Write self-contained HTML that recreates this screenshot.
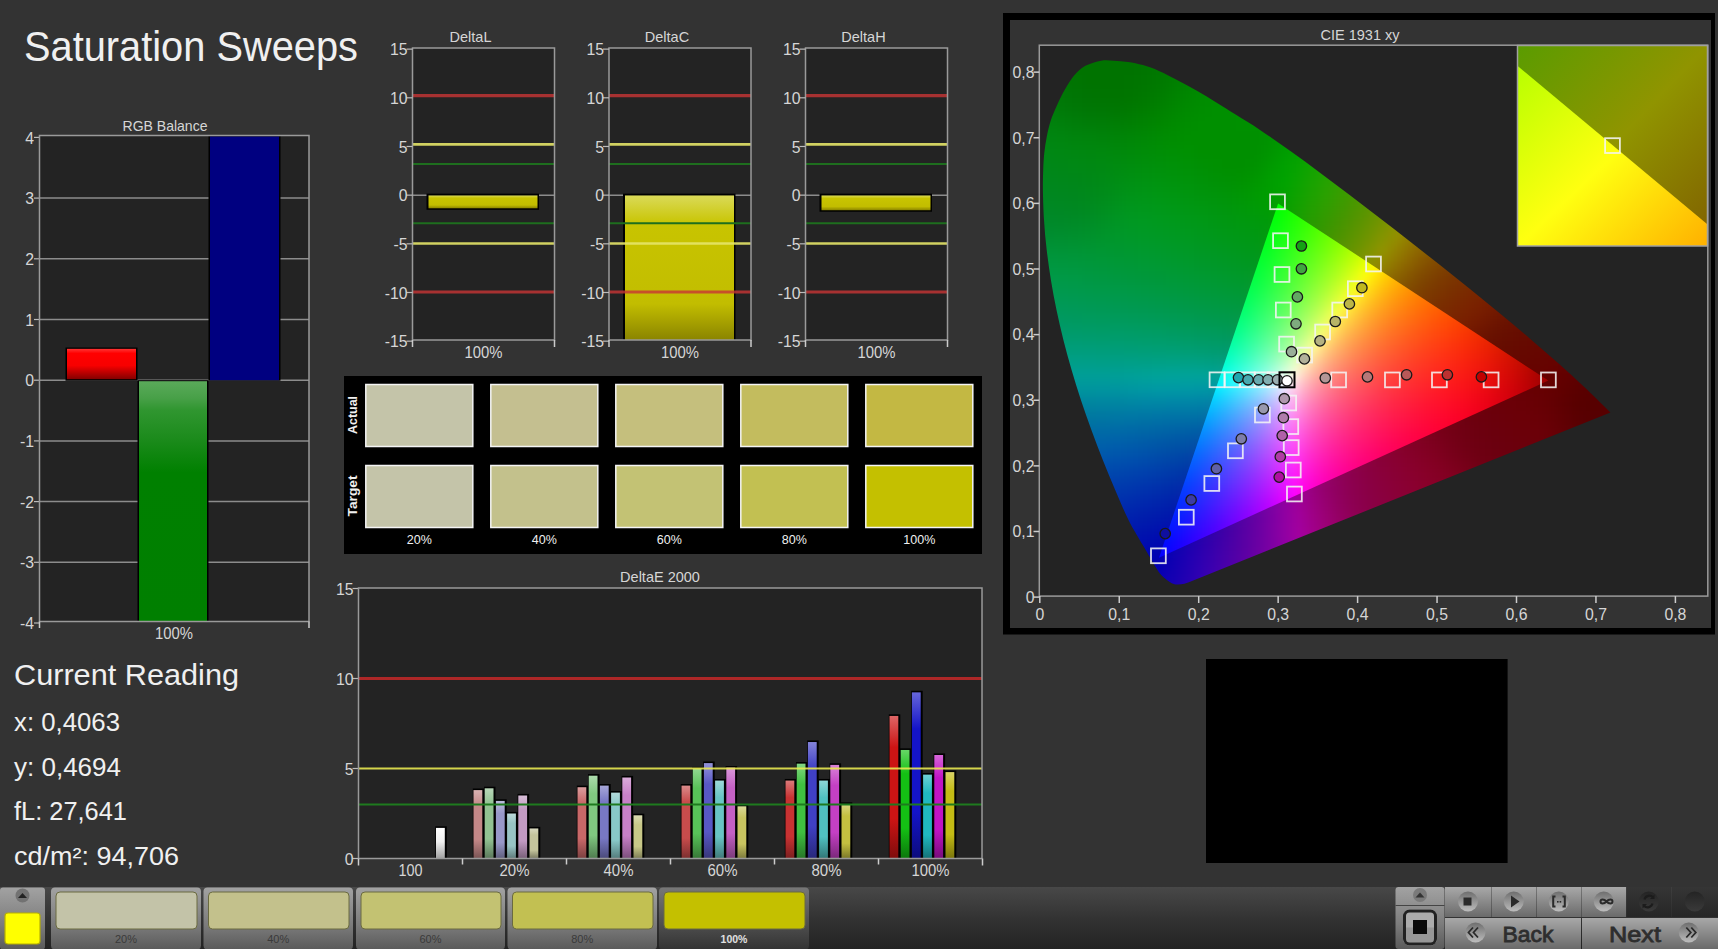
<!DOCTYPE html>
<html><head><meta charset="utf-8"><style>
html,body{margin:0;padding:0;background:#333333;width:1718px;height:949px;overflow:hidden}
svg{display:block;font-family:"Liberation Sans", sans-serif}
</style></head><body>
<svg width="1718" height="949" viewBox="0 0 1718 949">
<defs><linearGradient id="gR" x1="0" y1="0" x2="0" y2="1"><stop offset="0" stop-color="#ff3434"/><stop offset="0.15" stop-color="#ff0000"/><stop offset="0.55" stop-color="#f80000"/><stop offset="1" stop-color="#840000"/></linearGradient><linearGradient id="gG" x1="0" y1="0" x2="0" y2="1"><stop offset="0" stop-color="#5aaa5a"/><stop offset="0.07" stop-color="#48a048"/><stop offset="0.12" stop-color="#309630"/><stop offset="0.25" stop-color="#1a8a1a"/><stop offset="0.38" stop-color="#008000"/><stop offset="1" stop-color="#007f00"/></linearGradient><linearGradient id="gY" x1="0" y1="0" x2="0" y2="1"><stop offset="0" stop-color="#dada58"/><stop offset="0.2" stop-color="#c8c400"/><stop offset="0.75" stop-color="#c2bd00"/><stop offset="1" stop-color="#8a8400"/></linearGradient><linearGradient id="b1" x1="0" y1="0" x2="0" y2="1"><stop offset="0" stop-color="#d9b2b2"/><stop offset="0.22" stop-color="#c48888"/><stop offset="0.72" stop-color="#c48888"/><stop offset="1" stop-color="#7a5454"/></linearGradient><linearGradient id="b2" x1="0" y1="0" x2="0" y2="1"><stop offset="0" stop-color="#b8d7b8"/><stop offset="0.22" stop-color="#92c292"/><stop offset="0.72" stop-color="#92c292"/><stop offset="1" stop-color="#5b785b"/></linearGradient><linearGradient id="b3" x1="0" y1="0" x2="0" y2="1"><stop offset="0" stop-color="#bcbcdb"/><stop offset="0.22" stop-color="#9898c8"/><stop offset="0.72" stop-color="#9898c8"/><stop offset="1" stop-color="#5e5e7c"/></linearGradient><linearGradient id="b4" x1="0" y1="0" x2="0" y2="1"><stop offset="0" stop-color="#bcd9d9"/><stop offset="0.22" stop-color="#98c4c4"/><stop offset="0.72" stop-color="#98c4c4"/><stop offset="1" stop-color="#5e7a7a"/></linearGradient><linearGradient id="b5" x1="0" y1="0" x2="0" y2="1"><stop offset="0" stop-color="#d7bdd7"/><stop offset="0.22" stop-color="#c29ac2"/><stop offset="0.72" stop-color="#c29ac2"/><stop offset="1" stop-color="#785f78"/></linearGradient><linearGradient id="b6" x1="0" y1="0" x2="0" y2="1"><stop offset="0" stop-color="#d9d9bf"/><stop offset="0.22" stop-color="#c4c49c"/><stop offset="0.72" stop-color="#c4c49c"/><stop offset="1" stop-color="#7a7a61"/></linearGradient><linearGradient id="b7" x1="0" y1="0" x2="0" y2="1"><stop offset="0" stop-color="#db9d9d"/><stop offset="0.22" stop-color="#c86868"/><stop offset="0.72" stop-color="#c86868"/><stop offset="1" stop-color="#7c4040"/></linearGradient><linearGradient id="b8" x1="0" y1="0" x2="0" y2="1"><stop offset="0" stop-color="#acdbac"/><stop offset="0.22" stop-color="#80c880"/><stop offset="0.72" stop-color="#80c880"/><stop offset="1" stop-color="#4f7c4f"/></linearGradient><linearGradient id="b9" x1="0" y1="0" x2="0" y2="1"><stop offset="0" stop-color="#a7a7d9"/><stop offset="0.22" stop-color="#7878c4"/><stop offset="0.72" stop-color="#7878c4"/><stop offset="1" stop-color="#4a4a7a"/></linearGradient><linearGradient id="b10" x1="0" y1="0" x2="0" y2="1"><stop offset="0" stop-color="#b2dbdb"/><stop offset="0.22" stop-color="#88c8c8"/><stop offset="0.72" stop-color="#88c8c8"/><stop offset="1" stop-color="#547c7c"/></linearGradient><linearGradient id="b11" x1="0" y1="0" x2="0" y2="1"><stop offset="0" stop-color="#dbacdb"/><stop offset="0.22" stop-color="#c880c8"/><stop offset="0.72" stop-color="#c880c8"/><stop offset="1" stop-color="#7c4f7c"/></linearGradient><linearGradient id="b12" x1="0" y1="0" x2="0" y2="1"><stop offset="0" stop-color="#dbdbb2"/><stop offset="0.22" stop-color="#c8c888"/><stop offset="0.72" stop-color="#c8c888"/><stop offset="1" stop-color="#7c7c54"/></linearGradient><linearGradient id="b13" x1="0" y1="0" x2="0" y2="1"><stop offset="0" stop-color="#db8b8b"/><stop offset="0.22" stop-color="#c84c4c"/><stop offset="0.72" stop-color="#c84c4c"/><stop offset="1" stop-color="#7c2f2f"/></linearGradient><linearGradient id="b14" x1="0" y1="0" x2="0" y2="1"><stop offset="0" stop-color="#92d792"/><stop offset="0.22" stop-color="#58c258"/><stop offset="0.72" stop-color="#58c258"/><stop offset="1" stop-color="#377837"/></linearGradient><linearGradient id="b15" x1="0" y1="0" x2="0" y2="1"><stop offset="0" stop-color="#9292d9"/><stop offset="0.22" stop-color="#5858c4"/><stop offset="0.72" stop-color="#5858c4"/><stop offset="1" stop-color="#37377a"/></linearGradient><linearGradient id="b16" x1="0" y1="0" x2="0" y2="1"><stop offset="0" stop-color="#9dd9d9"/><stop offset="0.22" stop-color="#68c4c4"/><stop offset="0.72" stop-color="#68c4c4"/><stop offset="1" stop-color="#407a7a"/></linearGradient><linearGradient id="b17" x1="0" y1="0" x2="0" y2="1"><stop offset="0" stop-color="#d998d9"/><stop offset="0.22" stop-color="#c460c4"/><stop offset="0.72" stop-color="#c460c4"/><stop offset="1" stop-color="#7a3c7a"/></linearGradient><linearGradient id="b18" x1="0" y1="0" x2="0" y2="1"><stop offset="0" stop-color="#dbd998"/><stop offset="0.22" stop-color="#c8c460"/><stop offset="0.72" stop-color="#c8c460"/><stop offset="1" stop-color="#7c7a3c"/></linearGradient><linearGradient id="b19" x1="0" y1="0" x2="0" y2="1"><stop offset="0" stop-color="#db7a7a"/><stop offset="0.22" stop-color="#c83232"/><stop offset="0.72" stop-color="#c83232"/><stop offset="1" stop-color="#7c1f1f"/></linearGradient><linearGradient id="b20" x1="0" y1="0" x2="0" y2="1"><stop offset="0" stop-color="#83d683"/><stop offset="0.22" stop-color="#40c040"/><stop offset="0.72" stop-color="#40c040"/><stop offset="1" stop-color="#287728"/></linearGradient><linearGradient id="b21" x1="0" y1="0" x2="0" y2="1"><stop offset="0" stop-color="#8383d9"/><stop offset="0.22" stop-color="#4040c4"/><stop offset="0.72" stop-color="#4040c4"/><stop offset="1" stop-color="#28287a"/></linearGradient><linearGradient id="b22" x1="0" y1="0" x2="0" y2="1"><stop offset="0" stop-color="#8dd6d6"/><stop offset="0.22" stop-color="#50c0c0"/><stop offset="0.72" stop-color="#50c0c0"/><stop offset="1" stop-color="#327777"/></linearGradient><linearGradient id="b23" x1="0" y1="0" x2="0" y2="1"><stop offset="0" stop-color="#d983d9"/><stop offset="0.22" stop-color="#c440c4"/><stop offset="0.72" stop-color="#c440c4"/><stop offset="1" stop-color="#7a287a"/></linearGradient><linearGradient id="b24" x1="0" y1="0" x2="0" y2="1"><stop offset="0" stop-color="#d9d683"/><stop offset="0.22" stop-color="#c4c040"/><stop offset="0.72" stop-color="#c4c040"/><stop offset="1" stop-color="#7a7728"/></linearGradient><linearGradient id="b25" x1="0" y1="0" x2="0" y2="1"><stop offset="0" stop-color="#de6666"/><stop offset="0.22" stop-color="#cc1414"/><stop offset="0.72" stop-color="#cc1414"/><stop offset="1" stop-color="#7e0c0c"/></linearGradient><linearGradient id="b26" x1="0" y1="0" x2="0" y2="1"><stop offset="0" stop-color="#66d666"/><stop offset="0.22" stop-color="#14c014"/><stop offset="0.72" stop-color="#14c014"/><stop offset="1" stop-color="#0c770c"/></linearGradient><linearGradient id="b27" x1="0" y1="0" x2="0" y2="1"><stop offset="0" stop-color="#6666db"/><stop offset="0.22" stop-color="#1414c8"/><stop offset="0.72" stop-color="#1414c8"/><stop offset="1" stop-color="#0c0c7c"/></linearGradient><linearGradient id="b28" x1="0" y1="0" x2="0" y2="1"><stop offset="0" stop-color="#6ed1d6"/><stop offset="0.22" stop-color="#20b8c0"/><stop offset="0.72" stop-color="#20b8c0"/><stop offset="1" stop-color="#147277"/></linearGradient><linearGradient id="b29" x1="0" y1="0" x2="0" y2="1"><stop offset="0" stop-color="#d666d9"/><stop offset="0.22" stop-color="#c014c4"/><stop offset="0.72" stop-color="#c014c4"/><stop offset="1" stop-color="#770c7a"/></linearGradient><linearGradient id="b30" x1="0" y1="0" x2="0" y2="1"><stop offset="0" stop-color="#d9d366"/><stop offset="0.22" stop-color="#c4bc14"/><stop offset="0.72" stop-color="#c4bc14"/><stop offset="1" stop-color="#7a750c"/></linearGradient><linearGradient id="bw" x1="0" y1="0" x2="0" y2="1"><stop offset="0" stop-color="#ffffff"/><stop offset="0.45" stop-color="#f0f0f0"/><stop offset="1" stop-color="#a0a0a0"/></linearGradient><clipPath id="cLoc"><path d="M1178.0 584.6C1177.0 584.4 1174.5 584.8 1171.7 583.2C1168.9 581.6 1164.4 578.5 1161.2 575.0C1158.0 571.5 1155.6 566.9 1152.8 562.3C1150.0 557.7 1148.3 554.6 1144.3 547.6C1140.2 540.6 1133.3 529.6 1128.5 520.0C1123.7 510.4 1119.5 500.0 1115.2 490.0C1110.9 480.0 1106.8 470.0 1102.8 460.0C1098.8 450.0 1095.1 440.0 1091.4 430.0C1087.8 420.0 1084.2 410.0 1080.9 400.0C1077.6 390.0 1074.5 380.0 1071.6 370.0C1068.7 360.0 1065.9 350.0 1063.4 340.0C1060.9 330.0 1058.6 320.0 1056.5 310.0C1054.4 300.0 1052.5 290.0 1050.9 280.0C1049.3 270.0 1047.9 260.0 1046.7 250.0C1045.5 240.0 1044.6 230.0 1044.0 220.0C1043.4 210.0 1043.0 198.3 1042.9 190.0C1042.8 181.7 1043.0 176.2 1043.2 170.0C1043.4 163.8 1043.7 158.2 1044.3 152.7C1044.9 147.2 1045.7 142.2 1046.7 136.9C1047.8 131.6 1048.9 126.4 1050.6 121.1C1052.3 115.8 1054.6 110.6 1057.0 105.3C1059.4 100.0 1062.0 94.5 1064.9 89.5C1067.8 84.5 1070.9 79.2 1074.3 75.3C1077.7 71.3 1080.9 68.2 1085.4 65.8C1089.9 63.4 1096.5 61.6 1101.2 60.7C1105.9 59.9 1109.3 60.5 1113.8 60.7C1118.3 60.9 1123.1 61.2 1128.0 61.9C1132.9 62.6 1137.8 63.6 1143.0 65.1C1148.2 66.6 1153.2 68.4 1159.0 70.9C1164.8 73.5 1171.7 77.1 1178.0 80.4C1184.3 83.7 1190.6 87.2 1196.9 90.8C1203.2 94.4 1209.4 98.2 1215.9 102.2C1222.4 106.2 1228.7 110.2 1236.0 114.8C1243.3 119.4 1251.0 123.9 1260.0 129.9C1269.0 135.9 1280.0 143.7 1290.0 150.8C1300.0 157.9 1310.0 165.3 1320.0 172.7C1330.0 180.1 1340.0 187.7 1350.0 195.3C1360.0 202.9 1370.0 210.5 1380.0 218.2C1390.0 225.9 1400.0 233.7 1410.0 241.5C1420.0 249.3 1430.0 257.2 1440.0 265.1C1450.0 273.0 1460.0 281.0 1470.0 289.1C1480.0 297.2 1490.0 305.2 1500.0 313.5C1510.0 321.8 1520.0 330.1 1530.0 338.7C1540.0 347.2 1550.0 355.9 1560.0 364.8C1570.0 373.8 1581.6 384.5 1590.0 392.4C1598.4 400.3 1607.0 409.1 1610.4 412.4L1192 581Q1184 584.5 1178 584.6Z"/></clipPath><clipPath id="cTri"><path d="M1548.3 380.6L1278.1 203.4L1159.0 557.7Z"/></clipPath><filter id="blr" filterUnits="userSpaceOnUse" x="1012" y="33" width="640" height="590"><feGaussianBlur stdDeviation="6" color-interpolation-filters="sRGB"/></filter><filter id="blr2" filterUnits="userSpaceOnUse" x="1130" y="170" width="450" height="420"><feGaussianBlur stdDeviation="4" color-interpolation-filters="sRGB"/></filter><linearGradient id="inL" x1="0" y1="0" x2="1" y2="0"><stop offset="0" stop-color="#b4ff00"/><stop offset="0.5" stop-color="#ffff00"/><stop offset="1" stop-color="#ffb400"/></linearGradient><linearGradient id="inU" x1="0" y1="0" x2="1" y2="1"><stop offset="0" stop-color="#5a9c00"/><stop offset="0.5" stop-color="#909400"/><stop offset="1" stop-color="#806000"/></linearGradient><linearGradient id="inD" x1="0" y1="0" x2="1" y2="1"><stop offset="0" stop-color="#b8ff00"/><stop offset="0.5" stop-color="#ffff10"/><stop offset="1" stop-color="#ffb000"/></linearGradient><linearGradient id="tb" x1="0" y1="0" x2="0" y2="1"><stop offset="0" stop-color="#484848"/><stop offset="0.5" stop-color="#333333"/><stop offset="1" stop-color="#232323"/></linearGradient><linearGradient id="sw" x1="0" y1="0" x2="0" y2="1"><stop offset="0" stop-color="#a2a2a2"/><stop offset="0.6" stop-color="#7c7c7c"/><stop offset="1" stop-color="#5a5a5a"/></linearGradient><linearGradient id="swS" x1="0" y1="0" x2="0" y2="1"><stop offset="0" stop-color="#777777"/><stop offset="0.5" stop-color="#555555"/><stop offset="1" stop-color="#333333"/></linearGradient><linearGradient id="btn" x1="0" y1="0" x2="0" y2="1"><stop offset="0" stop-color="#a8a8a8"/><stop offset="1" stop-color="#6a6a6a"/></linearGradient><linearGradient id="circ" x1="0" y1="0" x2="0" y2="1"><stop offset="0" stop-color="#6e6e6e"/><stop offset="1" stop-color="#bdbdbd"/></linearGradient><linearGradient id="circD" x1="0" y1="0" x2="0" y2="1"><stop offset="0" stop-color="#242424"/><stop offset="1" stop-color="#3a3a3a"/></linearGradient><linearGradient id="tbD" x1="0" y1="0" x2="0" y2="1"><stop offset="0" stop-color="#353535"/><stop offset="1" stop-color="#262626"/></linearGradient></defs>
<rect width="1718" height="949" fill="#333333"/>
<text x="24" y="60.5" font-size="42" fill="#f0f0f0" text-anchor="start" font-weight="normal" textLength="334" lengthAdjust="spacingAndGlyphs" >Saturation Sweeps</text>
<text x="165" y="131" font-size="14.5" fill="#d6d6d6" text-anchor="middle" font-weight="normal" textLength="85" lengthAdjust="spacingAndGlyphs" >RGB Balance</text>
<rect x="39.5" y="135.5" width="269.5" height="486" fill="#232323" />
<path d="M39.5 198.1L309 198.1" stroke="#8c8c8c" stroke-width="1.5" />
<path d="M39.5 258.8L309 258.8" stroke="#8c8c8c" stroke-width="1.5" />
<path d="M39.5 319.5L309 319.5" stroke="#8c8c8c" stroke-width="1.5" />
<path d="M39.5 380.2L309 380.2" stroke="#8c8c8c" stroke-width="1.5" />
<path d="M39.5 440.9L309 440.9" stroke="#8c8c8c" stroke-width="1.5" />
<path d="M39.5 501.6L309 501.6" stroke="#8c8c8c" stroke-width="1.5" />
<path d="M39.5 562.3L309 562.3" stroke="#8c8c8c" stroke-width="1.5" />
<path d="M34 137.4L39.5 137.4" stroke="#bbbbbb" stroke-width="1.2" />
<text x="34" y="143.5" font-size="15.8" fill="#d6d6d6" text-anchor="end" font-weight="normal" >4</text>
<path d="M34 198.1L39.5 198.1" stroke="#bbbbbb" stroke-width="1.2" />
<text x="34" y="204.2" font-size="15.8" fill="#d6d6d6" text-anchor="end" font-weight="normal" >3</text>
<path d="M34 258.8L39.5 258.8" stroke="#bbbbbb" stroke-width="1.2" />
<text x="34" y="264.9" font-size="15.8" fill="#d6d6d6" text-anchor="end" font-weight="normal" >2</text>
<path d="M34 319.5L39.5 319.5" stroke="#bbbbbb" stroke-width="1.2" />
<text x="34" y="325.6" font-size="15.8" fill="#d6d6d6" text-anchor="end" font-weight="normal" >1</text>
<path d="M34 380.2L39.5 380.2" stroke="#bbbbbb" stroke-width="1.2" />
<text x="34" y="386.3" font-size="15.8" fill="#d6d6d6" text-anchor="end" font-weight="normal" >0</text>
<path d="M34 440.9L39.5 440.9" stroke="#bbbbbb" stroke-width="1.2" />
<text x="34" y="447" font-size="15.8" fill="#d6d6d6" text-anchor="end" font-weight="normal" >-1</text>
<path d="M34 501.6L39.5 501.6" stroke="#bbbbbb" stroke-width="1.2" />
<text x="34" y="507.7" font-size="15.8" fill="#d6d6d6" text-anchor="end" font-weight="normal" >-2</text>
<path d="M34 562.3L39.5 562.3" stroke="#bbbbbb" stroke-width="1.2" />
<text x="34" y="568.4" font-size="15.8" fill="#d6d6d6" text-anchor="end" font-weight="normal" >-3</text>
<path d="M34 623L39.5 623" stroke="#bbbbbb" stroke-width="1.2" />
<text x="34" y="629.1" font-size="15.8" fill="#d6d6d6" text-anchor="end" font-weight="normal" >-4</text>
<rect x="65.5" y="347.529" width="72" height="33.171" fill="#000" />
<rect x="67" y="348.829" width="69" height="30.371" fill="url(#gR)" />
<rect x="137.5" y="380.2" width="71" height="241.3" fill="#000" />
<rect x="139" y="381.2" width="68" height="240.3" fill="url(#gG)" />
<rect x="208.5" y="135.5" width="72" height="245.2" fill="#000" />
<rect x="210" y="136.5" width="69" height="243.7" fill="#000080" />
<rect x="39.5" y="135.5" width="269.5" height="486" fill="none" stroke="#9a9a9a" stroke-width="1.5"/>
<path d="M39.5 621.5L39.5 628" stroke="#cccccc" stroke-width="1.5" />
<path d="M309 621.5L309 628" stroke="#cccccc" stroke-width="1.5" />
<text x="174" y="638.5" font-size="15.8" fill="#d6d6d6" text-anchor="middle" font-weight="normal" textLength="38" lengthAdjust="spacingAndGlyphs" >100%</text>
<text x="14" y="684.5" font-size="30" fill="#f0f0f0" text-anchor="start" font-weight="normal" textLength="225" lengthAdjust="spacingAndGlyphs" >Current Reading</text>
<text x="14" y="731" font-size="25" fill="#f0f0f0" text-anchor="start" font-weight="normal" textLength="106" lengthAdjust="spacingAndGlyphs" >x: 0,4063</text>
<text x="14" y="775.5" font-size="25" fill="#f0f0f0" text-anchor="start" font-weight="normal" textLength="107" lengthAdjust="spacingAndGlyphs" >y: 0,4694</text>
<text x="14" y="820" font-size="25" fill="#f0f0f0" text-anchor="start" font-weight="normal" textLength="113" lengthAdjust="spacingAndGlyphs" >fL: 27,641</text>
<text x="14" y="864.5" font-size="25" fill="#f0f0f0" text-anchor="start" font-weight="normal" textLength="165" lengthAdjust="spacingAndGlyphs" >cd/m&#178;: 94,706</text>
<text x="470.5" y="41.5" font-size="14.5" fill="#d6d6d6" text-anchor="middle" font-weight="normal" >DeltaL</text>
<rect x="412.5" y="48" width="142" height="292" fill="#232323" />
<path d="M412.5 195.15L554.5 195.15" stroke="#8c8c8c" stroke-width="1.5" />
<rect x="426.5" y="193.65" width="112.5" height="16.1422" fill="#000" />
<rect x="428.5" y="195.45" width="109" height="12.8422" fill="url(#gY)" />
<path d="M412.5 95.7L554.5 95.7" stroke="#c83434" stroke-width="3.2" stroke-opacity="0.8"/>
<path d="M412.5 292L554.5 292" stroke="#c83434" stroke-width="3.2" stroke-opacity="0.8"/>
<path d="M412.5 144.4L554.5 144.4" stroke="#e4e468" stroke-width="2.6" stroke-opacity="0.9"/>
<path d="M412.5 243.5L554.5 243.5" stroke="#e4e468" stroke-width="2.6" stroke-opacity="0.9"/>
<path d="M412.5 164L554.5 164" stroke="#1e6e1e" stroke-width="2" />
<path d="M412.5 223.3L554.5 223.3" stroke="#1e6e1e" stroke-width="2" />
<rect x="412.5" y="48" width="142" height="292" fill="none" stroke="#9a9a9a" stroke-width="1.5"/>
<path d="M406.5 49.125L412.5 49.125" stroke="#bbbbbb" stroke-width="1.2" />
<text x="407.5" y="55.225" font-size="15.8" fill="#d6d6d6" text-anchor="end" font-weight="normal" >15</text>
<path d="M406.5 97.8L412.5 97.8" stroke="#bbbbbb" stroke-width="1.2" />
<text x="407.5" y="103.9" font-size="15.8" fill="#d6d6d6" text-anchor="end" font-weight="normal" >10</text>
<path d="M406.5 146.475L412.5 146.475" stroke="#bbbbbb" stroke-width="1.2" />
<text x="407.5" y="152.575" font-size="15.8" fill="#d6d6d6" text-anchor="end" font-weight="normal" >5</text>
<path d="M406.5 195.15L412.5 195.15" stroke="#bbbbbb" stroke-width="1.2" />
<text x="407.5" y="201.25" font-size="15.8" fill="#d6d6d6" text-anchor="end" font-weight="normal" >0</text>
<path d="M406.5 243.825L412.5 243.825" stroke="#bbbbbb" stroke-width="1.2" />
<text x="407.5" y="249.925" font-size="15.8" fill="#d6d6d6" text-anchor="end" font-weight="normal" >-5</text>
<path d="M406.5 292.5L412.5 292.5" stroke="#bbbbbb" stroke-width="1.2" />
<text x="407.5" y="298.6" font-size="15.8" fill="#d6d6d6" text-anchor="end" font-weight="normal" >-10</text>
<path d="M406.5 341.175L412.5 341.175" stroke="#bbbbbb" stroke-width="1.2" />
<text x="407.5" y="347.275" font-size="15.8" fill="#d6d6d6" text-anchor="end" font-weight="normal" >-15</text>
<path d="M412.5 340L412.5 347" stroke="#cccccc" stroke-width="1.5" />
<path d="M554.5 340L554.5 347" stroke="#cccccc" stroke-width="1.5" />
<text x="483.5" y="357.5" font-size="15.8" fill="#d6d6d6" text-anchor="middle" font-weight="normal" textLength="38" lengthAdjust="spacingAndGlyphs" >100%</text>
<text x="667" y="41.5" font-size="14.5" fill="#d6d6d6" text-anchor="middle" font-weight="normal" >DeltaC</text>
<rect x="609" y="48" width="142" height="292" fill="#232323" />
<path d="M609 195.15L751 195.15" stroke="#8c8c8c" stroke-width="1.5" />
<rect x="623" y="193.65" width="112.5" height="146.35" fill="#000" />
<rect x="625" y="195.45" width="109" height="144.55" fill="url(#gY)" />
<path d="M609 95.7L751 95.7" stroke="#c83434" stroke-width="3.2" stroke-opacity="0.8"/>
<path d="M609 292L751 292" stroke="#c83434" stroke-width="3.2" stroke-opacity="0.8"/>
<path d="M609 144.4L751 144.4" stroke="#e4e468" stroke-width="2.6" stroke-opacity="0.9"/>
<path d="M609 243.5L751 243.5" stroke="#e4e468" stroke-width="2.6" stroke-opacity="0.9"/>
<path d="M609 164L751 164" stroke="#1e6e1e" stroke-width="2" />
<path d="M609 223.3L751 223.3" stroke="#1e6e1e" stroke-width="2" />
<rect x="609" y="48" width="142" height="292" fill="none" stroke="#9a9a9a" stroke-width="1.5"/>
<path d="M603 49.125L609 49.125" stroke="#bbbbbb" stroke-width="1.2" />
<text x="604" y="55.225" font-size="15.8" fill="#d6d6d6" text-anchor="end" font-weight="normal" >15</text>
<path d="M603 97.8L609 97.8" stroke="#bbbbbb" stroke-width="1.2" />
<text x="604" y="103.9" font-size="15.8" fill="#d6d6d6" text-anchor="end" font-weight="normal" >10</text>
<path d="M603 146.475L609 146.475" stroke="#bbbbbb" stroke-width="1.2" />
<text x="604" y="152.575" font-size="15.8" fill="#d6d6d6" text-anchor="end" font-weight="normal" >5</text>
<path d="M603 195.15L609 195.15" stroke="#bbbbbb" stroke-width="1.2" />
<text x="604" y="201.25" font-size="15.8" fill="#d6d6d6" text-anchor="end" font-weight="normal" >0</text>
<path d="M603 243.825L609 243.825" stroke="#bbbbbb" stroke-width="1.2" />
<text x="604" y="249.925" font-size="15.8" fill="#d6d6d6" text-anchor="end" font-weight="normal" >-5</text>
<path d="M603 292.5L609 292.5" stroke="#bbbbbb" stroke-width="1.2" />
<text x="604" y="298.6" font-size="15.8" fill="#d6d6d6" text-anchor="end" font-weight="normal" >-10</text>
<path d="M603 341.175L609 341.175" stroke="#bbbbbb" stroke-width="1.2" />
<text x="604" y="347.275" font-size="15.8" fill="#d6d6d6" text-anchor="end" font-weight="normal" >-15</text>
<path d="M609 340L609 347" stroke="#cccccc" stroke-width="1.5" />
<path d="M751 340L751 347" stroke="#cccccc" stroke-width="1.5" />
<text x="680" y="357.5" font-size="15.8" fill="#d6d6d6" text-anchor="middle" font-weight="normal" textLength="38" lengthAdjust="spacingAndGlyphs" >100%</text>
<text x="863.5" y="41.5" font-size="14.5" fill="#d6d6d6" text-anchor="middle" font-weight="normal" >DeltaH</text>
<rect x="805.5" y="48" width="142" height="292" fill="#232323" />
<path d="M805.5 195.15L947.5 195.15" stroke="#8c8c8c" stroke-width="1.5" />
<rect x="819.5" y="193.65" width="112.5" height="18.0892" fill="#000" />
<rect x="821.5" y="195.45" width="109" height="14.7892" fill="url(#gY)" />
<path d="M805.5 95.7L947.5 95.7" stroke="#c83434" stroke-width="3.2" stroke-opacity="0.8"/>
<path d="M805.5 292L947.5 292" stroke="#c83434" stroke-width="3.2" stroke-opacity="0.8"/>
<path d="M805.5 144.4L947.5 144.4" stroke="#e4e468" stroke-width="2.6" stroke-opacity="0.9"/>
<path d="M805.5 243.5L947.5 243.5" stroke="#e4e468" stroke-width="2.6" stroke-opacity="0.9"/>
<path d="M805.5 164L947.5 164" stroke="#1e6e1e" stroke-width="2" />
<path d="M805.5 223.3L947.5 223.3" stroke="#1e6e1e" stroke-width="2" />
<rect x="805.5" y="48" width="142" height="292" fill="none" stroke="#9a9a9a" stroke-width="1.5"/>
<path d="M799.5 49.125L805.5 49.125" stroke="#bbbbbb" stroke-width="1.2" />
<text x="800.5" y="55.225" font-size="15.8" fill="#d6d6d6" text-anchor="end" font-weight="normal" >15</text>
<path d="M799.5 97.8L805.5 97.8" stroke="#bbbbbb" stroke-width="1.2" />
<text x="800.5" y="103.9" font-size="15.8" fill="#d6d6d6" text-anchor="end" font-weight="normal" >10</text>
<path d="M799.5 146.475L805.5 146.475" stroke="#bbbbbb" stroke-width="1.2" />
<text x="800.5" y="152.575" font-size="15.8" fill="#d6d6d6" text-anchor="end" font-weight="normal" >5</text>
<path d="M799.5 195.15L805.5 195.15" stroke="#bbbbbb" stroke-width="1.2" />
<text x="800.5" y="201.25" font-size="15.8" fill="#d6d6d6" text-anchor="end" font-weight="normal" >0</text>
<path d="M799.5 243.825L805.5 243.825" stroke="#bbbbbb" stroke-width="1.2" />
<text x="800.5" y="249.925" font-size="15.8" fill="#d6d6d6" text-anchor="end" font-weight="normal" >-5</text>
<path d="M799.5 292.5L805.5 292.5" stroke="#bbbbbb" stroke-width="1.2" />
<text x="800.5" y="298.6" font-size="15.8" fill="#d6d6d6" text-anchor="end" font-weight="normal" >-10</text>
<path d="M799.5 341.175L805.5 341.175" stroke="#bbbbbb" stroke-width="1.2" />
<text x="800.5" y="347.275" font-size="15.8" fill="#d6d6d6" text-anchor="end" font-weight="normal" >-15</text>
<path d="M805.5 340L805.5 347" stroke="#cccccc" stroke-width="1.5" />
<path d="M947.5 340L947.5 347" stroke="#cccccc" stroke-width="1.5" />
<text x="876.5" y="357.5" font-size="15.8" fill="#d6d6d6" text-anchor="middle" font-weight="normal" textLength="38" lengthAdjust="spacingAndGlyphs" >100%</text>
<rect x="344" y="376" width="638" height="178" fill="#000" />
<rect x="365.8" y="384.5" width="107" height="62" fill="#c4c4a9" stroke="#f4f4f4" stroke-width="1.5"/>
<rect x="365.8" y="465.5" width="107" height="62" fill="#c4c4a9" stroke="#f4f4f4" stroke-width="1.5"/>
<text x="419.3" y="544" font-size="12.5" fill="#f0f0f0" text-anchor="middle" font-weight="normal" >20%</text>
<rect x="490.8" y="384.5" width="107" height="62" fill="#c4bf90" stroke="#f4f4f4" stroke-width="1.5"/>
<rect x="490.8" y="465.5" width="107" height="62" fill="#c3c18c" stroke="#f4f4f4" stroke-width="1.5"/>
<text x="544.3" y="544" font-size="12.5" fill="#f0f0f0" text-anchor="middle" font-weight="normal" >40%</text>
<rect x="615.8" y="384.5" width="107" height="62" fill="#c5bf7d" stroke="#f4f4f4" stroke-width="1.5"/>
<rect x="615.8" y="465.5" width="107" height="62" fill="#c3c274" stroke="#f4f4f4" stroke-width="1.5"/>
<text x="669.3" y="544" font-size="12.5" fill="#f0f0f0" text-anchor="middle" font-weight="normal" >60%</text>
<rect x="740.8" y="384.5" width="107" height="62" fill="#c3bc5e" stroke="#f4f4f4" stroke-width="1.5"/>
<rect x="740.8" y="465.5" width="107" height="62" fill="#c2c052" stroke="#f4f4f4" stroke-width="1.5"/>
<text x="794.3" y="544" font-size="12.5" fill="#f0f0f0" text-anchor="middle" font-weight="normal" >80%</text>
<rect x="865.8" y="384.5" width="107" height="62" fill="#c3b843" stroke="#f4f4f4" stroke-width="1.5"/>
<rect x="865.8" y="465.5" width="107" height="62" fill="#c4c000" stroke="#f4f4f4" stroke-width="1.5"/>
<text x="919.3" y="544" font-size="12.5" fill="#f0f0f0" text-anchor="middle" font-weight="normal" >100%</text>
<text transform="translate(357,415) rotate(-90)" font-size="13" font-weight="bold" fill="#f0f0f0" text-anchor="middle" textLength="38" lengthAdjust="spacingAndGlyphs">Actual</text>
<text transform="translate(357,496) rotate(-90)" font-size="13" font-weight="bold" fill="#f0f0f0" text-anchor="middle" textLength="41" lengthAdjust="spacingAndGlyphs">Target</text>
<text x="660" y="581.5" font-size="14.5" fill="#d6d6d6" text-anchor="middle" font-weight="normal" >DeltaE 2000</text>
<rect x="358.5" y="588" width="623.5" height="270.5" fill="#232323" />
<path d="M352.5 588.5L358.5 588.5" stroke="#bbbbbb" stroke-width="1.2" />
<text x="353.5" y="594.6" font-size="15.8" fill="#d6d6d6" text-anchor="end" font-weight="normal" >15</text>
<path d="M352.5 678.5L358.5 678.5" stroke="#bbbbbb" stroke-width="1.2" />
<text x="353.5" y="684.6" font-size="15.8" fill="#d6d6d6" text-anchor="end" font-weight="normal" >10</text>
<path d="M352.5 768.5L358.5 768.5" stroke="#bbbbbb" stroke-width="1.2" />
<text x="353.5" y="774.6" font-size="15.8" fill="#d6d6d6" text-anchor="end" font-weight="normal" >5</text>
<path d="M352.5 858.5L358.5 858.5" stroke="#bbbbbb" stroke-width="1.2" />
<text x="353.5" y="864.6" font-size="15.8" fill="#d6d6d6" text-anchor="end" font-weight="normal" >0</text>
<rect x="472.8" y="788.5" width="11.5" height="70" fill="#000" />
<rect x="473.5" y="790.1" width="8.8" height="68.4" fill="url(#b1)" />
<rect x="484" y="786.7" width="11.5" height="71.8" fill="#000" />
<rect x="484.7" y="788.3" width="8.8" height="70.2" fill="url(#b2)" />
<rect x="495.2" y="799.3" width="11.5" height="59.2" fill="#000" />
<rect x="495.9" y="800.9" width="8.8" height="57.6" fill="url(#b3)" />
<rect x="506.4" y="811.9" width="11.5" height="46.6" fill="#000" />
<rect x="507.1" y="813.5" width="8.8" height="45" fill="url(#b4)" />
<rect x="517.6" y="793.9" width="11.5" height="64.6" fill="#000" />
<rect x="518.3" y="795.5" width="8.8" height="63" fill="url(#b5)" />
<rect x="528.8" y="826.84" width="11.5" height="31.66" fill="#000" />
<rect x="529.5" y="828.44" width="8.8" height="30.06" fill="url(#b6)" />
<rect x="576.8" y="785.62" width="11.5" height="72.88" fill="#000" />
<rect x="577.5" y="787.22" width="8.8" height="71.28" fill="url(#b7)" />
<rect x="588" y="774.1" width="11.5" height="84.4" fill="#000" />
<rect x="588.7" y="775.7" width="8.8" height="82.8" fill="url(#b8)" />
<rect x="599.2" y="784" width="11.5" height="74.5" fill="#000" />
<rect x="599.9" y="785.6" width="8.8" height="72.9" fill="url(#b9)" />
<rect x="610.4" y="791.02" width="11.5" height="67.48" fill="#000" />
<rect x="611.1" y="792.62" width="8.8" height="65.88" fill="url(#b10)" />
<rect x="621.6" y="775.9" width="11.5" height="82.6" fill="#000" />
<rect x="622.3" y="777.5" width="8.8" height="81" fill="url(#b11)" />
<rect x="632.8" y="813.7" width="11.5" height="44.8" fill="#000" />
<rect x="633.5" y="815.3" width="8.8" height="43.2" fill="url(#b12)" />
<rect x="680.8" y="784" width="11.5" height="74.5" fill="#000" />
<rect x="681.5" y="785.6" width="8.8" height="72.9" fill="url(#b13)" />
<rect x="692" y="766.9" width="11.5" height="91.6" fill="#000" />
<rect x="692.7" y="768.5" width="8.8" height="90" fill="url(#b14)" />
<rect x="703.2" y="761.5" width="11.5" height="97" fill="#000" />
<rect x="703.9" y="763.1" width="8.8" height="95.4" fill="url(#b15)" />
<rect x="714.4" y="778.96" width="11.5" height="79.54" fill="#000" />
<rect x="715.1" y="780.56" width="8.8" height="77.94" fill="url(#b16)" />
<rect x="725.6" y="766" width="11.5" height="92.5" fill="#000" />
<rect x="726.3" y="767.6" width="8.8" height="90.9" fill="url(#b17)" />
<rect x="736.8" y="804.7" width="11.5" height="53.8" fill="#000" />
<rect x="737.5" y="806.3" width="8.8" height="52.2" fill="url(#b18)" />
<rect x="784.8" y="778.96" width="11.5" height="79.54" fill="#000" />
<rect x="785.5" y="780.56" width="8.8" height="77.94" fill="url(#b19)" />
<rect x="796" y="762.04" width="11.5" height="96.46" fill="#000" />
<rect x="796.7" y="763.64" width="8.8" height="94.86" fill="url(#b20)" />
<rect x="807.2" y="740.44" width="11.5" height="118.06" fill="#000" />
<rect x="807.9" y="742.04" width="8.8" height="116.46" fill="url(#b21)" />
<rect x="818.4" y="778.96" width="11.5" height="79.54" fill="#000" />
<rect x="819.1" y="780.56" width="8.8" height="77.94" fill="url(#b22)" />
<rect x="829.6" y="763.3" width="11.5" height="95.2" fill="#000" />
<rect x="830.3" y="764.9" width="8.8" height="93.6" fill="url(#b23)" />
<rect x="840.8" y="802.36" width="11.5" height="56.14" fill="#000" />
<rect x="841.5" y="803.96" width="8.8" height="54.54" fill="url(#b24)" />
<rect x="888.8" y="714.34" width="11.5" height="144.16" fill="#000" />
<rect x="889.5" y="715.94" width="8.8" height="142.56" fill="url(#b25)" />
<rect x="900" y="748.36" width="11.5" height="110.14" fill="#000" />
<rect x="900.7" y="749.96" width="8.8" height="108.54" fill="url(#b26)" />
<rect x="911.2" y="690.76" width="11.5" height="167.74" fill="#000" />
<rect x="911.9" y="692.36" width="8.8" height="166.14" fill="url(#b27)" />
<rect x="922.4" y="773.02" width="11.5" height="85.48" fill="#000" />
<rect x="923.1" y="774.62" width="8.8" height="83.88" fill="url(#b28)" />
<rect x="933.6" y="753.4" width="11.5" height="105.1" fill="#000" />
<rect x="934.3" y="755" width="8.8" height="103.5" fill="url(#b29)" />
<rect x="944.8" y="770.5" width="11.5" height="88" fill="#000" />
<rect x="945.5" y="772.1" width="8.8" height="86.4" fill="url(#b30)" />
<rect x="435.3" y="826.3" width="11.5" height="32.2" fill="#000" />
<rect x="436" y="827.9" width="8.8" height="30.6" fill="url(#bw)" />
<path d="M358.5 678.5L982 678.5" stroke="#d02828" stroke-width="3" stroke-opacity="0.8"/>
<path d="M358.5 768.5L982 768.5" stroke="#e8e850" stroke-width="2.2" stroke-opacity="0.9"/>
<path d="M358.5 804.5L982 804.5" stroke="#1e7a1e" stroke-width="1.8" />
<rect x="358.5" y="588" width="623.5" height="270.5" fill="none" stroke="#9a9a9a" stroke-width="1.5"/>
<path d="M358.5 858.5L358.5 865.5" stroke="#cccccc" stroke-width="1.5" />
<path d="M462.5 858.5L462.5 864.5" stroke="#cccccc" stroke-width="1.5" />
<path d="M566.5 858.5L566.5 864.5" stroke="#cccccc" stroke-width="1.5" />
<path d="M670.5 858.5L670.5 864.5" stroke="#cccccc" stroke-width="1.5" />
<path d="M774.5 858.5L774.5 864.5" stroke="#cccccc" stroke-width="1.5" />
<path d="M878.5 858.5L878.5 864.5" stroke="#cccccc" stroke-width="1.5" />
<path d="M982.5 858.5L982.5 865.5" stroke="#cccccc" stroke-width="1.5" />
<text x="410.5" y="875.5" font-size="15.8" fill="#d6d6d6" text-anchor="middle" font-weight="normal" textLength="24" lengthAdjust="spacingAndGlyphs" >100</text>
<text x="514.5" y="875.5" font-size="15.8" fill="#d6d6d6" text-anchor="middle" font-weight="normal" textLength="30" lengthAdjust="spacingAndGlyphs" >20%</text>
<text x="618.5" y="875.5" font-size="15.8" fill="#d6d6d6" text-anchor="middle" font-weight="normal" textLength="30" lengthAdjust="spacingAndGlyphs" >40%</text>
<text x="722.5" y="875.5" font-size="15.8" fill="#d6d6d6" text-anchor="middle" font-weight="normal" textLength="30" lengthAdjust="spacingAndGlyphs" >60%</text>
<text x="826.5" y="875.5" font-size="15.8" fill="#d6d6d6" text-anchor="middle" font-weight="normal" textLength="30" lengthAdjust="spacingAndGlyphs" >80%</text>
<text x="930.5" y="875.5" font-size="15.8" fill="#d6d6d6" text-anchor="middle" font-weight="normal" textLength="38" lengthAdjust="spacingAndGlyphs" >100%</text>
<rect x="1003" y="13" width="712" height="621.5" fill="#000" />
<rect x="1010" y="20" width="701" height="608" fill="#333333" />
<text x="1360" y="39.5" font-size="14.5" fill="#d6d6d6" text-anchor="middle" font-weight="normal" >CIE 1931 xy</text>
<rect x="1039.3" y="45.2" width="668.5" height="550.9" fill="#232323" />
<g clip-path="url(#cLoc)"><g filter="url(#blr)"><path fill="#007a01" d="M1012 33h14v14h-14z"/><path fill="#007800" d="M1026 33h14v14h-14z"/><path fill="#007700" d="M1040 33h14v14h-14z"/><path fill="#007500" d="M1054 33h14v14h-14z"/><path fill="#007400" d="M1068 33h14v14h-14z"/><path fill="#007400" d="M1082 33h14v14h-14z"/><path fill="#007400" d="M1096 33h14v14h-14z"/><path fill="#007400" d="M1110 33h14v14h-14z"/><path fill="#007500" d="M1124 33h14v14h-14z"/><path fill="#007600" d="M1138 33h14v14h-14z"/><path fill="#007800" d="M1152 33h14v14h-14z"/><path fill="#007b00" d="M1166 33h14v14h-14z"/><path fill="#007f00" d="M1180 33h14v14h-14z"/><path fill="#008200" d="M1194 33h14v14h-14z"/><path fill="#008600" d="M1208 33h14v14h-14z"/><path fill="#008800" d="M1222 33h14v14h-14z"/><path fill="#008b00" d="M1236 33h14v14h-14z"/><path fill="#008d00" d="M1250 33h14v14h-14z"/><path fill="#008e00" d="M1264 33h14v14h-14z"/><path fill="#008f00" d="M1278 33h14v14h-14z"/><path fill="#009000" d="M1292 33h14v14h-14z"/><path fill="#009100" d="M1306 33h14v14h-14z"/><path fill="#009100" d="M1320 33h14v14h-14z"/><path fill="#049100" d="M1334 33h14v14h-14z"/><path fill="#0d9200" d="M1348 33h14v14h-14z"/><path fill="#159100" d="M1362 33h14v14h-14z"/><path fill="#1d9100" d="M1376 33h14v14h-14z"/><path fill="#269100" d="M1390 33h14v14h-14z"/><path fill="#2f9100" d="M1404 33h14v14h-14z"/><path fill="#389000" d="M1418 33h14v14h-14z"/><path fill="#429000" d="M1432 33h14v14h-14z"/><path fill="#4b8f00" d="M1446 33h14v14h-14z"/><path fill="#558e00" d="M1460 33h14v14h-14z"/><path fill="#5f8e00" d="M1474 33h14v14h-14z"/><path fill="#698d00" d="M1488 33h14v14h-14z"/><path fill="#748c00" d="M1502 33h14v14h-14z"/><path fill="#7f8c00" d="M1516 33h14v14h-14z"/><path fill="#8a8b00" d="M1530 33h14v14h-14z"/><path fill="#8a8000" d="M1544 33h14v14h-14z"/><path fill="#8a7600" d="M1558 33h14v14h-14z"/><path fill="#896c00" d="M1572 33h14v14h-14z"/><path fill="#896400" d="M1586 33h14v14h-14z"/><path fill="#885d00" d="M1600 33h14v14h-14z"/><path fill="#885600" d="M1614 33h14v14h-14z"/><path fill="#875000" d="M1628 33h14v14h-14z"/><path fill="#007a03" d="M1012 47h14v14h-14z"/><path fill="#007802" d="M1026 47h14v14h-14z"/><path fill="#007600" d="M1040 47h14v14h-14z"/><path fill="#007500" d="M1054 47h14v14h-14z"/><path fill="#007400" d="M1068 47h14v14h-14z"/><path fill="#007300" d="M1082 47h14v14h-14z"/><path fill="#007300" d="M1096 47h14v14h-14z"/><path fill="#007300" d="M1110 47h14v14h-14z"/><path fill="#007400" d="M1124 47h14v14h-14z"/><path fill="#007500" d="M1138 47h14v14h-14z"/><path fill="#007800" d="M1152 47h14v14h-14z"/><path fill="#007b00" d="M1166 47h14v14h-14z"/><path fill="#007f00" d="M1180 47h14v14h-14z"/><path fill="#008300" d="M1194 47h14v14h-14z"/><path fill="#008700" d="M1208 47h14v14h-14z"/><path fill="#008a00" d="M1222 47h14v14h-14z"/><path fill="#008c00" d="M1236 47h14v14h-14z"/><path fill="#008e00" d="M1250 47h14v14h-14z"/><path fill="#008f00" d="M1264 47h14v14h-14z"/><path fill="#009000" d="M1278 47h14v14h-14z"/><path fill="#009100" d="M1292 47h14v14h-14z"/><path fill="#009200" d="M1306 47h14v14h-14z"/><path fill="#009200" d="M1320 47h14v14h-14z"/><path fill="#079200" d="M1334 47h14v14h-14z"/><path fill="#109300" d="M1348 47h14v14h-14z"/><path fill="#199200" d="M1362 47h14v14h-14z"/><path fill="#219200" d="M1376 47h14v14h-14z"/><path fill="#2b9200" d="M1390 47h14v14h-14z"/><path fill="#349100" d="M1404 47h14v14h-14z"/><path fill="#3e9100" d="M1418 47h14v14h-14z"/><path fill="#479000" d="M1432 47h14v14h-14z"/><path fill="#518f00" d="M1446 47h14v14h-14z"/><path fill="#5c8f00" d="M1460 47h14v14h-14z"/><path fill="#668e00" d="M1474 47h14v14h-14z"/><path fill="#718d00" d="M1488 47h14v14h-14z"/><path fill="#7c8c00" d="M1502 47h14v14h-14z"/><path fill="#878c00" d="M1516 47h14v14h-14z"/><path fill="#8b8300" d="M1530 47h14v14h-14z"/><path fill="#8a7800" d="M1544 47h14v14h-14z"/><path fill="#8a6e00" d="M1558 47h14v14h-14z"/><path fill="#896500" d="M1572 47h14v14h-14z"/><path fill="#885e00" d="M1586 47h14v14h-14z"/><path fill="#885700" d="M1600 47h14v14h-14z"/><path fill="#875000" d="M1614 47h14v14h-14z"/><path fill="#874b00" d="M1628 47h14v14h-14z"/><path fill="#007a05" d="M1012 61h14v14h-14z"/><path fill="#007804" d="M1026 61h14v14h-14z"/><path fill="#007602" d="M1040 61h14v14h-14z"/><path fill="#007401" d="M1054 61h14v14h-14z"/><path fill="#007300" d="M1068 61h14v14h-14z"/><path fill="#007300" d="M1082 61h14v14h-14z"/><path fill="#007300" d="M1096 61h14v14h-14z"/><path fill="#007300" d="M1110 61h14v14h-14z"/><path fill="#007300" d="M1124 61h14v14h-14z"/><path fill="#007500" d="M1138 61h14v14h-14z"/><path fill="#007800" d="M1152 61h14v14h-14z"/><path fill="#007c00" d="M1166 61h14v14h-14z"/><path fill="#008100" d="M1180 61h14v14h-14z"/><path fill="#008500" d="M1194 61h14v14h-14z"/><path fill="#008900" d="M1208 61h14v14h-14z"/><path fill="#008b00" d="M1222 61h14v14h-14z"/><path fill="#008e00" d="M1236 61h14v14h-14z"/><path fill="#008f00" d="M1250 61h14v14h-14z"/><path fill="#009000" d="M1264 61h14v14h-14z"/><path fill="#009100" d="M1278 61h14v14h-14z"/><path fill="#009200" d="M1292 61h14v14h-14z"/><path fill="#009300" d="M1306 61h14v14h-14z"/><path fill="#029300" d="M1320 61h14v14h-14z"/><path fill="#0b9400" d="M1334 61h14v14h-14z"/><path fill="#139400" d="M1348 61h14v14h-14z"/><path fill="#1d9300" d="M1362 61h14v14h-14z"/><path fill="#269300" d="M1376 61h14v14h-14z"/><path fill="#2f9300" d="M1390 61h14v14h-14z"/><path fill="#399200" d="M1404 61h14v14h-14z"/><path fill="#439100" d="M1418 61h14v14h-14z"/><path fill="#4d9000" d="M1432 61h14v14h-14z"/><path fill="#589000" d="M1446 61h14v14h-14z"/><path fill="#638f00" d="M1460 61h14v14h-14z"/><path fill="#6e8e00" d="M1474 61h14v14h-14z"/><path fill="#798d00" d="M1488 61h14v14h-14z"/><path fill="#848c00" d="M1502 61h14v14h-14z"/><path fill="#8b8700" d="M1516 61h14v14h-14z"/><path fill="#8b7b00" d="M1530 61h14v14h-14z"/><path fill="#8a7000" d="M1544 61h14v14h-14z"/><path fill="#896700" d="M1558 61h14v14h-14z"/><path fill="#885f00" d="M1572 61h14v14h-14z"/><path fill="#885700" d="M1586 61h14v14h-14z"/><path fill="#875100" d="M1600 61h14v14h-14z"/><path fill="#864b00" d="M1614 61h14v14h-14z"/><path fill="#864600" d="M1628 61h14v14h-14z"/><path fill="#007c08" d="M1012 75h14v14h-14z"/><path fill="#007906" d="M1026 75h14v14h-14z"/><path fill="#007705" d="M1040 75h14v14h-14z"/><path fill="#007503" d="M1054 75h14v14h-14z"/><path fill="#007402" d="M1068 75h14v14h-14z"/><path fill="#007300" d="M1082 75h14v14h-14z"/><path fill="#007300" d="M1096 75h14v14h-14z"/><path fill="#007300" d="M1110 75h14v14h-14z"/><path fill="#007400" d="M1124 75h14v14h-14z"/><path fill="#007600" d="M1138 75h14v14h-14z"/><path fill="#007900" d="M1152 75h14v14h-14z"/><path fill="#007e00" d="M1166 75h14v14h-14z"/><path fill="#008300" d="M1180 75h14v14h-14z"/><path fill="#008800" d="M1194 75h14v14h-14z"/><path fill="#008b00" d="M1208 75h14v14h-14z"/><path fill="#008d00" d="M1222 75h14v14h-14z"/><path fill="#008f00" d="M1236 75h14v14h-14z"/><path fill="#009000" d="M1250 75h14v14h-14z"/><path fill="#009100" d="M1264 75h14v14h-14z"/><path fill="#009300" d="M1278 75h14v14h-14z"/><path fill="#009400" d="M1292 75h14v14h-14z"/><path fill="#009400" d="M1306 75h14v14h-14z"/><path fill="#059500" d="M1320 75h14v14h-14z"/><path fill="#0e9500" d="M1334 75h14v14h-14z"/><path fill="#179500" d="M1348 75h14v14h-14z"/><path fill="#219500" d="M1362 75h14v14h-14z"/><path fill="#2b9400" d="M1376 75h14v14h-14z"/><path fill="#359300" d="M1390 75h14v14h-14z"/><path fill="#3f9300" d="M1404 75h14v14h-14z"/><path fill="#499200" d="M1418 75h14v14h-14z"/><path fill="#549100" d="M1432 75h14v14h-14z"/><path fill="#5f9000" d="M1446 75h14v14h-14z"/><path fill="#6a8f00" d="M1460 75h14v14h-14z"/><path fill="#768e00" d="M1474 75h14v14h-14z"/><path fill="#818d00" d="M1488 75h14v14h-14z"/><path fill="#8c8b00" d="M1502 75h14v14h-14z"/><path fill="#8b7e00" d="M1516 75h14v14h-14z"/><path fill="#8a7200" d="M1530 75h14v14h-14z"/><path fill="#896900" d="M1544 75h14v14h-14z"/><path fill="#896000" d="M1558 75h14v14h-14z"/><path fill="#885800" d="M1572 75h14v14h-14z"/><path fill="#875100" d="M1586 75h14v14h-14z"/><path fill="#864b00" d="M1600 75h14v14h-14z"/><path fill="#864600" d="M1614 75h14v14h-14z"/><path fill="#854100" d="M1628 75h14v14h-14z"/><path fill="#007e0a" d="M1012 89h14v14h-14z"/><path fill="#007b09" d="M1026 89h14v14h-14z"/><path fill="#007907" d="M1040 89h14v14h-14z"/><path fill="#007706" d="M1054 89h14v14h-14z"/><path fill="#007504" d="M1068 89h14v14h-14z"/><path fill="#007403" d="M1082 89h14v14h-14z"/><path fill="#007401" d="M1096 89h14v14h-14z"/><path fill="#007400" d="M1110 89h14v14h-14z"/><path fill="#007500" d="M1124 89h14v14h-14z"/><path fill="#007800" d="M1138 89h14v14h-14z"/><path fill="#007c00" d="M1152 89h14v14h-14z"/><path fill="#008200" d="M1166 89h14v14h-14z"/><path fill="#008700" d="M1180 89h14v14h-14z"/><path fill="#008b00" d="M1194 89h14v14h-14z"/><path fill="#008d00" d="M1208 89h14v14h-14z"/><path fill="#008f00" d="M1222 89h14v14h-14z"/><path fill="#009000" d="M1236 89h14v14h-14z"/><path fill="#009100" d="M1250 89h14v14h-14z"/><path fill="#009200" d="M1264 89h14v14h-14z"/><path fill="#009400" d="M1278 89h14v14h-14z"/><path fill="#009500" d="M1292 89h14v14h-14z"/><path fill="#009600" d="M1306 89h14v14h-14z"/><path fill="#089600" d="M1320 89h14v14h-14z"/><path fill="#129700" d="M1334 89h14v14h-14z"/><path fill="#1c9600" d="M1348 89h14v14h-14z"/><path fill="#269600" d="M1362 89h14v14h-14z"/><path fill="#309500" d="M1376 89h14v14h-14z"/><path fill="#3a9400" d="M1390 89h14v14h-14z"/><path fill="#459300" d="M1404 89h14v14h-14z"/><path fill="#509200" d="M1418 89h14v14h-14z"/><path fill="#5b9100" d="M1432 89h14v14h-14z"/><path fill="#679000" d="M1446 89h14v14h-14z"/><path fill="#728f00" d="M1460 89h14v14h-14z"/><path fill="#7e8e00" d="M1474 89h14v14h-14z"/><path fill="#8b8d00" d="M1488 89h14v14h-14z"/><path fill="#8c8100" d="M1502 89h14v14h-14z"/><path fill="#8b7500" d="M1516 89h14v14h-14z"/><path fill="#8a6a00" d="M1530 89h14v14h-14z"/><path fill="#896100" d="M1544 89h14v14h-14z"/><path fill="#885900" d="M1558 89h14v14h-14z"/><path fill="#875200" d="M1572 89h14v14h-14z"/><path fill="#864c00" d="M1586 89h14v14h-14z"/><path fill="#864600" d="M1600 89h14v14h-14z"/><path fill="#854100" d="M1614 89h14v14h-14z"/><path fill="#843c00" d="M1628 89h14v14h-14z"/><path fill="#00810d" d="M1012 103h14v14h-14z"/><path fill="#007f0c" d="M1026 103h14v14h-14z"/><path fill="#007d0a" d="M1040 103h14v14h-14z"/><path fill="#007a08" d="M1054 103h14v14h-14z"/><path fill="#007807" d="M1068 103h14v14h-14z"/><path fill="#007705" d="M1082 103h14v14h-14z"/><path fill="#007704" d="M1096 103h14v14h-14z"/><path fill="#007702" d="M1110 103h14v14h-14z"/><path fill="#007901" d="M1124 103h14v14h-14z"/><path fill="#007d00" d="M1138 103h14v14h-14z"/><path fill="#008100" d="M1152 103h14v14h-14z"/><path fill="#008600" d="M1166 103h14v14h-14z"/><path fill="#008a00" d="M1180 103h14v14h-14z"/><path fill="#008d00" d="M1194 103h14v14h-14z"/><path fill="#008f00" d="M1208 103h14v14h-14z"/><path fill="#008f00" d="M1222 103h14v14h-14z"/><path fill="#009000" d="M1236 103h14v14h-14z"/><path fill="#009100" d="M1250 103h14v14h-14z"/><path fill="#009300" d="M1264 103h14v14h-14z"/><path fill="#009500" d="M1278 103h14v14h-14z"/><path fill="#009600" d="M1292 103h14v14h-14z"/><path fill="#029800" d="M1306 103h14v14h-14z"/><path fill="#0c9800" d="M1320 103h14v14h-14z"/><path fill="#169800" d="M1334 103h14v14h-14z"/><path fill="#209800" d="M1348 103h14v14h-14z"/><path fill="#2b9700" d="M1362 103h14v14h-14z"/><path fill="#369600" d="M1376 103h14v14h-14z"/><path fill="#419500" d="M1390 103h14v14h-14z"/><path fill="#4c9400" d="M1404 103h14v14h-14z"/><path fill="#579300" d="M1418 103h14v14h-14z"/><path fill="#639100" d="M1432 103h14v14h-14z"/><path fill="#6f9000" d="M1446 103h14v14h-14z"/><path fill="#7b8f00" d="M1460 103h14v14h-14z"/><path fill="#888e00" d="M1474 103h14v14h-14z"/><path fill="#8c8500" d="M1488 103h14v14h-14z"/><path fill="#8b7800" d="M1502 103h14v14h-14z"/><path fill="#8a6d00" d="M1516 103h14v14h-14z"/><path fill="#896300" d="M1530 103h14v14h-14z"/><path fill="#885a00" d="M1544 103h14v14h-14z"/><path fill="#875300" d="M1558 103h14v14h-14z"/><path fill="#864c00" d="M1572 103h14v14h-14z"/><path fill="#864600" d="M1586 103h14v14h-14z"/><path fill="#854100" d="M1600 103h14v14h-14z"/><path fill="#843c00" d="M1614 103h14v14h-14z"/><path fill="#843800" d="M1628 103h14v14h-14z"/><path fill="#008411" d="M1012 117h14v14h-14z"/><path fill="#00830f" d="M1026 117h14v14h-14z"/><path fill="#00820d" d="M1040 117h14v14h-14z"/><path fill="#00800c" d="M1054 117h14v14h-14z"/><path fill="#007e0a" d="M1068 117h14v14h-14z"/><path fill="#007d08" d="M1082 117h14v14h-14z"/><path fill="#007d07" d="M1096 117h14v14h-14z"/><path fill="#007e05" d="M1110 117h14v14h-14z"/><path fill="#007f03" d="M1124 117h14v14h-14z"/><path fill="#008302" d="M1138 117h14v14h-14z"/><path fill="#008600" d="M1152 117h14v14h-14z"/><path fill="#008a00" d="M1166 117h14v14h-14z"/><path fill="#008d00" d="M1180 117h14v14h-14z"/><path fill="#008f00" d="M1194 117h14v14h-14z"/><path fill="#008f00" d="M1208 117h14v14h-14z"/><path fill="#008f00" d="M1222 117h14v14h-14z"/><path fill="#009000" d="M1236 117h14v14h-14z"/><path fill="#009100" d="M1250 117h14v14h-14z"/><path fill="#009300" d="M1264 117h14v14h-14z"/><path fill="#009600" d="M1278 117h14v14h-14z"/><path fill="#009900" d="M1292 117h14v14h-14z"/><path fill="#069a00" d="M1306 117h14v14h-14z"/><path fill="#109b00" d="M1320 117h14v14h-14z"/><path fill="#1b9b00" d="M1334 117h14v14h-14z"/><path fill="#269a00" d="M1348 117h14v14h-14z"/><path fill="#319800" d="M1362 117h14v14h-14z"/><path fill="#3c9700" d="M1376 117h14v14h-14z"/><path fill="#479600" d="M1390 117h14v14h-14z"/><path fill="#539400" d="M1404 117h14v14h-14z"/><path fill="#5f9300" d="M1418 117h14v14h-14z"/><path fill="#6b9100" d="M1432 117h14v14h-14z"/><path fill="#789000" d="M1446 117h14v14h-14z"/><path fill="#858f00" d="M1460 117h14v14h-14z"/><path fill="#8d8900" d="M1474 117h14v14h-14z"/><path fill="#8c7b00" d="M1488 117h14v14h-14z"/><path fill="#8b6f00" d="M1502 117h14v14h-14z"/><path fill="#8a6400" d="M1516 117h14v14h-14z"/><path fill="#885b00" d="M1530 117h14v14h-14z"/><path fill="#875300" d="M1544 117h14v14h-14z"/><path fill="#864c00" d="M1558 117h14v14h-14z"/><path fill="#854600" d="M1572 117h14v14h-14z"/><path fill="#854100" d="M1586 117h14v14h-14z"/><path fill="#843c00" d="M1600 117h14v14h-14z"/><path fill="#833700" d="M1614 117h14v14h-14z"/><path fill="#833300" d="M1628 117h14v14h-14z"/><path fill="#008614" d="M1012 131h14v14h-14z"/><path fill="#008612" d="M1026 131h14v14h-14z"/><path fill="#008511" d="M1040 131h14v14h-14z"/><path fill="#00850f" d="M1054 131h14v14h-14z"/><path fill="#00840d" d="M1068 131h14v14h-14z"/><path fill="#00840c" d="M1082 131h14v14h-14z"/><path fill="#00830a" d="M1096 131h14v14h-14z"/><path fill="#008408" d="M1110 131h14v14h-14z"/><path fill="#008607" d="M1124 131h14v14h-14z"/><path fill="#008805" d="M1138 131h14v14h-14z"/><path fill="#008b03" d="M1152 131h14v14h-14z"/><path fill="#008d01" d="M1166 131h14v14h-14z"/><path fill="#008f00" d="M1180 131h14v14h-14z"/><path fill="#008f00" d="M1194 131h14v14h-14z"/><path fill="#008f00" d="M1208 131h14v14h-14z"/><path fill="#008f00" d="M1222 131h14v14h-14z"/><path fill="#008f00" d="M1236 131h14v14h-14z"/><path fill="#009000" d="M1250 131h14v14h-14z"/><path fill="#009300" d="M1264 131h14v14h-14z"/><path fill="#009800" d="M1278 131h14v14h-14z"/><path fill="#009c00" d="M1292 131h14v14h-14z"/><path fill="#0a9e00" d="M1306 131h14v14h-14z"/><path fill="#159e00" d="M1320 131h14v14h-14z"/><path fill="#209d00" d="M1334 131h14v14h-14z"/><path fill="#2b9b00" d="M1348 131h14v14h-14z"/><path fill="#379a00" d="M1362 131h14v14h-14z"/><path fill="#439800" d="M1376 131h14v14h-14z"/><path fill="#4f9600" d="M1390 131h14v14h-14z"/><path fill="#5b9400" d="M1404 131h14v14h-14z"/><path fill="#679300" d="M1418 131h14v14h-14z"/><path fill="#749100" d="M1432 131h14v14h-14z"/><path fill="#819000" d="M1446 131h14v14h-14z"/><path fill="#8e8e00" d="M1460 131h14v14h-14z"/><path fill="#8d7e00" d="M1474 131h14v14h-14z"/><path fill="#8b7100" d="M1488 131h14v14h-14z"/><path fill="#8a6600" d="M1502 131h14v14h-14z"/><path fill="#895d00" d="M1516 131h14v14h-14z"/><path fill="#885400" d="M1530 131h14v14h-14z"/><path fill="#864d00" d="M1544 131h14v14h-14z"/><path fill="#854600" d="M1558 131h14v14h-14z"/><path fill="#844000" d="M1572 131h14v14h-14z"/><path fill="#843b00" d="M1586 131h14v14h-14z"/><path fill="#833700" d="M1600 131h14v14h-14z"/><path fill="#823200" d="M1614 131h14v14h-14z"/><path fill="#812f00" d="M1628 131h14v14h-14z"/><path fill="#008718" d="M1012 145h14v14h-14z"/><path fill="#008716" d="M1026 145h14v14h-14z"/><path fill="#008714" d="M1040 145h14v14h-14z"/><path fill="#008713" d="M1054 145h14v14h-14z"/><path fill="#008711" d="M1068 145h14v14h-14z"/><path fill="#00870f" d="M1082 145h14v14h-14z"/><path fill="#00880e" d="M1096 145h14v14h-14z"/><path fill="#00880c" d="M1110 145h14v14h-14z"/><path fill="#008a0a" d="M1124 145h14v14h-14z"/><path fill="#008c08" d="M1138 145h14v14h-14z"/><path fill="#008e06" d="M1152 145h14v14h-14z"/><path fill="#008f04" d="M1166 145h14v14h-14z"/><path fill="#009002" d="M1180 145h14v14h-14z"/><path fill="#008f00" d="M1194 145h14v14h-14z"/><path fill="#008f00" d="M1208 145h14v14h-14z"/><path fill="#008f00" d="M1222 145h14v14h-14z"/><path fill="#008f00" d="M1236 145h14v14h-14z"/><path fill="#009000" d="M1250 145h14v14h-14z"/><path fill="#009500" d="M1264 145h14v14h-14z"/><path fill="#009d00" d="M1278 145h14v14h-14z"/><path fill="#03a000" d="M1292 145h14v14h-14z"/><path fill="#0ea100" d="M1306 145h14v14h-14z"/><path fill="#1aa000" d="M1320 145h14v14h-14z"/><path fill="#269f00" d="M1334 145h14v14h-14z"/><path fill="#329d00" d="M1348 145h14v14h-14z"/><path fill="#3e9a00" d="M1362 145h14v14h-14z"/><path fill="#4a9800" d="M1376 145h14v14h-14z"/><path fill="#569600" d="M1390 145h14v14h-14z"/><path fill="#639400" d="M1404 145h14v14h-14z"/><path fill="#709300" d="M1418 145h14v14h-14z"/><path fill="#7e9100" d="M1432 145h14v14h-14z"/><path fill="#8c8f00" d="M1446 145h14v14h-14z"/><path fill="#8e8200" d="M1460 145h14v14h-14z"/><path fill="#8c7400" d="M1474 145h14v14h-14z"/><path fill="#8b6800" d="M1488 145h14v14h-14z"/><path fill="#895e00" d="M1502 145h14v14h-14z"/><path fill="#885500" d="M1516 145h14v14h-14z"/><path fill="#864d00" d="M1530 145h14v14h-14z"/><path fill="#854600" d="M1544 145h14v14h-14z"/><path fill="#844000" d="M1558 145h14v14h-14z"/><path fill="#833b00" d="M1572 145h14v14h-14z"/><path fill="#823600" d="M1586 145h14v14h-14z"/><path fill="#823200" d="M1600 145h14v14h-14z"/><path fill="#812e00" d="M1614 145h14v14h-14z"/><path fill="#802a00" d="M1628 145h14v14h-14z"/><path fill="#00881b" d="M1012 159h14v14h-14z"/><path fill="#00871a" d="M1026 159h14v14h-14z"/><path fill="#008718" d="M1040 159h14v14h-14z"/><path fill="#008716" d="M1054 159h14v14h-14z"/><path fill="#008815" d="M1068 159h14v14h-14z"/><path fill="#008813" d="M1082 159h14v14h-14z"/><path fill="#008912" d="M1096 159h14v14h-14z"/><path fill="#008b10" d="M1110 159h14v14h-14z"/><path fill="#008d0e" d="M1124 159h14v14h-14z"/><path fill="#008f0c" d="M1138 159h14v14h-14z"/><path fill="#00900a" d="M1152 159h14v14h-14z"/><path fill="#009108" d="M1166 159h14v14h-14z"/><path fill="#009106" d="M1180 159h14v14h-14z"/><path fill="#009004" d="M1194 159h14v14h-14z"/><path fill="#009001" d="M1208 159h14v14h-14z"/><path fill="#008f00" d="M1222 159h14v14h-14z"/><path fill="#008f00" d="M1236 159h14v14h-14z"/><path fill="#009200" d="M1250 159h14v14h-14z"/><path fill="#009a00" d="M1264 159h14v14h-14z"/><path fill="#00a100" d="M1278 159h14v14h-14z"/><path fill="#07a300" d="M1292 159h14v14h-14z"/><path fill="#13a300" d="M1306 159h14v14h-14z"/><path fill="#1fa200" d="M1320 159h14v14h-14z"/><path fill="#2ca000" d="M1334 159h14v14h-14z"/><path fill="#389d00" d="M1348 159h14v14h-14z"/><path fill="#459a00" d="M1362 159h14v14h-14z"/><path fill="#519800" d="M1376 159h14v14h-14z"/><path fill="#5f9600" d="M1390 159h14v14h-14z"/><path fill="#6c9400" d="M1404 159h14v14h-14z"/><path fill="#7a9200" d="M1418 159h14v14h-14z"/><path fill="#889100" d="M1432 159h14v14h-14z"/><path fill="#8f8700" d="M1446 159h14v14h-14z"/><path fill="#8d7700" d="M1460 159h14v14h-14z"/><path fill="#8b6b00" d="M1474 159h14v14h-14z"/><path fill="#8a5f00" d="M1488 159h14v14h-14z"/><path fill="#885600" d="M1502 159h14v14h-14z"/><path fill="#864e00" d="M1516 159h14v14h-14z"/><path fill="#854700" d="M1530 159h14v14h-14z"/><path fill="#844000" d="M1544 159h14v14h-14z"/><path fill="#833b00" d="M1558 159h14v14h-14z"/><path fill="#823600" d="M1572 159h14v14h-14z"/><path fill="#813100" d="M1586 159h14v14h-14z"/><path fill="#802d00" d="M1600 159h14v14h-14z"/><path fill="#7f2a00" d="M1614 159h14v14h-14z"/><path fill="#7f2600" d="M1628 159h14v14h-14z"/><path fill="#00881f" d="M1012 173h14v14h-14z"/><path fill="#00871d" d="M1026 173h14v14h-14z"/><path fill="#00871c" d="M1040 173h14v14h-14z"/><path fill="#00871a" d="M1054 173h14v14h-14z"/><path fill="#008719" d="M1068 173h14v14h-14z"/><path fill="#008817" d="M1082 173h14v14h-14z"/><path fill="#008a16" d="M1096 173h14v14h-14z"/><path fill="#008d14" d="M1110 173h14v14h-14z"/><path fill="#009013" d="M1124 173h14v14h-14z"/><path fill="#009211" d="M1138 173h14v14h-14z"/><path fill="#00930f" d="M1152 173h14v14h-14z"/><path fill="#00930c" d="M1166 173h14v14h-14z"/><path fill="#00930a" d="M1180 173h14v14h-14z"/><path fill="#009208" d="M1194 173h14v14h-14z"/><path fill="#009105" d="M1208 173h14v14h-14z"/><path fill="#009103" d="M1222 173h14v14h-14z"/><path fill="#009200" d="M1236 173h14v14h-14z"/><path fill="#009700" d="M1250 173h14v14h-14z"/><path fill="#009e00" d="M1264 173h14v14h-14z"/><path fill="#00a300" d="M1278 173h14v14h-14z"/><path fill="#0ba300" d="M1292 173h14v14h-14z"/><path fill="#18a300" d="M1306 173h14v14h-14z"/><path fill="#25a200" d="M1320 173h14v14h-14z"/><path fill="#32a000" d="M1334 173h14v14h-14z"/><path fill="#3f9c00" d="M1348 173h14v14h-14z"/><path fill="#4c9900" d="M1362 173h14v14h-14z"/><path fill="#599700" d="M1376 173h14v14h-14z"/><path fill="#679500" d="M1390 173h14v14h-14z"/><path fill="#769300" d="M1404 173h14v14h-14z"/><path fill="#859200" d="M1418 173h14v14h-14z"/><path fill="#908c00" d="M1432 173h14v14h-14z"/><path fill="#8e7b00" d="M1446 173h14v14h-14z"/><path fill="#8c6d00" d="M1460 173h14v14h-14z"/><path fill="#8a6100" d="M1474 173h14v14h-14z"/><path fill="#885700" d="M1488 173h14v14h-14z"/><path fill="#874e00" d="M1502 173h14v14h-14z"/><path fill="#854700" d="M1516 173h14v14h-14z"/><path fill="#844000" d="M1530 173h14v14h-14z"/><path fill="#823a00" d="M1544 173h14v14h-14z"/><path fill="#813500" d="M1558 173h14v14h-14z"/><path fill="#803100" d="M1572 173h14v14h-14z"/><path fill="#7f2c00" d="M1586 173h14v14h-14z"/><path fill="#7f2900" d="M1600 173h14v14h-14z"/><path fill="#7e2500" d="M1614 173h14v14h-14z"/><path fill="#7d2200" d="M1628 173h14v14h-14z"/><path fill="#008823" d="M1012 187h14v14h-14z"/><path fill="#008721" d="M1026 187h14v14h-14z"/><path fill="#008720" d="M1040 187h14v14h-14z"/><path fill="#00871e" d="M1054 187h14v14h-14z"/><path fill="#00871d" d="M1068 187h14v14h-14z"/><path fill="#00891b" d="M1082 187h14v14h-14z"/><path fill="#008b1a" d="M1096 187h14v14h-14z"/><path fill="#008f19" d="M1110 187h14v14h-14z"/><path fill="#009317" d="M1124 187h14v14h-14z"/><path fill="#009516" d="M1138 187h14v14h-14z"/><path fill="#009613" d="M1152 187h14v14h-14z"/><path fill="#009611" d="M1166 187h14v14h-14z"/><path fill="#00950f" d="M1180 187h14v14h-14z"/><path fill="#00940c" d="M1194 187h14v14h-14z"/><path fill="#00940a" d="M1208 187h14v14h-14z"/><path fill="#009407" d="M1222 187h14v14h-14z"/><path fill="#009604" d="M1236 187h14v14h-14z"/><path fill="#009a01" d="M1250 187h14v14h-14z"/><path fill="#009e00" d="M1264 187h14v14h-14z"/><path fill="#03a200" d="M1278 187h14v14h-14z"/><path fill="#10a200" d="M1292 187h14v14h-14z"/><path fill="#1da200" d="M1306 187h14v14h-14z"/><path fill="#2ba100" d="M1320 187h14v14h-14z"/><path fill="#389d00" d="M1334 187h14v14h-14z"/><path fill="#459900" d="M1348 187h14v14h-14z"/><path fill="#539700" d="M1362 187h14v14h-14z"/><path fill="#619500" d="M1376 187h14v14h-14z"/><path fill="#719400" d="M1390 187h14v14h-14z"/><path fill="#819300" d="M1404 187h14v14h-14z"/><path fill="#919100" d="M1418 187h14v14h-14z"/><path fill="#8f7f00" d="M1432 187h14v14h-14z"/><path fill="#8d7000" d="M1446 187h14v14h-14z"/><path fill="#8b6300" d="M1460 187h14v14h-14z"/><path fill="#895800" d="M1474 187h14v14h-14z"/><path fill="#874f00" d="M1488 187h14v14h-14z"/><path fill="#854700" d="M1502 187h14v14h-14z"/><path fill="#834000" d="M1516 187h14v14h-14z"/><path fill="#823a00" d="M1530 187h14v14h-14z"/><path fill="#813400" d="M1544 187h14v14h-14z"/><path fill="#7f3000" d="M1558 187h14v14h-14z"/><path fill="#7e2c00" d="M1572 187h14v14h-14z"/><path fill="#7e2800" d="M1586 187h14v14h-14z"/><path fill="#7d2400" d="M1600 187h14v14h-14z"/><path fill="#7c2100" d="M1614 187h14v14h-14z"/><path fill="#7c1f00" d="M1628 187h14v14h-14z"/><path fill="#008928" d="M1012 201h14v14h-14z"/><path fill="#008826" d="M1026 201h14v14h-14z"/><path fill="#008824" d="M1040 201h14v14h-14z"/><path fill="#008823" d="M1054 201h14v14h-14z"/><path fill="#008821" d="M1068 201h14v14h-14z"/><path fill="#008a20" d="M1082 201h14v14h-14z"/><path fill="#008e1f" d="M1096 201h14v14h-14z"/><path fill="#00921e" d="M1110 201h14v14h-14z"/><path fill="#00961d" d="M1124 201h14v14h-14z"/><path fill="#00971b" d="M1138 201h14v14h-14z"/><path fill="#009819" d="M1152 201h14v14h-14z"/><path fill="#009816" d="M1166 201h14v14h-14z"/><path fill="#009714" d="M1180 201h14v14h-14z"/><path fill="#009711" d="M1194 201h14v14h-14z"/><path fill="#00960f" d="M1208 201h14v14h-14z"/><path fill="#00960c" d="M1222 201h14v14h-14z"/><path fill="#009809" d="M1236 201h14v14h-14z"/><path fill="#009a06" d="M1250 201h14v14h-14z"/><path fill="#009d03" d="M1264 201h14v14h-14z"/><path fill="#089f00" d="M1278 201h14v14h-14z"/><path fill="#15a000" d="M1292 201h14v14h-14z"/><path fill="#239f00" d="M1306 201h14v14h-14z"/><path fill="#319d00" d="M1320 201h14v14h-14z"/><path fill="#3e9900" d="M1334 201h14v14h-14z"/><path fill="#4c9600" d="M1348 201h14v14h-14z"/><path fill="#5b9500" d="M1362 201h14v14h-14z"/><path fill="#6b9400" d="M1376 201h14v14h-14z"/><path fill="#7c9300" d="M1390 201h14v14h-14z"/><path fill="#8d9200" d="M1404 201h14v14h-14z"/><path fill="#918400" d="M1418 201h14v14h-14z"/><path fill="#8e7400" d="M1432 201h14v14h-14z"/><path fill="#8c6600" d="M1446 201h14v14h-14z"/><path fill="#895a00" d="M1460 201h14v14h-14z"/><path fill="#874f00" d="M1474 201h14v14h-14z"/><path fill="#854700" d="M1488 201h14v14h-14z"/><path fill="#834000" d="M1502 201h14v14h-14z"/><path fill="#813900" d="M1516 201h14v14h-14z"/><path fill="#803400" d="M1530 201h14v14h-14z"/><path fill="#7f2f00" d="M1544 201h14v14h-14z"/><path fill="#7d2b00" d="M1558 201h14v14h-14z"/><path fill="#7d2700" d="M1572 201h14v14h-14z"/><path fill="#7c2300" d="M1586 201h14v14h-14z"/><path fill="#7b2000" d="M1600 201h14v14h-14z"/><path fill="#7a1d00" d="M1614 201h14v14h-14z"/><path fill="#7a1b00" d="M1628 201h14v14h-14z"/><path fill="#008b2d" d="M1012 215h14v14h-14z"/><path fill="#008a2b" d="M1026 215h14v14h-14z"/><path fill="#00892a" d="M1040 215h14v14h-14z"/><path fill="#008928" d="M1054 215h14v14h-14z"/><path fill="#008b27" d="M1068 215h14v14h-14z"/><path fill="#008d26" d="M1082 215h14v14h-14z"/><path fill="#009125" d="M1096 215h14v14h-14z"/><path fill="#009524" d="M1110 215h14v14h-14z"/><path fill="#009822" d="M1124 215h14v14h-14z"/><path fill="#009921" d="M1138 215h14v14h-14z"/><path fill="#00991e" d="M1152 215h14v14h-14z"/><path fill="#00991c" d="M1166 215h14v14h-14z"/><path fill="#009819" d="M1180 215h14v14h-14z"/><path fill="#009817" d="M1194 215h14v14h-14z"/><path fill="#009714" d="M1208 215h14v14h-14z"/><path fill="#009711" d="M1222 215h14v14h-14z"/><path fill="#00980f" d="M1236 215h14v14h-14z"/><path fill="#00990c" d="M1250 215h14v14h-14z"/><path fill="#009b09" d="M1264 215h14v14h-14z"/><path fill="#0c9c05" d="M1278 215h14v14h-14z"/><path fill="#1a9c02" d="M1292 215h14v14h-14z"/><path fill="#289b00" d="M1306 215h14v14h-14z"/><path fill="#369800" d="M1320 215h14v14h-14z"/><path fill="#459500" d="M1334 215h14v14h-14z"/><path fill="#549400" d="M1348 215h14v14h-14z"/><path fill="#659400" d="M1362 215h14v14h-14z"/><path fill="#769400" d="M1376 215h14v14h-14z"/><path fill="#899400" d="M1390 215h14v14h-14z"/><path fill="#928a00" d="M1404 215h14v14h-14z"/><path fill="#907800" d="M1418 215h14v14h-14z"/><path fill="#8d6800" d="M1432 215h14v14h-14z"/><path fill="#8a5b00" d="M1446 215h14v14h-14z"/><path fill="#875000" d="M1460 215h14v14h-14z"/><path fill="#844700" d="M1474 215h14v14h-14z"/><path fill="#823f00" d="M1488 215h14v14h-14z"/><path fill="#803900" d="M1502 215h14v14h-14z"/><path fill="#7f3300" d="M1516 215h14v14h-14z"/><path fill="#7e2e00" d="M1530 215h14v14h-14z"/><path fill="#7c2a00" d="M1544 215h14v14h-14z"/><path fill="#7b2600" d="M1558 215h14v14h-14z"/><path fill="#7a2200" d="M1572 215h14v14h-14z"/><path fill="#7a1f00" d="M1586 215h14v14h-14z"/><path fill="#791c00" d="M1600 215h14v14h-14z"/><path fill="#781a00" d="M1614 215h14v14h-14z"/><path fill="#781700" d="M1628 215h14v14h-14z"/><path fill="#008e33" d="M1012 229h14v14h-14z"/><path fill="#008e32" d="M1026 229h14v14h-14z"/><path fill="#008d30" d="M1040 229h14v14h-14z"/><path fill="#008e2f" d="M1054 229h14v14h-14z"/><path fill="#008f2d" d="M1068 229h14v14h-14z"/><path fill="#00912c" d="M1082 229h14v14h-14z"/><path fill="#00942b" d="M1096 229h14v14h-14z"/><path fill="#00972a" d="M1110 229h14v14h-14z"/><path fill="#009828" d="M1124 229h14v14h-14z"/><path fill="#009926" d="M1138 229h14v14h-14z"/><path fill="#009924" d="M1152 229h14v14h-14z"/><path fill="#009922" d="M1166 229h14v14h-14z"/><path fill="#00991f" d="M1180 229h14v14h-14z"/><path fill="#00981d" d="M1194 229h14v14h-14z"/><path fill="#00981a" d="M1208 229h14v14h-14z"/><path fill="#009817" d="M1222 229h14v14h-14z"/><path fill="#009815" d="M1236 229h14v14h-14z"/><path fill="#009812" d="M1250 229h14v14h-14z"/><path fill="#04990e" d="M1264 229h14v14h-14z"/><path fill="#11990b" d="M1278 229h14v14h-14z"/><path fill="#209908" d="M1292 229h14v14h-14z"/><path fill="#2e9704" d="M1306 229h14v14h-14z"/><path fill="#3d9600" d="M1320 229h14v14h-14z"/><path fill="#4d9400" d="M1334 229h14v14h-14z"/><path fill="#5e9400" d="M1348 229h14v14h-14z"/><path fill="#709400" d="M1362 229h14v14h-14z"/><path fill="#839400" d="M1376 229h14v14h-14z"/><path fill="#949000" d="M1390 229h14v14h-14z"/><path fill="#927d00" d="M1404 229h14v14h-14z"/><path fill="#8f6c00" d="M1418 229h14v14h-14z"/><path fill="#8a5d00" d="M1432 229h14v14h-14z"/><path fill="#865100" d="M1446 229h14v14h-14z"/><path fill="#834700" d="M1460 229h14v14h-14z"/><path fill="#813f00" d="M1474 229h14v14h-14z"/><path fill="#7f3800" d="M1488 229h14v14h-14z"/><path fill="#7e3200" d="M1502 229h14v14h-14z"/><path fill="#7c2d00" d="M1516 229h14v14h-14z"/><path fill="#7b2900" d="M1530 229h14v14h-14z"/><path fill="#7a2500" d="M1544 229h14v14h-14z"/><path fill="#792100" d="M1558 229h14v14h-14z"/><path fill="#781e00" d="M1572 229h14v14h-14z"/><path fill="#771b00" d="M1586 229h14v14h-14z"/><path fill="#771800" d="M1600 229h14v14h-14z"/><path fill="#761600" d="M1614 229h14v14h-14z"/><path fill="#761400" d="M1628 229h14v14h-14z"/><path fill="#00933b" d="M1012 243h14v14h-14z"/><path fill="#009339" d="M1026 243h14v14h-14z"/><path fill="#009338" d="M1040 243h14v14h-14z"/><path fill="#009336" d="M1054 243h14v14h-14z"/><path fill="#009435" d="M1068 243h14v14h-14z"/><path fill="#009533" d="M1082 243h14v14h-14z"/><path fill="#009632" d="M1096 243h14v14h-14z"/><path fill="#009730" d="M1110 243h14v14h-14z"/><path fill="#00982f" d="M1124 243h14v14h-14z"/><path fill="#00992d" d="M1138 243h14v14h-14z"/><path fill="#00992b" d="M1152 243h14v14h-14z"/><path fill="#009928" d="M1166 243h14v14h-14z"/><path fill="#009926" d="M1180 243h14v14h-14z"/><path fill="#009823" d="M1194 243h14v14h-14z"/><path fill="#009821" d="M1208 243h14v14h-14z"/><path fill="#00981e" d="M1222 243h14v14h-14z"/><path fill="#00981b" d="M1236 243h14v14h-14z"/><path fill="#009818" d="M1250 243h14v14h-14z"/><path fill="#089815" d="M1264 243h14v14h-14z"/><path fill="#179812" d="M1278 243h14v14h-14z"/><path fill="#26970e" d="M1292 243h14v14h-14z"/><path fill="#36960a" d="M1306 243h14v14h-14z"/><path fill="#469506" d="M1320 243h14v14h-14z"/><path fill="#579402" d="M1334 243h14v14h-14z"/><path fill="#699400" d="M1348 243h14v14h-14z"/><path fill="#7d9400" d="M1362 243h14v14h-14z"/><path fill="#929400" d="M1376 243h14v14h-14z"/><path fill="#938100" d="M1390 243h14v14h-14z"/><path fill="#906f00" d="M1404 243h14v14h-14z"/><path fill="#8b5f00" d="M1418 243h14v14h-14z"/><path fill="#865100" d="M1432 243h14v14h-14z"/><path fill="#824600" d="M1446 243h14v14h-14z"/><path fill="#803e00" d="M1460 243h14v14h-14z"/><path fill="#7e3700" d="M1474 243h14v14h-14z"/><path fill="#7d3100" d="M1488 243h14v14h-14z"/><path fill="#7b2c00" d="M1502 243h14v14h-14z"/><path fill="#7a2700" d="M1516 243h14v14h-14z"/><path fill="#792300" d="M1530 243h14v14h-14z"/><path fill="#772000" d="M1544 243h14v14h-14z"/><path fill="#771d00" d="M1558 243h14v14h-14z"/><path fill="#761a00" d="M1572 243h14v14h-14z"/><path fill="#751700" d="M1586 243h14v14h-14z"/><path fill="#751500" d="M1600 243h14v14h-14z"/><path fill="#741300" d="M1614 243h14v14h-14z"/><path fill="#741100" d="M1628 243h14v14h-14z"/><path fill="#009643" d="M1012 257h14v14h-14z"/><path fill="#009741" d="M1026 257h14v14h-14z"/><path fill="#009740" d="M1040 257h14v14h-14z"/><path fill="#00973e" d="M1054 257h14v14h-14z"/><path fill="#00973d" d="M1068 257h14v14h-14z"/><path fill="#00973b" d="M1082 257h14v14h-14z"/><path fill="#009739" d="M1096 257h14v14h-14z"/><path fill="#009837" d="M1110 257h14v14h-14z"/><path fill="#009836" d="M1124 257h14v14h-14z"/><path fill="#009934" d="M1138 257h14v14h-14z"/><path fill="#009932" d="M1152 257h14v14h-14z"/><path fill="#00992f" d="M1166 257h14v14h-14z"/><path fill="#00992d" d="M1180 257h14v14h-14z"/><path fill="#00982a" d="M1194 257h14v14h-14z"/><path fill="#009828" d="M1208 257h14v14h-14z"/><path fill="#009825" d="M1222 257h14v14h-14z"/><path fill="#009822" d="M1236 257h14v14h-14z"/><path fill="#00981f" d="M1250 257h14v14h-14z"/><path fill="#0e981c" d="M1264 257h14v14h-14z"/><path fill="#1d9719" d="M1278 257h14v14h-14z"/><path fill="#2d9615" d="M1292 257h14v14h-14z"/><path fill="#3e9511" d="M1306 257h14v14h-14z"/><path fill="#4f940d" d="M1320 257h14v14h-14z"/><path fill="#629309" d="M1334 257h14v14h-14z"/><path fill="#769305" d="M1348 257h14v14h-14z"/><path fill="#8b9301" d="M1362 257h14v14h-14z"/><path fill="#928500" d="M1376 257h14v14h-14z"/><path fill="#907200" d="M1390 257h14v14h-14z"/><path fill="#8b6000" d="M1404 257h14v14h-14z"/><path fill="#845100" d="M1418 257h14v14h-14z"/><path fill="#804600" d="M1432 257h14v14h-14z"/><path fill="#7d3d00" d="M1446 257h14v14h-14z"/><path fill="#7c3600" d="M1460 257h14v14h-14z"/><path fill="#7b3000" d="M1474 257h14v14h-14z"/><path fill="#7a2b00" d="M1488 257h14v14h-14z"/><path fill="#792600" d="M1502 257h14v14h-14z"/><path fill="#772200" d="M1516 257h14v14h-14z"/><path fill="#761f00" d="M1530 257h14v14h-14z"/><path fill="#751b00" d="M1544 257h14v14h-14z"/><path fill="#741800" d="M1558 257h14v14h-14z"/><path fill="#731600" d="M1572 257h14v14h-14z"/><path fill="#731400" d="M1586 257h14v14h-14z"/><path fill="#721100" d="M1600 257h14v14h-14z"/><path fill="#721000" d="M1614 257h14v14h-14z"/><path fill="#720e00" d="M1628 257h14v14h-14z"/><path fill="#00984a" d="M1012 271h14v14h-14z"/><path fill="#009849" d="M1026 271h14v14h-14z"/><path fill="#009948" d="M1040 271h14v14h-14z"/><path fill="#009946" d="M1054 271h14v14h-14z"/><path fill="#009945" d="M1068 271h14v14h-14z"/><path fill="#009843" d="M1082 271h14v14h-14z"/><path fill="#009841" d="M1096 271h14v14h-14z"/><path fill="#00983f" d="M1110 271h14v14h-14z"/><path fill="#00983d" d="M1124 271h14v14h-14z"/><path fill="#00983b" d="M1138 271h14v14h-14z"/><path fill="#009839" d="M1152 271h14v14h-14z"/><path fill="#009937" d="M1166 271h14v14h-14z"/><path fill="#009935" d="M1180 271h14v14h-14z"/><path fill="#009932" d="M1194 271h14v14h-14z"/><path fill="#009930" d="M1208 271h14v14h-14z"/><path fill="#00992d" d="M1222 271h14v14h-14z"/><path fill="#00992a" d="M1236 271h14v14h-14z"/><path fill="#049928" d="M1250 271h14v14h-14z"/><path fill="#149824" d="M1264 271h14v14h-14z"/><path fill="#259721" d="M1278 271h14v14h-14z"/><path fill="#36961d" d="M1292 271h14v14h-14z"/><path fill="#489519" d="M1306 271h14v14h-14z"/><path fill="#5a9315" d="M1320 271h14v14h-14z"/><path fill="#6e9211" d="M1334 271h14v14h-14z"/><path fill="#83910d" d="M1348 271h14v14h-14z"/><path fill="#908808" d="M1362 271h14v14h-14z"/><path fill="#8e7303" d="M1376 271h14v14h-14z"/><path fill="#896100" d="M1390 271h14v14h-14z"/><path fill="#835200" d="M1404 271h14v14h-14z"/><path fill="#7e4500" d="M1418 271h14v14h-14z"/><path fill="#7c3c00" d="M1432 271h14v14h-14z"/><path fill="#7b3500" d="M1446 271h14v14h-14z"/><path fill="#7b3000" d="M1460 271h14v14h-14z"/><path fill="#7a2a00" d="M1474 271h14v14h-14z"/><path fill="#792600" d="M1488 271h14v14h-14z"/><path fill="#772100" d="M1502 271h14v14h-14z"/><path fill="#751d00" d="M1516 271h14v14h-14z"/><path fill="#731a00" d="M1530 271h14v14h-14z"/><path fill="#721700" d="M1544 271h14v14h-14z"/><path fill="#711400" d="M1558 271h14v14h-14z"/><path fill="#711200" d="M1572 271h14v14h-14z"/><path fill="#701000" d="M1586 271h14v14h-14z"/><path fill="#700e00" d="M1600 271h14v14h-14z"/><path fill="#700d00" d="M1614 271h14v14h-14z"/><path fill="#6f0b00" d="M1628 271h14v14h-14z"/><path fill="#009952" d="M1012 285h14v14h-14z"/><path fill="#009951" d="M1026 285h14v14h-14z"/><path fill="#009950" d="M1040 285h14v14h-14z"/><path fill="#00994e" d="M1054 285h14v14h-14z"/><path fill="#00994d" d="M1068 285h14v14h-14z"/><path fill="#00994b" d="M1082 285h14v14h-14z"/><path fill="#009949" d="M1096 285h14v14h-14z"/><path fill="#009948" d="M1110 285h14v14h-14z"/><path fill="#009946" d="M1124 285h14v14h-14z"/><path fill="#009944" d="M1138 285h14v14h-14z"/><path fill="#009942" d="M1152 285h14v14h-14z"/><path fill="#009940" d="M1166 285h14v14h-14z"/><path fill="#00993e" d="M1180 285h14v14h-14z"/><path fill="#00993b" d="M1194 285h14v14h-14z"/><path fill="#009939" d="M1208 285h14v14h-14z"/><path fill="#009936" d="M1222 285h14v14h-14z"/><path fill="#009934" d="M1236 285h14v14h-14z"/><path fill="#0a9931" d="M1250 285h14v14h-14z"/><path fill="#1b992e" d="M1264 285h14v14h-14z"/><path fill="#2d982a" d="M1278 285h14v14h-14z"/><path fill="#3f9626" d="M1292 285h14v14h-14z"/><path fill="#539522" d="M1306 285h14v14h-14z"/><path fill="#66921e" d="M1320 285h14v14h-14z"/><path fill="#7b911a" d="M1334 285h14v14h-14z"/><path fill="#8f8c15" d="M1348 285h14v14h-14z"/><path fill="#8c750e" d="M1362 285h14v14h-14z"/><path fill="#886308" d="M1376 285h14v14h-14z"/><path fill="#835304" d="M1390 285h14v14h-14z"/><path fill="#7f4600" d="M1404 285h14v14h-14z"/><path fill="#7c3c00" d="M1418 285h14v14h-14z"/><path fill="#7b3500" d="M1432 285h14v14h-14z"/><path fill="#7a2f00" d="M1446 285h14v14h-14z"/><path fill="#7a2a00" d="M1460 285h14v14h-14z"/><path fill="#7a2500" d="M1474 285h14v14h-14z"/><path fill="#772000" d="M1488 285h14v14h-14z"/><path fill="#741c00" d="M1502 285h14v14h-14z"/><path fill="#711900" d="M1516 285h14v14h-14z"/><path fill="#701600" d="M1530 285h14v14h-14z"/><path fill="#6f1300" d="M1544 285h14v14h-14z"/><path fill="#6e1100" d="M1558 285h14v14h-14z"/><path fill="#6e0f00" d="M1572 285h14v14h-14z"/><path fill="#6e0d00" d="M1586 285h14v14h-14z"/><path fill="#6d0b00" d="M1600 285h14v14h-14z"/><path fill="#6d0a00" d="M1614 285h14v14h-14z"/><path fill="#6d0800" d="M1628 285h14v14h-14z"/><path fill="#00995b" d="M1012 299h14v14h-14z"/><path fill="#00995a" d="M1026 299h14v14h-14z"/><path fill="#009958" d="M1040 299h14v14h-14z"/><path fill="#009957" d="M1054 299h14v14h-14z"/><path fill="#009956" d="M1068 299h14v14h-14z"/><path fill="#009954" d="M1082 299h14v14h-14z"/><path fill="#009953" d="M1096 299h14v14h-14z"/><path fill="#009951" d="M1110 299h14v14h-14z"/><path fill="#00994f" d="M1124 299h14v14h-14z"/><path fill="#00994e" d="M1138 299h14v14h-14z"/><path fill="#00994c" d="M1152 299h14v14h-14z"/><path fill="#00994a" d="M1166 299h14v14h-14z"/><path fill="#009948" d="M1180 299h14v14h-14z"/><path fill="#009945" d="M1194 299h14v14h-14z"/><path fill="#009943" d="M1208 299h14v14h-14z"/><path fill="#009941" d="M1222 299h14v14h-14z"/><path fill="#00993e" d="M1236 299h14v14h-14z"/><path fill="#11993b" d="M1250 299h14v14h-14z"/><path fill="#239938" d="M1264 299h14v14h-14z"/><path fill="#369835" d="M1278 299h14v14h-14z"/><path fill="#4b9631" d="M1292 299h14v14h-14z"/><path fill="#5f942d" d="M1306 299h14v14h-14z"/><path fill="#759228" d="M1320 299h14v14h-14z"/><path fill="#8b8f24" d="M1334 299h14v14h-14z"/><path fill="#8c7a1b" d="M1348 299h14v14h-14z"/><path fill="#896513" d="M1362 299h14v14h-14z"/><path fill="#85550d" d="M1376 299h14v14h-14z"/><path fill="#804708" d="M1390 299h14v14h-14z"/><path fill="#7d3d05" d="M1404 299h14v14h-14z"/><path fill="#7b3502" d="M1418 299h14v14h-14z"/><path fill="#7a2e00" d="M1432 299h14v14h-14z"/><path fill="#7a2900" d="M1446 299h14v14h-14z"/><path fill="#7a2400" d="M1460 299h14v14h-14z"/><path fill="#792000" d="M1474 299h14v14h-14z"/><path fill="#751b00" d="M1488 299h14v14h-14z"/><path fill="#701700" d="M1502 299h14v14h-14z"/><path fill="#6d1400" d="M1516 299h14v14h-14z"/><path fill="#6c1100" d="M1530 299h14v14h-14z"/><path fill="#6b0f00" d="M1544 299h14v14h-14z"/><path fill="#6b0d00" d="M1558 299h14v14h-14z"/><path fill="#6b0c00" d="M1572 299h14v14h-14z"/><path fill="#6b0a00" d="M1586 299h14v14h-14z"/><path fill="#6b0800" d="M1600 299h14v14h-14z"/><path fill="#6b0700" d="M1614 299h14v14h-14z"/><path fill="#6a0600" d="M1628 299h14v14h-14z"/><path fill="#009964" d="M1012 313h14v14h-14z"/><path fill="#009963" d="M1026 313h14v14h-14z"/><path fill="#009962" d="M1040 313h14v14h-14z"/><path fill="#009961" d="M1054 313h14v14h-14z"/><path fill="#00995f" d="M1068 313h14v14h-14z"/><path fill="#009a5e" d="M1082 313h14v14h-14z"/><path fill="#009a5d" d="M1096 313h14v14h-14z"/><path fill="#009a5c" d="M1110 313h14v14h-14z"/><path fill="#009a5a" d="M1124 313h14v14h-14z"/><path fill="#009a59" d="M1138 313h14v14h-14z"/><path fill="#009a57" d="M1152 313h14v14h-14z"/><path fill="#009a55" d="M1166 313h14v14h-14z"/><path fill="#009a53" d="M1180 313h14v14h-14z"/><path fill="#009951" d="M1194 313h14v14h-14z"/><path fill="#00994e" d="M1208 313h14v14h-14z"/><path fill="#00994c" d="M1222 313h14v14h-14z"/><path fill="#05994a" d="M1236 313h14v14h-14z"/><path fill="#189947" d="M1250 313h14v14h-14z"/><path fill="#2c9944" d="M1264 313h14v14h-14z"/><path fill="#419841" d="M1278 313h14v14h-14z"/><path fill="#57963d" d="M1292 313h14v14h-14z"/><path fill="#6e9439" d="M1306 313h14v14h-14z"/><path fill="#859134" d="M1320 313h14v14h-14z"/><path fill="#8e802b" d="M1334 313h14v14h-14z"/><path fill="#8b6920" d="M1348 313h14v14h-14z"/><path fill="#875718" d="M1362 313h14v14h-14z"/><path fill="#834912" d="M1376 313h14v14h-14z"/><path fill="#7f3e0d" d="M1390 313h14v14h-14z"/><path fill="#7c3509" d="M1404 313h14v14h-14z"/><path fill="#7b2e05" d="M1418 313h14v14h-14z"/><path fill="#7a2803" d="M1432 313h14v14h-14z"/><path fill="#7a2300" d="M1446 313h14v14h-14z"/><path fill="#791f00" d="M1460 313h14v14h-14z"/><path fill="#751a00" d="M1474 313h14v14h-14z"/><path fill="#6e1600" d="M1488 313h14v14h-14z"/><path fill="#6a1200" d="M1502 313h14v14h-14z"/><path fill="#681000" d="M1516 313h14v14h-14z"/><path fill="#680e00" d="M1530 313h14v14h-14z"/><path fill="#690c00" d="M1544 313h14v14h-14z"/><path fill="#690a00" d="M1558 313h14v14h-14z"/><path fill="#690900" d="M1572 313h14v14h-14z"/><path fill="#690700" d="M1586 313h14v14h-14z"/><path fill="#680600" d="M1600 313h14v14h-14z"/><path fill="#680400" d="M1614 313h14v14h-14z"/><path fill="#680300" d="M1628 313h14v14h-14z"/><path fill="#009a6f" d="M1012 327h14v14h-14z"/><path fill="#009a6e" d="M1026 327h14v14h-14z"/><path fill="#009a6d" d="M1040 327h14v14h-14z"/><path fill="#009a6c" d="M1054 327h14v14h-14z"/><path fill="#009b6b" d="M1068 327h14v14h-14z"/><path fill="#009b6a" d="M1082 327h14v14h-14z"/><path fill="#009b69" d="M1096 327h14v14h-14z"/><path fill="#009c68" d="M1110 327h14v14h-14z"/><path fill="#009c67" d="M1124 327h14v14h-14z"/><path fill="#009c65" d="M1138 327h14v14h-14z"/><path fill="#009c64" d="M1152 327h14v14h-14z"/><path fill="#009b62" d="M1166 327h14v14h-14z"/><path fill="#009b60" d="M1180 327h14v14h-14z"/><path fill="#009a5e" d="M1194 327h14v14h-14z"/><path fill="#009a5c" d="M1208 327h14v14h-14z"/><path fill="#009959" d="M1222 327h14v14h-14z"/><path fill="#0c9957" d="M1236 327h14v14h-14z"/><path fill="#219955" d="M1250 327h14v14h-14z"/><path fill="#379852" d="M1264 327h14v14h-14z"/><path fill="#4e974f" d="M1278 327h14v14h-14z"/><path fill="#66964b" d="M1292 327h14v14h-14z"/><path fill="#7f9347" d="M1306 327h14v14h-14z"/><path fill="#91883f" d="M1320 327h14v14h-14z"/><path fill="#8d6f30" d="M1334 327h14v14h-14z"/><path fill="#8a5b25" d="M1348 327h14v14h-14z"/><path fill="#864c1d" d="M1362 327h14v14h-14z"/><path fill="#823f16" d="M1376 327h14v14h-14z"/><path fill="#7e3511" d="M1390 327h14v14h-14z"/><path fill="#7c2d0c" d="M1404 327h14v14h-14z"/><path fill="#7a2709" d="M1418 327h14v14h-14z"/><path fill="#792206" d="M1432 327h14v14h-14z"/><path fill="#781d04" d="M1446 327h14v14h-14z"/><path fill="#741901" d="M1460 327h14v14h-14z"/><path fill="#6e1400" d="M1474 327h14v14h-14z"/><path fill="#681100" d="M1488 327h14v14h-14z"/><path fill="#670e00" d="M1502 327h14v14h-14z"/><path fill="#660c00" d="M1516 327h14v14h-14z"/><path fill="#670a00" d="M1530 327h14v14h-14z"/><path fill="#670900" d="M1544 327h14v14h-14z"/><path fill="#670700" d="M1558 327h14v14h-14z"/><path fill="#670600" d="M1572 327h14v14h-14z"/><path fill="#660400" d="M1586 327h14v14h-14z"/><path fill="#650300" d="M1600 327h14v14h-14z"/><path fill="#650200" d="M1614 327h14v14h-14z"/><path fill="#640100" d="M1628 327h14v14h-14z"/><path fill="#009b7b" d="M1012 341h14v14h-14z"/><path fill="#009c7a" d="M1026 341h14v14h-14z"/><path fill="#009c7a" d="M1040 341h14v14h-14z"/><path fill="#009d7a" d="M1054 341h14v14h-14z"/><path fill="#009d79" d="M1068 341h14v14h-14z"/><path fill="#009d78" d="M1082 341h14v14h-14z"/><path fill="#009d77" d="M1096 341h14v14h-14z"/><path fill="#009d76" d="M1110 341h14v14h-14z"/><path fill="#009d75" d="M1124 341h14v14h-14z"/><path fill="#009e74" d="M1138 341h14v14h-14z"/><path fill="#009e73" d="M1152 341h14v14h-14z"/><path fill="#009e72" d="M1166 341h14v14h-14z"/><path fill="#009d70" d="M1180 341h14v14h-14z"/><path fill="#009c6e" d="M1194 341h14v14h-14z"/><path fill="#009b6c" d="M1208 341h14v14h-14z"/><path fill="#009a6a" d="M1222 341h14v14h-14z"/><path fill="#149a67" d="M1236 341h14v14h-14z"/><path fill="#2b9965" d="M1250 341h14v14h-14z"/><path fill="#439863" d="M1264 341h14v14h-14z"/><path fill="#5d9760" d="M1278 341h14v14h-14z"/><path fill="#78955c" d="M1292 341h14v14h-14z"/><path fill="#939258" d="M1306 341h14v14h-14z"/><path fill="#907544" d="M1320 341h14v14h-14z"/><path fill="#8d5f35" d="M1334 341h14v14h-14z"/><path fill="#894e2a" d="M1348 341h14v14h-14z"/><path fill="#854121" d="M1362 341h14v14h-14z"/><path fill="#82361a" d="M1376 341h14v14h-14z"/><path fill="#7e2d15" d="M1390 341h14v14h-14z"/><path fill="#7b2610" d="M1404 341h14v14h-14z"/><path fill="#79210c" d="M1418 341h14v14h-14z"/><path fill="#771c09" d="M1432 341h14v14h-14z"/><path fill="#741706" d="M1446 341h14v14h-14z"/><path fill="#6f1304" d="M1460 341h14v14h-14z"/><path fill="#6a1002" d="M1474 341h14v14h-14z"/><path fill="#670d00" d="M1488 341h14v14h-14z"/><path fill="#660b00" d="M1502 341h14v14h-14z"/><path fill="#660900" d="M1516 341h14v14h-14z"/><path fill="#660700" d="M1530 341h14v14h-14z"/><path fill="#670600" d="M1544 341h14v14h-14z"/><path fill="#660500" d="M1558 341h14v14h-14z"/><path fill="#650300" d="M1572 341h14v14h-14z"/><path fill="#630200" d="M1586 341h14v14h-14z"/><path fill="#620100" d="M1600 341h14v14h-14z"/><path fill="#610000" d="M1614 341h14v14h-14z"/><path fill="#610000" d="M1628 341h14v14h-14z"/><path fill="#009d88" d="M1012 355h14v14h-14z"/><path fill="#009d88" d="M1026 355h14v14h-14z"/><path fill="#009e88" d="M1040 355h14v14h-14z"/><path fill="#009e88" d="M1054 355h14v14h-14z"/><path fill="#009e87" d="M1068 355h14v14h-14z"/><path fill="#009e87" d="M1082 355h14v14h-14z"/><path fill="#009e86" d="M1096 355h14v14h-14z"/><path fill="#009e86" d="M1110 355h14v14h-14z"/><path fill="#009f86" d="M1124 355h14v14h-14z"/><path fill="#009f85" d="M1138 355h14v14h-14z"/><path fill="#00a085" d="M1152 355h14v14h-14z"/><path fill="#00a185" d="M1166 355h14v14h-14z"/><path fill="#00a084" d="M1180 355h14v14h-14z"/><path fill="#00a082" d="M1194 355h14v14h-14z"/><path fill="#009e80" d="M1208 355h14v14h-14z"/><path fill="#079d7e" d="M1222 355h14v14h-14z"/><path fill="#1e9c7b" d="M1236 355h14v14h-14z"/><path fill="#379a79" d="M1250 355h14v14h-14z"/><path fill="#529977" d="M1264 355h14v14h-14z"/><path fill="#6f9774" d="M1278 355h14v14h-14z"/><path fill="#8d9571" d="M1292 355h14v14h-14z"/><path fill="#937c5c" d="M1306 355h14v14h-14z"/><path fill="#906449" d="M1320 355h14v14h-14z"/><path fill="#8c513a" d="M1334 355h14v14h-14z"/><path fill="#89432e" d="M1348 355h14v14h-14z"/><path fill="#853725" d="M1362 355h14v14h-14z"/><path fill="#822e1e" d="M1376 355h14v14h-14z"/><path fill="#7e2618" d="M1390 355h14v14h-14z"/><path fill="#7b2013" d="M1404 355h14v14h-14z"/><path fill="#781b0f" d="M1418 355h14v14h-14z"/><path fill="#75160c" d="M1432 355h14v14h-14z"/><path fill="#711209" d="M1446 355h14v14h-14z"/><path fill="#6d0f06" d="M1460 355h14v14h-14z"/><path fill="#6a0c04" d="M1474 355h14v14h-14z"/><path fill="#670a03" d="M1488 355h14v14h-14z"/><path fill="#660801" d="M1502 355h14v14h-14z"/><path fill="#660600" d="M1516 355h14v14h-14z"/><path fill="#660500" d="M1530 355h14v14h-14z"/><path fill="#660300" d="M1544 355h14v14h-14z"/><path fill="#650200" d="M1558 355h14v14h-14z"/><path fill="#620100" d="M1572 355h14v14h-14z"/><path fill="#5f0000" d="M1586 355h14v14h-14z"/><path fill="#5e0000" d="M1600 355h14v14h-14z"/><path fill="#5d0000" d="M1614 355h14v14h-14z"/><path fill="#5d0000" d="M1628 355h14v14h-14z"/><path fill="#009d97" d="M1012 369h14v14h-14z"/><path fill="#009e97" d="M1026 369h14v14h-14z"/><path fill="#009e97" d="M1040 369h14v14h-14z"/><path fill="#009e97" d="M1054 369h14v14h-14z"/><path fill="#009e97" d="M1068 369h14v14h-14z"/><path fill="#009e97" d="M1082 369h14v14h-14z"/><path fill="#009e97" d="M1096 369h14v14h-14z"/><path fill="#009f97" d="M1110 369h14v14h-14z"/><path fill="#00a098" d="M1124 369h14v14h-14z"/><path fill="#00a299" d="M1138 369h14v14h-14z"/><path fill="#00a39a" d="M1152 369h14v14h-14z"/><path fill="#00a39b" d="M1166 369h14v14h-14z"/><path fill="#00a39a" d="M1180 369h14v14h-14z"/><path fill="#00a39a" d="M1194 369h14v14h-14z"/><path fill="#00a298" d="M1208 369h14v14h-14z"/><path fill="#10a096" d="M1222 369h14v14h-14z"/><path fill="#2a9e94" d="M1236 369h14v14h-14z"/><path fill="#479c92" d="M1250 369h14v14h-14z"/><path fill="#659a90" d="M1264 369h14v14h-14z"/><path fill="#85988d" d="M1278 369h14v14h-14z"/><path fill="#96857b" d="M1292 369h14v14h-14z"/><path fill="#936961" d="M1306 369h14v14h-14z"/><path fill="#90544d" d="M1320 369h14v14h-14z"/><path fill="#8c443e" d="M1334 369h14v14h-14z"/><path fill="#893833" d="M1348 369h14v14h-14z"/><path fill="#852e29" d="M1362 369h14v14h-14z"/><path fill="#822622" d="M1376 369h14v14h-14z"/><path fill="#7e1f1c" d="M1390 369h14v14h-14z"/><path fill="#7b1a16" d="M1404 369h14v14h-14z"/><path fill="#771512" d="M1418 369h14v14h-14z"/><path fill="#74110f" d="M1432 369h14v14h-14z"/><path fill="#710e0b" d="M1446 369h14v14h-14z"/><path fill="#6d0b09" d="M1460 369h14v14h-14z"/><path fill="#6b0907" d="M1474 369h14v14h-14z"/><path fill="#690705" d="M1488 369h14v14h-14z"/><path fill="#670503" d="M1502 369h14v14h-14z"/><path fill="#670302" d="M1516 369h14v14h-14z"/><path fill="#670200" d="M1530 369h14v14h-14z"/><path fill="#650100" d="M1544 369h14v14h-14z"/><path fill="#620000" d="M1558 369h14v14h-14z"/><path fill="#5e0000" d="M1572 369h14v14h-14z"/><path fill="#5b0000" d="M1586 369h14v14h-14z"/><path fill="#5a0000" d="M1600 369h14v14h-14z"/><path fill="#5a0000" d="M1614 369h14v14h-14z"/><path fill="#5a0000" d="M1628 369h14v14h-14z"/><path fill="#00959e" d="M1012 383h14v14h-14z"/><path fill="#00959e" d="M1026 383h14v14h-14z"/><path fill="#00959e" d="M1040 383h14v14h-14z"/><path fill="#00949e" d="M1054 383h14v14h-14z"/><path fill="#00949e" d="M1068 383h14v14h-14z"/><path fill="#00949e" d="M1082 383h14v14h-14z"/><path fill="#00949f" d="M1096 383h14v14h-14z"/><path fill="#0094a0" d="M1110 383h14v14h-14z"/><path fill="#0096a2" d="M1124 383h14v14h-14z"/><path fill="#0097a3" d="M1138 383h14v14h-14z"/><path fill="#0098a5" d="M1152 383h14v14h-14z"/><path fill="#0098a5" d="M1166 383h14v14h-14z"/><path fill="#0097a5" d="M1180 383h14v14h-14z"/><path fill="#0096a5" d="M1194 383h14v14h-14z"/><path fill="#0095a4" d="M1208 383h14v14h-14z"/><path fill="#1993a2" d="M1222 383h14v14h-14z"/><path fill="#3490a0" d="M1236 383h14v14h-14z"/><path fill="#508d9e" d="M1250 383h14v14h-14z"/><path fill="#6f8a9b" d="M1264 383h14v14h-14z"/><path fill="#8f8799" d="M1278 383h14v14h-14z"/><path fill="#966f7f" d="M1292 383h14v14h-14z"/><path fill="#935765" d="M1306 383h14v14h-14z"/><path fill="#904651" d="M1320 383h14v14h-14z"/><path fill="#8d3842" d="M1334 383h14v14h-14z"/><path fill="#892e37" d="M1348 383h14v14h-14z"/><path fill="#86252d" d="M1362 383h14v14h-14z"/><path fill="#821e25" d="M1376 383h14v14h-14z"/><path fill="#7f191f" d="M1390 383h14v14h-14z"/><path fill="#7b141a" d="M1404 383h14v14h-14z"/><path fill="#781015" d="M1418 383h14v14h-14z"/><path fill="#740c11" d="M1432 383h14v14h-14z"/><path fill="#710a0e" d="M1446 383h14v14h-14z"/><path fill="#6e070b" d="M1460 383h14v14h-14z"/><path fill="#6c0509" d="M1474 383h14v14h-14z"/><path fill="#6a0307" d="M1488 383h14v14h-14z"/><path fill="#690205" d="M1502 383h14v14h-14z"/><path fill="#680004" d="M1516 383h14v14h-14z"/><path fill="#670002" d="M1530 383h14v14h-14z"/><path fill="#640001" d="M1544 383h14v14h-14z"/><path fill="#5f0000" d="M1558 383h14v14h-14z"/><path fill="#5a0000" d="M1572 383h14v14h-14z"/><path fill="#580000" d="M1586 383h14v14h-14z"/><path fill="#570000" d="M1600 383h14v14h-14z"/><path fill="#580000" d="M1614 383h14v14h-14z"/><path fill="#590000" d="M1628 383h14v14h-14z"/><path fill="#00879e" d="M1012 397h14v14h-14z"/><path fill="#00879e" d="M1026 397h14v14h-14z"/><path fill="#00869e" d="M1040 397h14v14h-14z"/><path fill="#00859e" d="M1054 397h14v14h-14z"/><path fill="#00849e" d="M1068 397h14v14h-14z"/><path fill="#00849f" d="M1082 397h14v14h-14z"/><path fill="#0084a0" d="M1096 397h14v14h-14z"/><path fill="#0084a1" d="M1110 397h14v14h-14z"/><path fill="#0085a3" d="M1124 397h14v14h-14z"/><path fill="#0085a5" d="M1138 397h14v14h-14z"/><path fill="#0085a5" d="M1152 397h14v14h-14z"/><path fill="#0084a6" d="M1166 397h14v14h-14z"/><path fill="#0083a6" d="M1180 397h14v14h-14z"/><path fill="#0081a6" d="M1194 397h14v14h-14z"/><path fill="#077fa5" d="M1208 397h14v14h-14z"/><path fill="#207da4" d="M1222 397h14v14h-14z"/><path fill="#3979a2" d="M1236 397h14v14h-14z"/><path fill="#54769f" d="M1250 397h14v14h-14z"/><path fill="#71729c" d="M1264 397h14v14h-14z"/><path fill="#8f6e9a" d="M1278 397h14v14h-14z"/><path fill="#975b82" d="M1292 397h14v14h-14z"/><path fill="#944869" d="M1306 397h14v14h-14z"/><path fill="#903955" d="M1320 397h14v14h-14z"/><path fill="#8d2e46" d="M1334 397h14v14h-14z"/><path fill="#8a253b" d="M1348 397h14v14h-14z"/><path fill="#871d31" d="M1362 397h14v14h-14z"/><path fill="#831729" d="M1376 397h14v14h-14z"/><path fill="#801322" d="M1390 397h14v14h-14z"/><path fill="#7c0e1d" d="M1404 397h14v14h-14z"/><path fill="#780b18" d="M1418 397h14v14h-14z"/><path fill="#750814" d="M1432 397h14v14h-14z"/><path fill="#710610" d="M1446 397h14v14h-14z"/><path fill="#6e030d" d="M1460 397h14v14h-14z"/><path fill="#6c020b" d="M1474 397h14v14h-14z"/><path fill="#6b0009" d="M1488 397h14v14h-14z"/><path fill="#6b0007" d="M1502 397h14v14h-14z"/><path fill="#6a0006" d="M1516 397h14v14h-14z"/><path fill="#680004" d="M1530 397h14v14h-14z"/><path fill="#640003" d="M1544 397h14v14h-14z"/><path fill="#5d0001" d="M1558 397h14v14h-14z"/><path fill="#580000" d="M1572 397h14v14h-14z"/><path fill="#570000" d="M1586 397h14v14h-14z"/><path fill="#570000" d="M1600 397h14v14h-14z"/><path fill="#570000" d="M1614 397h14v14h-14z"/><path fill="#580000" d="M1628 397h14v14h-14z"/><path fill="#007b9f" d="M1012 411h14v14h-14z"/><path fill="#007a9f" d="M1026 411h14v14h-14z"/><path fill="#00799f" d="M1040 411h14v14h-14z"/><path fill="#0078a0" d="M1054 411h14v14h-14z"/><path fill="#0077a0" d="M1068 411h14v14h-14z"/><path fill="#0076a1" d="M1082 411h14v14h-14z"/><path fill="#0076a2" d="M1096 411h14v14h-14z"/><path fill="#0076a4" d="M1110 411h14v14h-14z"/><path fill="#0075a5" d="M1124 411h14v14h-14z"/><path fill="#0074a5" d="M1138 411h14v14h-14z"/><path fill="#0073a6" d="M1152 411h14v14h-14z"/><path fill="#0071a6" d="M1166 411h14v14h-14z"/><path fill="#0070a6" d="M1180 411h14v14h-14z"/><path fill="#006ea6" d="M1194 411h14v14h-14z"/><path fill="#0e6ba5" d="M1208 411h14v14h-14z"/><path fill="#2568a4" d="M1222 411h14v14h-14z"/><path fill="#3e65a2" d="M1236 411h14v14h-14z"/><path fill="#5761a0" d="M1250 411h14v14h-14z"/><path fill="#725d9d" d="M1264 411h14v14h-14z"/><path fill="#8e589a" d="M1278 411h14v14h-14z"/><path fill="#974985" d="M1292 411h14v14h-14z"/><path fill="#94396c" d="M1306 411h14v14h-14z"/><path fill="#912d59" d="M1320 411h14v14h-14z"/><path fill="#8e234a" d="M1334 411h14v14h-14z"/><path fill="#8b1c3e" d="M1348 411h14v14h-14z"/><path fill="#881635" d="M1362 411h14v14h-14z"/><path fill="#85112d" d="M1376 411h14v14h-14z"/><path fill="#820d26" d="M1390 411h14v14h-14z"/><path fill="#7e0920" d="M1404 411h14v14h-14z"/><path fill="#7a061b" d="M1418 411h14v14h-14z"/><path fill="#760416" d="M1432 411h14v14h-14z"/><path fill="#710213" d="M1446 411h14v14h-14z"/><path fill="#6e0010" d="M1460 411h14v14h-14z"/><path fill="#6c000d" d="M1474 411h14v14h-14z"/><path fill="#6b000b" d="M1488 411h14v14h-14z"/><path fill="#6b0009" d="M1502 411h14v14h-14z"/><path fill="#6b0007" d="M1516 411h14v14h-14z"/><path fill="#6a0006" d="M1530 411h14v14h-14z"/><path fill="#660004" d="M1544 411h14v14h-14z"/><path fill="#5f0003" d="M1558 411h14v14h-14z"/><path fill="#590002" d="M1572 411h14v14h-14z"/><path fill="#570001" d="M1586 411h14v14h-14z"/><path fill="#570000" d="M1600 411h14v14h-14z"/><path fill="#570000" d="M1614 411h14v14h-14z"/><path fill="#580000" d="M1628 411h14v14h-14z"/><path fill="#006fa1" d="M1012 425h14v14h-14z"/><path fill="#006ea1" d="M1026 425h14v14h-14z"/><path fill="#006da1" d="M1040 425h14v14h-14z"/><path fill="#006ca2" d="M1054 425h14v14h-14z"/><path fill="#006ca3" d="M1068 425h14v14h-14z"/><path fill="#006ba5" d="M1082 425h14v14h-14z"/><path fill="#006aa6" d="M1096 425h14v14h-14z"/><path fill="#0069a7" d="M1110 425h14v14h-14z"/><path fill="#0067a7" d="M1124 425h14v14h-14z"/><path fill="#0065a6" d="M1138 425h14v14h-14z"/><path fill="#0063a6" d="M1152 425h14v14h-14z"/><path fill="#0061a6" d="M1166 425h14v14h-14z"/><path fill="#005ea6" d="M1180 425h14v14h-14z"/><path fill="#005ca6" d="M1194 425h14v14h-14z"/><path fill="#1559a5" d="M1208 425h14v14h-14z"/><path fill="#2b56a4" d="M1222 425h14v14h-14z"/><path fill="#4252a2" d="M1236 425h14v14h-14z"/><path fill="#5a4ea0" d="M1250 425h14v14h-14z"/><path fill="#73499d" d="M1264 425h14v14h-14z"/><path fill="#8d459b" d="M1278 425h14v14h-14z"/><path fill="#973988" d="M1292 425h14v14h-14z"/><path fill="#942c6f" d="M1306 425h14v14h-14z"/><path fill="#91225d" d="M1320 425h14v14h-14z"/><path fill="#8e1a4e" d="M1334 425h14v14h-14z"/><path fill="#8b1442" d="M1348 425h14v14h-14z"/><path fill="#890f38" d="M1362 425h14v14h-14z"/><path fill="#860a30" d="M1376 425h14v14h-14z"/><path fill="#840729" d="M1390 425h14v14h-14z"/><path fill="#810423" d="M1404 425h14v14h-14z"/><path fill="#7d021e" d="M1418 425h14v14h-14z"/><path fill="#780019" d="M1432 425h14v14h-14z"/><path fill="#730015" d="M1446 425h14v14h-14z"/><path fill="#6f0012" d="M1460 425h14v14h-14z"/><path fill="#6c000f" d="M1474 425h14v14h-14z"/><path fill="#6b000d" d="M1488 425h14v14h-14z"/><path fill="#6b000b" d="M1502 425h14v14h-14z"/><path fill="#6b0009" d="M1516 425h14v14h-14z"/><path fill="#6b0008" d="M1530 425h14v14h-14z"/><path fill="#680006" d="M1544 425h14v14h-14z"/><path fill="#620004" d="M1558 425h14v14h-14z"/><path fill="#5b0003" d="M1572 425h14v14h-14z"/><path fill="#580002" d="M1586 425h14v14h-14z"/><path fill="#580001" d="M1600 425h14v14h-14z"/><path fill="#580000" d="M1614 425h14v14h-14z"/><path fill="#590000" d="M1628 425h14v14h-14z"/><path fill="#0064a2" d="M1012 439h14v14h-14z"/><path fill="#0063a3" d="M1026 439h14v14h-14z"/><path fill="#0063a4" d="M1040 439h14v14h-14z"/><path fill="#0062a6" d="M1054 439h14v14h-14z"/><path fill="#0061a7" d="M1068 439h14v14h-14z"/><path fill="#0060a9" d="M1082 439h14v14h-14z"/><path fill="#005faa" d="M1096 439h14v14h-14z"/><path fill="#005dab" d="M1110 439h14v14h-14z"/><path fill="#005baa" d="M1124 439h14v14h-14z"/><path fill="#0058a9" d="M1138 439h14v14h-14z"/><path fill="#0055a7" d="M1152 439h14v14h-14z"/><path fill="#0052a6" d="M1166 439h14v14h-14z"/><path fill="#004fa6" d="M1180 439h14v14h-14z"/><path fill="#064ca5" d="M1194 439h14v14h-14z"/><path fill="#1a49a5" d="M1208 439h14v14h-14z"/><path fill="#2f45a4" d="M1222 439h14v14h-14z"/><path fill="#4541a2" d="M1236 439h14v14h-14z"/><path fill="#5c3da0" d="M1250 439h14v14h-14z"/><path fill="#74389e" d="M1264 439h14v14h-14z"/><path fill="#8d339b" d="M1278 439h14v14h-14z"/><path fill="#982a8a" d="M1292 439h14v14h-14z"/><path fill="#942072" d="M1306 439h14v14h-14z"/><path fill="#911760" d="M1320 439h14v14h-14z"/><path fill="#8e1151" d="M1334 439h14v14h-14z"/><path fill="#8c0c45" d="M1348 439h14v14h-14z"/><path fill="#8a083c" d="M1362 439h14v14h-14z"/><path fill="#880434" d="M1376 439h14v14h-14z"/><path fill="#87012d" d="M1390 439h14v14h-14z"/><path fill="#840027" d="M1404 439h14v14h-14z"/><path fill="#810022" d="M1418 439h14v14h-14z"/><path fill="#7c001d" d="M1432 439h14v14h-14z"/><path fill="#750018" d="M1446 439h14v14h-14z"/><path fill="#700014" d="M1460 439h14v14h-14z"/><path fill="#6d0011" d="M1474 439h14v14h-14z"/><path fill="#6b000f" d="M1488 439h14v14h-14z"/><path fill="#6b000d" d="M1502 439h14v14h-14z"/><path fill="#6b000b" d="M1516 439h14v14h-14z"/><path fill="#6b0009" d="M1530 439h14v14h-14z"/><path fill="#690008" d="M1544 439h14v14h-14z"/><path fill="#650006" d="M1558 439h14v14h-14z"/><path fill="#5f0005" d="M1572 439h14v14h-14z"/><path fill="#5c0003" d="M1586 439h14v14h-14z"/><path fill="#5a0002" d="M1600 439h14v14h-14z"/><path fill="#5a0002" d="M1614 439h14v14h-14z"/><path fill="#5b0001" d="M1628 439h14v14h-14z"/><path fill="#005aa4" d="M1012 453h14v14h-14z"/><path fill="#0059a5" d="M1026 453h14v14h-14z"/><path fill="#0058a7" d="M1040 453h14v14h-14z"/><path fill="#0057a8" d="M1054 453h14v14h-14z"/><path fill="#0056aa" d="M1068 453h14v14h-14z"/><path fill="#0055ac" d="M1082 453h14v14h-14z"/><path fill="#0053ad" d="M1096 453h14v14h-14z"/><path fill="#0051ad" d="M1110 453h14v14h-14z"/><path fill="#004fad" d="M1124 453h14v14h-14z"/><path fill="#004cac" d="M1138 453h14v14h-14z"/><path fill="#0048aa" d="M1152 453h14v14h-14z"/><path fill="#0045a8" d="M1166 453h14v14h-14z"/><path fill="#0041a7" d="M1180 453h14v14h-14z"/><path fill="#0c3ea6" d="M1194 453h14v14h-14z"/><path fill="#1f3aa5" d="M1208 453h14v14h-14z"/><path fill="#3336a3" d="M1222 453h14v14h-14z"/><path fill="#4832a2" d="M1236 453h14v14h-14z"/><path fill="#5e2ea0" d="M1250 453h14v14h-14z"/><path fill="#75299e" d="M1264 453h14v14h-14z"/><path fill="#8d249b" d="M1278 453h14v14h-14z"/><path fill="#981d8d" d="M1292 453h14v14h-14z"/><path fill="#951475" d="M1306 453h14v14h-14z"/><path fill="#920e63" d="M1320 453h14v14h-14z"/><path fill="#8e0854" d="M1334 453h14v14h-14z"/><path fill="#8c0448" d="M1348 453h14v14h-14z"/><path fill="#8a013f" d="M1362 453h14v14h-14z"/><path fill="#890037" d="M1376 453h14v14h-14z"/><path fill="#890031" d="M1390 453h14v14h-14z"/><path fill="#87002b" d="M1404 453h14v14h-14z"/><path fill="#850025" d="M1418 453h14v14h-14z"/><path fill="#810020" d="M1432 453h14v14h-14z"/><path fill="#7a001b" d="M1446 453h14v14h-14z"/><path fill="#740017" d="M1460 453h14v14h-14z"/><path fill="#6f0013" d="M1474 453h14v14h-14z"/><path fill="#6d0011" d="M1488 453h14v14h-14z"/><path fill="#6c000f" d="M1502 453h14v14h-14z"/><path fill="#6b000d" d="M1516 453h14v14h-14z"/><path fill="#6b000b" d="M1530 453h14v14h-14z"/><path fill="#690009" d="M1544 453h14v14h-14z"/><path fill="#660008" d="M1558 453h14v14h-14z"/><path fill="#630006" d="M1572 453h14v14h-14z"/><path fill="#600005" d="M1586 453h14v14h-14z"/><path fill="#5e0004" d="M1600 453h14v14h-14z"/><path fill="#5d0003" d="M1614 453h14v14h-14z"/><path fill="#5d0002" d="M1628 453h14v14h-14z"/><path fill="#0050a5" d="M1012 467h14v14h-14z"/><path fill="#004fa7" d="M1026 467h14v14h-14z"/><path fill="#004ea8" d="M1040 467h14v14h-14z"/><path fill="#004daa" d="M1054 467h14v14h-14z"/><path fill="#004bac" d="M1068 467h14v14h-14z"/><path fill="#004aad" d="M1082 467h14v14h-14z"/><path fill="#0047ad" d="M1096 467h14v14h-14z"/><path fill="#0045ad" d="M1110 467h14v14h-14z"/><path fill="#0042ad" d="M1124 467h14v14h-14z"/><path fill="#003fad" d="M1138 467h14v14h-14z"/><path fill="#003cab" d="M1152 467h14v14h-14z"/><path fill="#0038aa" d="M1166 467h14v14h-14z"/><path fill="#0034a8" d="M1180 467h14v14h-14z"/><path fill="#1231a6" d="M1194 467h14v14h-14z"/><path fill="#242da5" d="M1208 467h14v14h-14z"/><path fill="#3729a3" d="M1222 467h14v14h-14z"/><path fill="#4b25a2" d="M1236 467h14v14h-14z"/><path fill="#6020a0" d="M1250 467h14v14h-14z"/><path fill="#761b9f" d="M1264 467h14v14h-14z"/><path fill="#8d179d" d="M1278 467h14v14h-14z"/><path fill="#9a1090" d="M1292 467h14v14h-14z"/><path fill="#960a79" d="M1306 467h14v14h-14z"/><path fill="#920566" d="M1320 467h14v14h-14z"/><path fill="#8e0157" d="M1334 467h14v14h-14z"/><path fill="#8c004b" d="M1348 467h14v14h-14z"/><path fill="#8a0042" d="M1362 467h14v14h-14z"/><path fill="#8a003a" d="M1376 467h14v14h-14z"/><path fill="#890034" d="M1390 467h14v14h-14z"/><path fill="#89002e" d="M1404 467h14v14h-14z"/><path fill="#880029" d="M1418 467h14v14h-14z"/><path fill="#850024" d="M1432 467h14v14h-14z"/><path fill="#80001f" d="M1446 467h14v14h-14z"/><path fill="#79001a" d="M1460 467h14v14h-14z"/><path fill="#730016" d="M1474 467h14v14h-14z"/><path fill="#6f0013" d="M1488 467h14v14h-14z"/><path fill="#6d0011" d="M1502 467h14v14h-14z"/><path fill="#6c000e" d="M1516 467h14v14h-14z"/><path fill="#6b000d" d="M1530 467h14v14h-14z"/><path fill="#6a000b" d="M1544 467h14v14h-14z"/><path fill="#680009" d="M1558 467h14v14h-14z"/><path fill="#650008" d="M1572 467h14v14h-14z"/><path fill="#630006" d="M1586 467h14v14h-14z"/><path fill="#610005" d="M1600 467h14v14h-14z"/><path fill="#610004" d="M1614 467h14v14h-14z"/><path fill="#600003" d="M1628 467h14v14h-14z"/><path fill="#0047a6" d="M1012 481h14v14h-14z"/><path fill="#0046a8" d="M1026 481h14v14h-14z"/><path fill="#0044a9" d="M1040 481h14v14h-14z"/><path fill="#0042ab" d="M1054 481h14v14h-14z"/><path fill="#0041ac" d="M1068 481h14v14h-14z"/><path fill="#003ead" d="M1082 481h14v14h-14z"/><path fill="#003cad" d="M1096 481h14v14h-14z"/><path fill="#0039ad" d="M1110 481h14v14h-14z"/><path fill="#0037ad" d="M1124 481h14v14h-14z"/><path fill="#0033ad" d="M1138 481h14v14h-14z"/><path fill="#0030ac" d="M1152 481h14v14h-14z"/><path fill="#002caa" d="M1166 481h14v14h-14z"/><path fill="#0529a9" d="M1180 481h14v14h-14z"/><path fill="#1725a7" d="M1194 481h14v14h-14z"/><path fill="#2821a5" d="M1208 481h14v14h-14z"/><path fill="#3b1ca4" d="M1222 481h14v14h-14z"/><path fill="#4e18a3" d="M1236 481h14v14h-14z"/><path fill="#6314a1" d="M1250 481h14v14h-14z"/><path fill="#780fa0" d="M1264 481h14v14h-14z"/><path fill="#8e0a9f" d="M1278 481h14v14h-14z"/><path fill="#9c0594" d="M1292 481h14v14h-14z"/><path fill="#98007d" d="M1306 481h14v14h-14z"/><path fill="#940069" d="M1320 481h14v14h-14z"/><path fill="#8f005a" d="M1334 481h14v14h-14z"/><path fill="#8c004d" d="M1348 481h14v14h-14z"/><path fill="#8a0044" d="M1362 481h14v14h-14z"/><path fill="#8a003d" d="M1376 481h14v14h-14z"/><path fill="#8a0036" d="M1390 481h14v14h-14z"/><path fill="#8a0031" d="M1404 481h14v14h-14z"/><path fill="#89002b" d="M1418 481h14v14h-14z"/><path fill="#870027" d="M1432 481h14v14h-14z"/><path fill="#830022" d="M1446 481h14v14h-14z"/><path fill="#7e001d" d="M1460 481h14v14h-14z"/><path fill="#780019" d="M1474 481h14v14h-14z"/><path fill="#730015" d="M1488 481h14v14h-14z"/><path fill="#700013" d="M1502 481h14v14h-14z"/><path fill="#6e0010" d="M1516 481h14v14h-14z"/><path fill="#6d000e" d="M1530 481h14v14h-14z"/><path fill="#6c000d" d="M1544 481h14v14h-14z"/><path fill="#6a000b" d="M1558 481h14v14h-14z"/><path fill="#680009" d="M1572 481h14v14h-14z"/><path fill="#660008" d="M1586 481h14v14h-14z"/><path fill="#650007" d="M1600 481h14v14h-14z"/><path fill="#640006" d="M1614 481h14v14h-14z"/><path fill="#640005" d="M1628 481h14v14h-14z"/><path fill="#003ea7" d="M1012 495h14v14h-14z"/><path fill="#003ca8" d="M1026 495h14v14h-14z"/><path fill="#003aa9" d="M1040 495h14v14h-14z"/><path fill="#0038ab" d="M1054 495h14v14h-14z"/><path fill="#0036ac" d="M1068 495h14v14h-14z"/><path fill="#0034ac" d="M1082 495h14v14h-14z"/><path fill="#0031ad" d="M1096 495h14v14h-14z"/><path fill="#002fad" d="M1110 495h14v14h-14z"/><path fill="#002cad" d="M1124 495h14v14h-14z"/><path fill="#0028ad" d="M1138 495h14v14h-14z"/><path fill="#0025ac" d="M1152 495h14v14h-14z"/><path fill="#0021ab" d="M1166 495h14v14h-14z"/><path fill="#0b1ea9" d="M1180 495h14v14h-14z"/><path fill="#1b1aa8" d="M1194 495h14v14h-14z"/><path fill="#2d15a6" d="M1208 495h14v14h-14z"/><path fill="#3e11a4" d="M1222 495h14v14h-14z"/><path fill="#510da3" d="M1236 495h14v14h-14z"/><path fill="#6508a2" d="M1250 495h14v14h-14z"/><path fill="#7a04a2" d="M1264 495h14v14h-14z"/><path fill="#9000a1" d="M1278 495h14v14h-14z"/><path fill="#9f0098" d="M1292 495h14v14h-14z"/><path fill="#9c0081" d="M1306 495h14v14h-14z"/><path fill="#96006e" d="M1320 495h14v14h-14z"/><path fill="#90005d" d="M1334 495h14v14h-14z"/><path fill="#8c0050" d="M1348 495h14v14h-14z"/><path fill="#8a0047" d="M1362 495h14v14h-14z"/><path fill="#8a003f" d="M1376 495h14v14h-14z"/><path fill="#8a0039" d="M1390 495h14v14h-14z"/><path fill="#8a0033" d="M1404 495h14v14h-14z"/><path fill="#89002e" d="M1418 495h14v14h-14z"/><path fill="#880029" d="M1432 495h14v14h-14z"/><path fill="#860024" d="M1446 495h14v14h-14z"/><path fill="#810020" d="M1460 495h14v14h-14z"/><path fill="#7c001c" d="M1474 495h14v14h-14z"/><path fill="#780018" d="M1488 495h14v14h-14z"/><path fill="#740015" d="M1502 495h14v14h-14z"/><path fill="#710013" d="M1516 495h14v14h-14z"/><path fill="#6f0010" d="M1530 495h14v14h-14z"/><path fill="#6e000e" d="M1544 495h14v14h-14z"/><path fill="#6c000d" d="M1558 495h14v14h-14z"/><path fill="#6b000b" d="M1572 495h14v14h-14z"/><path fill="#69000a" d="M1586 495h14v14h-14z"/><path fill="#680008" d="M1600 495h14v14h-14z"/><path fill="#670007" d="M1614 495h14v14h-14z"/><path fill="#670006" d="M1628 495h14v14h-14z"/><path fill="#0035a7" d="M1012 509h14v14h-14z"/><path fill="#0033a8" d="M1026 509h14v14h-14z"/><path fill="#0031a9" d="M1040 509h14v14h-14z"/><path fill="#002faa" d="M1054 509h14v14h-14z"/><path fill="#002dab" d="M1068 509h14v14h-14z"/><path fill="#002aac" d="M1082 509h14v14h-14z"/><path fill="#0027ac" d="M1096 509h14v14h-14z"/><path fill="#0025ad" d="M1110 509h14v14h-14z"/><path fill="#0021ad" d="M1124 509h14v14h-14z"/><path fill="#001eac" d="M1138 509h14v14h-14z"/><path fill="#001bac" d="M1152 509h14v14h-14z"/><path fill="#0017ac" d="M1166 509h14v14h-14z"/><path fill="#1013ab" d="M1180 509h14v14h-14z"/><path fill="#200fa9" d="M1194 509h14v14h-14z"/><path fill="#300ba7" d="M1208 509h14v14h-14z"/><path fill="#4207a5" d="M1222 509h14v14h-14z"/><path fill="#5402a4" d="M1236 509h14v14h-14z"/><path fill="#6700a3" d="M1250 509h14v14h-14z"/><path fill="#7b00a3" d="M1264 509h14v14h-14z"/><path fill="#9100a2" d="M1278 509h14v14h-14z"/><path fill="#a1009c" d="M1292 509h14v14h-14z"/><path fill="#9f0086" d="M1306 509h14v14h-14z"/><path fill="#9a0072" d="M1320 509h14v14h-14z"/><path fill="#930061" d="M1334 509h14v14h-14z"/><path fill="#8e0053" d="M1348 509h14v14h-14z"/><path fill="#8b0049" d="M1362 509h14v14h-14z"/><path fill="#8a0041" d="M1376 509h14v14h-14z"/><path fill="#8a003b" d="M1390 509h14v14h-14z"/><path fill="#8a0035" d="M1404 509h14v14h-14z"/><path fill="#890030" d="M1418 509h14v14h-14z"/><path fill="#88002b" d="M1432 509h14v14h-14z"/><path fill="#860027" d="M1446 509h14v14h-14z"/><path fill="#830022" d="M1460 509h14v14h-14z"/><path fill="#7f001e" d="M1474 509h14v14h-14z"/><path fill="#7b001b" d="M1488 509h14v14h-14z"/><path fill="#770017" d="M1502 509h14v14h-14z"/><path fill="#750015" d="M1516 509h14v14h-14z"/><path fill="#720012" d="M1530 509h14v14h-14z"/><path fill="#700010" d="M1544 509h14v14h-14z"/><path fill="#6f000e" d="M1558 509h14v14h-14z"/><path fill="#6d000d" d="M1572 509h14v14h-14z"/><path fill="#6c000b" d="M1586 509h14v14h-14z"/><path fill="#6b000a" d="M1600 509h14v14h-14z"/><path fill="#6a0009" d="M1614 509h14v14h-14z"/><path fill="#6a0007" d="M1628 509h14v14h-14z"/><path fill="#002da7" d="M1012 523h14v14h-14z"/><path fill="#002ba8" d="M1026 523h14v14h-14z"/><path fill="#0029a9" d="M1040 523h14v14h-14z"/><path fill="#0026aa" d="M1054 523h14v14h-14z"/><path fill="#0024ab" d="M1068 523h14v14h-14z"/><path fill="#0021ac" d="M1082 523h14v14h-14z"/><path fill="#001eac" d="M1096 523h14v14h-14z"/><path fill="#001bad" d="M1110 523h14v14h-14z"/><path fill="#0018ad" d="M1124 523h14v14h-14z"/><path fill="#0015ad" d="M1138 523h14v14h-14z"/><path fill="#0011ae" d="M1152 523h14v14h-14z"/><path fill="#050eae" d="M1166 523h14v14h-14z"/><path fill="#140aad" d="M1180 523h14v14h-14z"/><path fill="#2406ab" d="M1194 523h14v14h-14z"/><path fill="#3401a8" d="M1208 523h14v14h-14z"/><path fill="#4500a6" d="M1222 523h14v14h-14z"/><path fill="#5600a4" d="M1236 523h14v14h-14z"/><path fill="#6800a3" d="M1250 523h14v14h-14z"/><path fill="#7c00a3" d="M1264 523h14v14h-14z"/><path fill="#9100a3" d="M1278 523h14v14h-14z"/><path fill="#a3009f" d="M1292 523h14v14h-14z"/><path fill="#a1008a" d="M1306 523h14v14h-14z"/><path fill="#9d0077" d="M1320 523h14v14h-14z"/><path fill="#970066" d="M1334 523h14v14h-14z"/><path fill="#910057" d="M1348 523h14v14h-14z"/><path fill="#8d004c" d="M1362 523h14v14h-14z"/><path fill="#8b0044" d="M1376 523h14v14h-14z"/><path fill="#8a003d" d="M1390 523h14v14h-14z"/><path fill="#8a0038" d="M1404 523h14v14h-14z"/><path fill="#890032" d="M1418 523h14v14h-14z"/><path fill="#89002e" d="M1432 523h14v14h-14z"/><path fill="#870029" d="M1446 523h14v14h-14z"/><path fill="#840025" d="M1460 523h14v14h-14z"/><path fill="#810021" d="M1474 523h14v14h-14z"/><path fill="#7e001d" d="M1488 523h14v14h-14z"/><path fill="#7a001a" d="M1502 523h14v14h-14z"/><path fill="#780017" d="M1516 523h14v14h-14z"/><path fill="#750014" d="M1530 523h14v14h-14z"/><path fill="#730012" d="M1544 523h14v14h-14z"/><path fill="#720010" d="M1558 523h14v14h-14z"/><path fill="#70000e" d="M1572 523h14v14h-14z"/><path fill="#6f000d" d="M1586 523h14v14h-14z"/><path fill="#6e000b" d="M1600 523h14v14h-14z"/><path fill="#6d000a" d="M1614 523h14v14h-14z"/><path fill="#6d0009" d="M1628 523h14v14h-14z"/><path fill="#0025a7" d="M1012 537h14v14h-14z"/><path fill="#0023a8" d="M1026 537h14v14h-14z"/><path fill="#0020a9" d="M1040 537h14v14h-14z"/><path fill="#001eaa" d="M1054 537h14v14h-14z"/><path fill="#001bab" d="M1068 537h14v14h-14z"/><path fill="#0019ac" d="M1082 537h14v14h-14z"/><path fill="#0016ad" d="M1096 537h14v14h-14z"/><path fill="#0013ae" d="M1110 537h14v14h-14z"/><path fill="#000faf" d="M1124 537h14v14h-14z"/><path fill="#000cb0" d="M1138 537h14v14h-14z"/><path fill="#0008b0" d="M1152 537h14v14h-14z"/><path fill="#0a05b0" d="M1166 537h14v14h-14z"/><path fill="#1901b0" d="M1180 537h14v14h-14z"/><path fill="#2900ae" d="M1194 537h14v14h-14z"/><path fill="#3800ab" d="M1208 537h14v14h-14z"/><path fill="#4800a7" d="M1222 537h14v14h-14z"/><path fill="#5800a4" d="M1236 537h14v14h-14z"/><path fill="#6900a3" d="M1250 537h14v14h-14z"/><path fill="#7c00a3" d="M1264 537h14v14h-14z"/><path fill="#9000a3" d="M1278 537h14v14h-14z"/><path fill="#a300a1" d="M1292 537h14v14h-14z"/><path fill="#a2008d" d="M1306 537h14v14h-14z"/><path fill="#9f007b" d="M1320 537h14v14h-14z"/><path fill="#9a006a" d="M1334 537h14v14h-14z"/><path fill="#94005c" d="M1348 537h14v14h-14z"/><path fill="#900050" d="M1362 537h14v14h-14z"/><path fill="#8d0047" d="M1376 537h14v14h-14z"/><path fill="#8b0040" d="M1390 537h14v14h-14z"/><path fill="#8b003a" d="M1404 537h14v14h-14z"/><path fill="#8a0035" d="M1418 537h14v14h-14z"/><path fill="#890030" d="M1432 537h14v14h-14z"/><path fill="#87002b" d="M1446 537h14v14h-14z"/><path fill="#850027" d="M1460 537h14v14h-14z"/><path fill="#820023" d="M1474 537h14v14h-14z"/><path fill="#80001f" d="M1488 537h14v14h-14z"/><path fill="#7d001c" d="M1502 537h14v14h-14z"/><path fill="#7a0019" d="M1516 537h14v14h-14z"/><path fill="#780016" d="M1530 537h14v14h-14z"/><path fill="#760014" d="M1544 537h14v14h-14z"/><path fill="#740012" d="M1558 537h14v14h-14z"/><path fill="#730010" d="M1572 537h14v14h-14z"/><path fill="#72000e" d="M1586 537h14v14h-14z"/><path fill="#71000d" d="M1600 537h14v14h-14z"/><path fill="#70000c" d="M1614 537h14v14h-14z"/><path fill="#6f000a" d="M1628 537h14v14h-14z"/><path fill="#001da7" d="M1012 551h14v14h-14z"/><path fill="#001ba8" d="M1026 551h14v14h-14z"/><path fill="#0019a9" d="M1040 551h14v14h-14z"/><path fill="#0016aa" d="M1054 551h14v14h-14z"/><path fill="#0013ab" d="M1068 551h14v14h-14z"/><path fill="#0011ac" d="M1082 551h14v14h-14z"/><path fill="#000eae" d="M1096 551h14v14h-14z"/><path fill="#000aaf" d="M1110 551h14v14h-14z"/><path fill="#0007b0" d="M1124 551h14v14h-14z"/><path fill="#0004b1" d="M1138 551h14v14h-14z"/><path fill="#0000b2" d="M1152 551h14v14h-14z"/><path fill="#0f00b2" d="M1166 551h14v14h-14z"/><path fill="#1e00b2" d="M1180 551h14v14h-14z"/><path fill="#2d00b1" d="M1194 551h14v14h-14z"/><path fill="#3c00ad" d="M1208 551h14v14h-14z"/><path fill="#4b00a8" d="M1222 551h14v14h-14z"/><path fill="#5a00a5" d="M1236 551h14v14h-14z"/><path fill="#6b00a3" d="M1250 551h14v14h-14z"/><path fill="#7d00a3" d="M1264 551h14v14h-14z"/><path fill="#9000a3" d="M1278 551h14v14h-14z"/><path fill="#a300a2" d="M1292 551h14v14h-14z"/><path fill="#a2008e" d="M1306 551h14v14h-14z"/><path fill="#a0007d" d="M1320 551h14v14h-14z"/><path fill="#9c006e" d="M1334 551h14v14h-14z"/><path fill="#970060" d="M1348 551h14v14h-14z"/><path fill="#930054" d="M1362 551h14v14h-14z"/><path fill="#8f004b" d="M1376 551h14v14h-14z"/><path fill="#8d0043" d="M1390 551h14v14h-14z"/><path fill="#8c003d" d="M1404 551h14v14h-14z"/><path fill="#8b0037" d="M1418 551h14v14h-14z"/><path fill="#890032" d="M1432 551h14v14h-14z"/><path fill="#88002d" d="M1446 551h14v14h-14z"/><path fill="#860029" d="M1460 551h14v14h-14z"/><path fill="#840025" d="M1474 551h14v14h-14z"/><path fill="#810021" d="M1488 551h14v14h-14z"/><path fill="#7f001e" d="M1502 551h14v14h-14z"/><path fill="#7c001b" d="M1516 551h14v14h-14z"/><path fill="#7a0018" d="M1530 551h14v14h-14z"/><path fill="#780016" d="M1544 551h14v14h-14z"/><path fill="#770014" d="M1558 551h14v14h-14z"/><path fill="#750012" d="M1572 551h14v14h-14z"/><path fill="#740010" d="M1586 551h14v14h-14z"/><path fill="#73000f" d="M1600 551h14v14h-14z"/><path fill="#72000d" d="M1614 551h14v14h-14z"/><path fill="#72000c" d="M1628 551h14v14h-14z"/><path fill="#0016a7" d="M1012 565h14v14h-14z"/><path fill="#0014a8" d="M1026 565h14v14h-14z"/><path fill="#0011a9" d="M1040 565h14v14h-14z"/><path fill="#000fab" d="M1054 565h14v14h-14z"/><path fill="#000cac" d="M1068 565h14v14h-14z"/><path fill="#0009ad" d="M1082 565h14v14h-14z"/><path fill="#0006ae" d="M1096 565h14v14h-14z"/><path fill="#0003b0" d="M1110 565h14v14h-14z"/><path fill="#0000b1" d="M1124 565h14v14h-14z"/><path fill="#0000b2" d="M1138 565h14v14h-14z"/><path fill="#0500b2" d="M1152 565h14v14h-14z"/><path fill="#1300b2" d="M1166 565h14v14h-14z"/><path fill="#2100b2" d="M1180 565h14v14h-14z"/><path fill="#3100b2" d="M1194 565h14v14h-14z"/><path fill="#4000af" d="M1208 565h14v14h-14z"/><path fill="#4e00ab" d="M1222 565h14v14h-14z"/><path fill="#5c00a6" d="M1236 565h14v14h-14z"/><path fill="#6c00a4" d="M1250 565h14v14h-14z"/><path fill="#7d00a3" d="M1264 565h14v14h-14z"/><path fill="#8f00a3" d="M1278 565h14v14h-14z"/><path fill="#a300a3" d="M1292 565h14v14h-14z"/><path fill="#a20090" d="M1306 565h14v14h-14z"/><path fill="#a0007f" d="M1320 565h14v14h-14z"/><path fill="#9d0070" d="M1334 565h14v14h-14z"/><path fill="#990063" d="M1348 565h14v14h-14z"/><path fill="#950057" d="M1362 565h14v14h-14z"/><path fill="#92004e" d="M1376 565h14v14h-14z"/><path fill="#8f0046" d="M1390 565h14v14h-14z"/><path fill="#8d003f" d="M1404 565h14v14h-14z"/><path fill="#8c0039" d="M1418 565h14v14h-14z"/><path fill="#8a0034" d="M1432 565h14v14h-14z"/><path fill="#89002f" d="M1446 565h14v14h-14z"/><path fill="#87002b" d="M1460 565h14v14h-14z"/><path fill="#850027" d="M1474 565h14v14h-14z"/><path fill="#830023" d="M1488 565h14v14h-14z"/><path fill="#810020" d="M1502 565h14v14h-14z"/><path fill="#7e001d" d="M1516 565h14v14h-14z"/><path fill="#7c001a" d="M1530 565h14v14h-14z"/><path fill="#7b0018" d="M1544 565h14v14h-14z"/><path fill="#790016" d="M1558 565h14v14h-14z"/><path fill="#780014" d="M1572 565h14v14h-14z"/><path fill="#770012" d="M1586 565h14v14h-14z"/><path fill="#760010" d="M1600 565h14v14h-14z"/><path fill="#75000f" d="M1614 565h14v14h-14z"/><path fill="#74000d" d="M1628 565h14v14h-14z"/><path fill="#0010a7" d="M1012 579h14v14h-14z"/><path fill="#000da8" d="M1026 579h14v14h-14z"/><path fill="#000aaa" d="M1040 579h14v14h-14z"/><path fill="#0008ab" d="M1054 579h14v14h-14z"/><path fill="#0005ac" d="M1068 579h14v14h-14z"/><path fill="#0002ad" d="M1082 579h14v14h-14z"/><path fill="#0000af" d="M1096 579h14v14h-14z"/><path fill="#0000b0" d="M1110 579h14v14h-14z"/><path fill="#0000b1" d="M1124 579h14v14h-14z"/><path fill="#0000b2" d="M1138 579h14v14h-14z"/><path fill="#0900b2" d="M1152 579h14v14h-14z"/><path fill="#1700b2" d="M1166 579h14v14h-14z"/><path fill="#2500b2" d="M1180 579h14v14h-14z"/><path fill="#3400b2" d="M1194 579h14v14h-14z"/><path fill="#4300b0" d="M1208 579h14v14h-14z"/><path fill="#5100ac" d="M1222 579h14v14h-14z"/><path fill="#5f00a8" d="M1236 579h14v14h-14z"/><path fill="#6e00a5" d="M1250 579h14v14h-14z"/><path fill="#7e00a4" d="M1264 579h14v14h-14z"/><path fill="#8f00a3" d="M1278 579h14v14h-14z"/><path fill="#a100a2" d="M1292 579h14v14h-14z"/><path fill="#a10091" d="M1306 579h14v14h-14z"/><path fill="#9f0080" d="M1320 579h14v14h-14z"/><path fill="#9d0072" d="M1334 579h14v14h-14z"/><path fill="#9a0065" d="M1348 579h14v14h-14z"/><path fill="#96005a" d="M1362 579h14v14h-14z"/><path fill="#930051" d="M1376 579h14v14h-14z"/><path fill="#910049" d="M1390 579h14v14h-14z"/><path fill="#8f0042" d="M1404 579h14v14h-14z"/><path fill="#8d003c" d="M1418 579h14v14h-14z"/><path fill="#8b0036" d="M1432 579h14v14h-14z"/><path fill="#8a0032" d="M1446 579h14v14h-14z"/><path fill="#88002d" d="M1460 579h14v14h-14z"/><path fill="#860029" d="M1474 579h14v14h-14z"/><path fill="#840025" d="M1488 579h14v14h-14z"/><path fill="#820022" d="M1502 579h14v14h-14z"/><path fill="#80001f" d="M1516 579h14v14h-14z"/><path fill="#7e001c" d="M1530 579h14v14h-14z"/><path fill="#7d001a" d="M1544 579h14v14h-14z"/><path fill="#7b0018" d="M1558 579h14v14h-14z"/><path fill="#7a0015" d="M1572 579h14v14h-14z"/><path fill="#790014" d="M1586 579h14v14h-14z"/><path fill="#780012" d="M1600 579h14v14h-14z"/><path fill="#770010" d="M1614 579h14v14h-14z"/><path fill="#76000f" d="M1628 579h14v14h-14z"/><path fill="#000ca7" d="M1012 593h14v14h-14z"/><path fill="#0009a8" d="M1026 593h14v14h-14z"/><path fill="#0007aa" d="M1040 593h14v14h-14z"/><path fill="#0004ab" d="M1054 593h14v14h-14z"/><path fill="#0001ac" d="M1068 593h14v14h-14z"/><path fill="#0000ad" d="M1082 593h14v14h-14z"/><path fill="#0000af" d="M1096 593h14v14h-14z"/><path fill="#0000b0" d="M1110 593h14v14h-14z"/><path fill="#0000b1" d="M1124 593h14v14h-14z"/><path fill="#0000b2" d="M1138 593h14v14h-14z"/><path fill="#0b00b2" d="M1152 593h14v14h-14z"/><path fill="#1900b2" d="M1166 593h14v14h-14z"/><path fill="#2700b2" d="M1180 593h14v14h-14z"/><path fill="#3500b1" d="M1194 593h14v14h-14z"/><path fill="#4400b0" d="M1208 593h14v14h-14z"/><path fill="#5200ac" d="M1222 593h14v14h-14z"/><path fill="#6000a9" d="M1236 593h14v14h-14z"/><path fill="#6f00a6" d="M1250 593h14v14h-14z"/><path fill="#7e00a4" d="M1264 593h14v14h-14z"/><path fill="#8f00a3" d="M1278 593h14v14h-14z"/><path fill="#a000a2" d="M1292 593h14v14h-14z"/><path fill="#a10091" d="M1306 593h14v14h-14z"/><path fill="#9f0081" d="M1320 593h14v14h-14z"/><path fill="#9d0073" d="M1334 593h14v14h-14z"/><path fill="#9a0067" d="M1348 593h14v14h-14z"/><path fill="#97005c" d="M1362 593h14v14h-14z"/><path fill="#940052" d="M1376 593h14v14h-14z"/><path fill="#92004a" d="M1390 593h14v14h-14z"/><path fill="#900043" d="M1404 593h14v14h-14z"/><path fill="#8e003d" d="M1418 593h14v14h-14z"/><path fill="#8c0038" d="M1432 593h14v14h-14z"/><path fill="#8a0033" d="M1446 593h14v14h-14z"/><path fill="#88002e" d="M1460 593h14v14h-14z"/><path fill="#87002a" d="M1474 593h14v14h-14z"/><path fill="#850027" d="M1488 593h14v14h-14z"/><path fill="#830023" d="M1502 593h14v14h-14z"/><path fill="#810020" d="M1516 593h14v14h-14z"/><path fill="#7f001d" d="M1530 593h14v14h-14z"/><path fill="#7e001b" d="M1544 593h14v14h-14z"/><path fill="#7c0019" d="M1558 593h14v14h-14z"/><path fill="#7b0016" d="M1572 593h14v14h-14z"/><path fill="#7a0015" d="M1586 593h14v14h-14z"/><path fill="#790013" d="M1600 593h14v14h-14z"/><path fill="#780011" d="M1614 593h14v14h-14z"/><path fill="#770010" d="M1628 593h14v14h-14z"/><path fill="#000ca7" d="M1012 607h14v14h-14z"/><path fill="#0009a8" d="M1026 607h14v14h-14z"/><path fill="#0007aa" d="M1040 607h14v14h-14z"/><path fill="#0004ab" d="M1054 607h14v14h-14z"/><path fill="#0001ac" d="M1068 607h14v14h-14z"/><path fill="#0000ad" d="M1082 607h14v14h-14z"/><path fill="#0000af" d="M1096 607h14v14h-14z"/><path fill="#0000b0" d="M1110 607h14v14h-14z"/><path fill="#0000b1" d="M1124 607h14v14h-14z"/><path fill="#0000b2" d="M1138 607h14v14h-14z"/><path fill="#0b00b2" d="M1152 607h14v14h-14z"/><path fill="#1900b2" d="M1166 607h14v14h-14z"/><path fill="#2700b2" d="M1180 607h14v14h-14z"/><path fill="#3500b1" d="M1194 607h14v14h-14z"/><path fill="#4400b0" d="M1208 607h14v14h-14z"/><path fill="#5200ac" d="M1222 607h14v14h-14z"/><path fill="#6000a9" d="M1236 607h14v14h-14z"/><path fill="#6f00a6" d="M1250 607h14v14h-14z"/><path fill="#7e00a4" d="M1264 607h14v14h-14z"/><path fill="#8f00a3" d="M1278 607h14v14h-14z"/><path fill="#a000a2" d="M1292 607h14v14h-14z"/><path fill="#a10091" d="M1306 607h14v14h-14z"/><path fill="#9f0081" d="M1320 607h14v14h-14z"/><path fill="#9d0073" d="M1334 607h14v14h-14z"/><path fill="#9a0067" d="M1348 607h14v14h-14z"/><path fill="#97005c" d="M1362 607h14v14h-14z"/><path fill="#940052" d="M1376 607h14v14h-14z"/><path fill="#92004a" d="M1390 607h14v14h-14z"/><path fill="#900043" d="M1404 607h14v14h-14z"/><path fill="#8e003d" d="M1418 607h14v14h-14z"/><path fill="#8c0038" d="M1432 607h14v14h-14z"/><path fill="#8a0033" d="M1446 607h14v14h-14z"/><path fill="#88002e" d="M1460 607h14v14h-14z"/><path fill="#87002a" d="M1474 607h14v14h-14z"/><path fill="#850027" d="M1488 607h14v14h-14z"/><path fill="#830023" d="M1502 607h14v14h-14z"/><path fill="#810020" d="M1516 607h14v14h-14z"/><path fill="#7f001d" d="M1530 607h14v14h-14z"/><path fill="#7e001b" d="M1544 607h14v14h-14z"/><path fill="#7c0019" d="M1558 607h14v14h-14z"/><path fill="#7b0016" d="M1572 607h14v14h-14z"/><path fill="#7a0015" d="M1586 607h14v14h-14z"/><path fill="#790013" d="M1600 607h14v14h-14z"/><path fill="#780011" d="M1614 607h14v14h-14z"/><path fill="#770010" d="M1628 607h14v14h-14z"/></g></g>
<g clip-path="url(#cTri)"><g filter="url(#blr2)"><path fill="#00ff20" d="M1140 180h10v10h-10z"/><path fill="#00ff1d" d="M1150 180h10v10h-10z"/><path fill="#00ff1a" d="M1160 180h10v10h-10z"/><path fill="#00ff18" d="M1170 180h10v10h-10z"/><path fill="#00ff15" d="M1180 180h10v10h-10z"/><path fill="#00ff12" d="M1190 180h10v10h-10z"/><path fill="#00ff0f" d="M1200 180h10v10h-10z"/><path fill="#00ff0c" d="M1210 180h10v10h-10z"/><path fill="#00ff08" d="M1220 180h10v10h-10z"/><path fill="#00ff05" d="M1230 180h10v10h-10z"/><path fill="#00ff02" d="M1240 180h10v10h-10z"/><path fill="#00ff00" d="M1250 180h10v10h-10z"/><path fill="#00ff00" d="M1260 180h10v10h-10z"/><path fill="#00ff00" d="M1270 180h10v10h-10z"/><path fill="#01ff00" d="M1280 180h10v10h-10z"/><path fill="#0fff00" d="M1290 180h10v10h-10z"/><path fill="#1dff00" d="M1300 180h10v10h-10z"/><path fill="#2cff00" d="M1310 180h10v10h-10z"/><path fill="#3bff00" d="M1320 180h10v10h-10z"/><path fill="#4aff00" d="M1330 180h10v10h-10z"/><path fill="#5aff00" d="M1340 180h10v10h-10z"/><path fill="#6bff00" d="M1350 180h10v10h-10z"/><path fill="#7cff00" d="M1360 180h10v10h-10z"/><path fill="#8eff00" d="M1370 180h10v10h-10z"/><path fill="#a0ff00" d="M1380 180h10v10h-10z"/><path fill="#b3ff00" d="M1390 180h10v10h-10z"/><path fill="#c7ff00" d="M1400 180h10v10h-10z"/><path fill="#dbff00" d="M1410 180h10v10h-10z"/><path fill="#f0ff00" d="M1420 180h10v10h-10z"/><path fill="#fff800" d="M1430 180h10v10h-10z"/><path fill="#fee400" d="M1440 180h10v10h-10z"/><path fill="#fcd100" d="M1450 180h10v10h-10z"/><path fill="#f9bf00" d="M1460 180h10v10h-10z"/><path fill="#f3ad00" d="M1470 180h10v10h-10z"/><path fill="#ec9d00" d="M1480 180h10v10h-10z"/><path fill="#e38d00" d="M1490 180h10v10h-10z"/><path fill="#d97e00" d="M1500 180h10v10h-10z"/><path fill="#cd6f00" d="M1510 180h10v10h-10z"/><path fill="#bf6100" d="M1520 180h10v10h-10z"/><path fill="#b05400" d="M1530 180h10v10h-10z"/><path fill="#9f4700" d="M1540 180h10v10h-10z"/><path fill="#994100" d="M1550 180h10v10h-10z"/><path fill="#993d00" d="M1560 180h10v10h-10z"/><path fill="#00ff25" d="M1140 190h10v10h-10z"/><path fill="#00ff23" d="M1150 190h10v10h-10z"/><path fill="#00ff20" d="M1160 190h10v10h-10z"/><path fill="#00ff1d" d="M1170 190h10v10h-10z"/><path fill="#00ff1a" d="M1180 190h10v10h-10z"/><path fill="#00ff17" d="M1190 190h10v10h-10z"/><path fill="#00ff14" d="M1200 190h10v10h-10z"/><path fill="#00ff11" d="M1210 190h10v10h-10z"/><path fill="#00ff0e" d="M1220 190h10v10h-10z"/><path fill="#00ff0b" d="M1230 190h10v10h-10z"/><path fill="#00ff07" d="M1240 190h10v10h-10z"/><path fill="#00ff04" d="M1250 190h10v10h-10z"/><path fill="#00ff00" d="M1260 190h10v10h-10z"/><path fill="#00ff00" d="M1270 190h10v10h-10z"/><path fill="#06ff00" d="M1280 190h10v10h-10z"/><path fill="#14ff00" d="M1290 190h10v10h-10z"/><path fill="#23ff00" d="M1300 190h10v10h-10z"/><path fill="#32ff00" d="M1310 190h10v10h-10z"/><path fill="#42ff00" d="M1320 190h10v10h-10z"/><path fill="#52ff00" d="M1330 190h10v10h-10z"/><path fill="#63ff00" d="M1340 190h10v10h-10z"/><path fill="#74ff00" d="M1350 190h10v10h-10z"/><path fill="#86ff00" d="M1360 190h10v10h-10z"/><path fill="#99ff00" d="M1370 190h10v10h-10z"/><path fill="#acff00" d="M1380 190h10v10h-10z"/><path fill="#c0ff00" d="M1390 190h10v10h-10z"/><path fill="#d4ff00" d="M1400 190h10v10h-10z"/><path fill="#eaff00" d="M1410 190h10v10h-10z"/><path fill="#fffe00" d="M1420 190h10v10h-10z"/><path fill="#ffe900" d="M1430 190h10v10h-10z"/><path fill="#fed600" d="M1440 190h10v10h-10z"/><path fill="#fcc400" d="M1450 190h10v10h-10z"/><path fill="#f9b300" d="M1460 190h10v10h-10z"/><path fill="#f3a300" d="M1470 190h10v10h-10z"/><path fill="#ec9300" d="M1480 190h10v10h-10z"/><path fill="#e38400" d="M1490 190h10v10h-10z"/><path fill="#d97600" d="M1500 190h10v10h-10z"/><path fill="#cd6800" d="M1510 190h10v10h-10z"/><path fill="#bf5b00" d="M1520 190h10v10h-10z"/><path fill="#b04f00" d="M1530 190h10v10h-10z"/><path fill="#9f4300" d="M1540 190h10v10h-10z"/><path fill="#993d00" d="M1550 190h10v10h-10z"/><path fill="#993900" d="M1560 190h10v10h-10z"/><path fill="#00ff2b" d="M1140 200h10v10h-10z"/><path fill="#00ff29" d="M1150 200h10v10h-10z"/><path fill="#00ff26" d="M1160 200h10v10h-10z"/><path fill="#00ff23" d="M1170 200h10v10h-10z"/><path fill="#00ff20" d="M1180 200h10v10h-10z"/><path fill="#00ff1d" d="M1190 200h10v10h-10z"/><path fill="#00ff1a" d="M1200 200h10v10h-10z"/><path fill="#00ff17" d="M1210 200h10v10h-10z"/><path fill="#00ff14" d="M1220 200h10v10h-10z"/><path fill="#00ff10" d="M1230 200h10v10h-10z"/><path fill="#00ff0d" d="M1240 200h10v10h-10z"/><path fill="#00ff0a" d="M1250 200h10v10h-10z"/><path fill="#00ff06" d="M1260 200h10v10h-10z"/><path fill="#00ff02" d="M1270 200h10v10h-10z"/><path fill="#0bff00" d="M1280 200h10v10h-10z"/><path fill="#1aff00" d="M1290 200h10v10h-10z"/><path fill="#29ff00" d="M1300 200h10v10h-10z"/><path fill="#39ff00" d="M1310 200h10v10h-10z"/><path fill="#49ff00" d="M1320 200h10v10h-10z"/><path fill="#5aff00" d="M1330 200h10v10h-10z"/><path fill="#6cff00" d="M1340 200h10v10h-10z"/><path fill="#7eff00" d="M1350 200h10v10h-10z"/><path fill="#91ff00" d="M1360 200h10v10h-10z"/><path fill="#a4ff00" d="M1370 200h10v10h-10z"/><path fill="#b9ff00" d="M1380 200h10v10h-10z"/><path fill="#cdff00" d="M1390 200h10v10h-10z"/><path fill="#e3ff00" d="M1400 200h10v10h-10z"/><path fill="#faff00" d="M1410 200h10v10h-10z"/><path fill="#ffee00" d="M1420 200h10v10h-10z"/><path fill="#ffdb00" d="M1430 200h10v10h-10z"/><path fill="#fec900" d="M1440 200h10v10h-10z"/><path fill="#fcb800" d="M1450 200h10v10h-10z"/><path fill="#f9a800" d="M1460 200h10v10h-10z"/><path fill="#f39900" d="M1470 200h10v10h-10z"/><path fill="#ec8a00" d="M1480 200h10v10h-10z"/><path fill="#e37c00" d="M1490 200h10v10h-10z"/><path fill="#d96f00" d="M1500 200h10v10h-10z"/><path fill="#cd6200" d="M1510 200h10v10h-10z"/><path fill="#bf5500" d="M1520 200h10v10h-10z"/><path fill="#b04a00" d="M1530 200h10v10h-10z"/><path fill="#9f3f00" d="M1540 200h10v10h-10z"/><path fill="#993900" d="M1550 200h10v10h-10z"/><path fill="#993500" d="M1560 200h10v10h-10z"/><path fill="#00ff32" d="M1140 210h10v10h-10z"/><path fill="#00ff2f" d="M1150 210h10v10h-10z"/><path fill="#00ff2c" d="M1160 210h10v10h-10z"/><path fill="#00ff29" d="M1170 210h10v10h-10z"/><path fill="#00ff27" d="M1180 210h10v10h-10z"/><path fill="#00ff24" d="M1190 210h10v10h-10z"/><path fill="#00ff20" d="M1200 210h10v10h-10z"/><path fill="#00ff1d" d="M1210 210h10v10h-10z"/><path fill="#00ff1a" d="M1220 210h10v10h-10z"/><path fill="#00ff17" d="M1230 210h10v10h-10z"/><path fill="#00ff13" d="M1240 210h10v10h-10z"/><path fill="#00ff10" d="M1250 210h10v10h-10z"/><path fill="#00ff0c" d="M1260 210h10v10h-10z"/><path fill="#01ff08" d="M1270 210h10v10h-10z"/><path fill="#10ff04" d="M1280 210h10v10h-10z"/><path fill="#20ff00" d="M1290 210h10v10h-10z"/><path fill="#30ff00" d="M1300 210h10v10h-10z"/><path fill="#40ff00" d="M1310 210h10v10h-10z"/><path fill="#52ff00" d="M1320 210h10v10h-10z"/><path fill="#63ff00" d="M1330 210h10v10h-10z"/><path fill="#76ff00" d="M1340 210h10v10h-10z"/><path fill="#89ff00" d="M1350 210h10v10h-10z"/><path fill="#9cff00" d="M1360 210h10v10h-10z"/><path fill="#b1ff00" d="M1370 210h10v10h-10z"/><path fill="#c6ff00" d="M1380 210h10v10h-10z"/><path fill="#dcff00" d="M1390 210h10v10h-10z"/><path fill="#f3ff00" d="M1400 210h10v10h-10z"/><path fill="#fff300" d="M1410 210h10v10h-10z"/><path fill="#ffdf00" d="M1420 210h10v10h-10z"/><path fill="#ffcd00" d="M1430 210h10v10h-10z"/><path fill="#febc00" d="M1440 210h10v10h-10z"/><path fill="#fcad00" d="M1450 210h10v10h-10z"/><path fill="#f99d00" d="M1460 210h10v10h-10z"/><path fill="#f38f00" d="M1470 210h10v10h-10z"/><path fill="#ec8100" d="M1480 210h10v10h-10z"/><path fill="#e37400" d="M1490 210h10v10h-10z"/><path fill="#d96700" d="M1500 210h10v10h-10z"/><path fill="#cd5b00" d="M1510 210h10v10h-10z"/><path fill="#bf5000" d="M1520 210h10v10h-10z"/><path fill="#b04500" d="M1530 210h10v10h-10z"/><path fill="#9f3a00" d="M1540 210h10v10h-10z"/><path fill="#993500" d="M1550 210h10v10h-10z"/><path fill="#993100" d="M1560 210h10v10h-10z"/><path fill="#00ff38" d="M1140 220h10v10h-10z"/><path fill="#00ff36" d="M1150 220h10v10h-10z"/><path fill="#00ff33" d="M1160 220h10v10h-10z"/><path fill="#00ff30" d="M1170 220h10v10h-10z"/><path fill="#00ff2d" d="M1180 220h10v10h-10z"/><path fill="#00ff2a" d="M1190 220h10v10h-10z"/><path fill="#00ff27" d="M1200 220h10v10h-10z"/><path fill="#00ff24" d="M1210 220h10v10h-10z"/><path fill="#00ff21" d="M1220 220h10v10h-10z"/><path fill="#00ff1d" d="M1230 220h10v10h-10z"/><path fill="#00ff1a" d="M1240 220h10v10h-10z"/><path fill="#00ff16" d="M1250 220h10v10h-10z"/><path fill="#00ff13" d="M1260 220h10v10h-10z"/><path fill="#06ff0f" d="M1270 220h10v10h-10z"/><path fill="#16ff0b" d="M1280 220h10v10h-10z"/><path fill="#26ff07" d="M1290 220h10v10h-10z"/><path fill="#37ff03" d="M1300 220h10v10h-10z"/><path fill="#48ff00" d="M1310 220h10v10h-10z"/><path fill="#5aff00" d="M1320 220h10v10h-10z"/><path fill="#6dff00" d="M1330 220h10v10h-10z"/><path fill="#80ff00" d="M1340 220h10v10h-10z"/><path fill="#94ff00" d="M1350 220h10v10h-10z"/><path fill="#a9ff00" d="M1360 220h10v10h-10z"/><path fill="#bfff00" d="M1370 220h10v10h-10z"/><path fill="#d5ff00" d="M1380 220h10v10h-10z"/><path fill="#ecff00" d="M1390 220h10v10h-10z"/><path fill="#fff900" d="M1400 220h10v10h-10z"/><path fill="#ffe300" d="M1410 220h10v10h-10z"/><path fill="#ffd000" d="M1420 220h10v10h-10z"/><path fill="#ffbf00" d="M1430 220h10v10h-10z"/><path fill="#feb000" d="M1440 220h10v10h-10z"/><path fill="#fca100" d="M1450 220h10v10h-10z"/><path fill="#f99300" d="M1460 220h10v10h-10z"/><path fill="#f38600" d="M1470 220h10v10h-10z"/><path fill="#ec7900" d="M1480 220h10v10h-10z"/><path fill="#e36c00" d="M1490 220h10v10h-10z"/><path fill="#d96000" d="M1500 220h10v10h-10z"/><path fill="#cd5500" d="M1510 220h10v10h-10z"/><path fill="#bf4a00" d="M1520 220h10v10h-10z"/><path fill="#b04000" d="M1530 220h10v10h-10z"/><path fill="#9f3600" d="M1540 220h10v10h-10z"/><path fill="#993100" d="M1550 220h10v10h-10z"/><path fill="#992e00" d="M1560 220h10v10h-10z"/><path fill="#00ff3f" d="M1140 230h10v10h-10z"/><path fill="#00ff3d" d="M1150 230h10v10h-10z"/><path fill="#00ff3a" d="M1160 230h10v10h-10z"/><path fill="#00ff37" d="M1170 230h10v10h-10z"/><path fill="#00ff34" d="M1180 230h10v10h-10z"/><path fill="#00ff31" d="M1190 230h10v10h-10z"/><path fill="#00ff2e" d="M1200 230h10v10h-10z"/><path fill="#00ff2b" d="M1210 230h10v10h-10z"/><path fill="#00ff28" d="M1220 230h10v10h-10z"/><path fill="#00ff24" d="M1230 230h10v10h-10z"/><path fill="#00ff21" d="M1240 230h10v10h-10z"/><path fill="#00ff1d" d="M1250 230h10v10h-10z"/><path fill="#00ff1a" d="M1260 230h10v10h-10z"/><path fill="#0cff16" d="M1270 230h10v10h-10z"/><path fill="#1cff12" d="M1280 230h10v10h-10z"/><path fill="#2dff0e" d="M1290 230h10v10h-10z"/><path fill="#3fff0a" d="M1300 230h10v10h-10z"/><path fill="#51ff05" d="M1310 230h10v10h-10z"/><path fill="#64ff01" d="M1320 230h10v10h-10z"/><path fill="#77ff00" d="M1330 230h10v10h-10z"/><path fill="#8cff00" d="M1340 230h10v10h-10z"/><path fill="#a1ff00" d="M1350 230h10v10h-10z"/><path fill="#b7ff00" d="M1360 230h10v10h-10z"/><path fill="#ceff00" d="M1370 230h10v10h-10z"/><path fill="#e5ff00" d="M1380 230h10v10h-10z"/><path fill="#feff00" d="M1390 230h10v10h-10z"/><path fill="#ffe800" d="M1400 230h10v10h-10z"/><path fill="#ffd400" d="M1410 230h10v10h-10z"/><path fill="#ffc200" d="M1420 230h10v10h-10z"/><path fill="#ffb200" d="M1430 230h10v10h-10z"/><path fill="#fea400" d="M1440 230h10v10h-10z"/><path fill="#fc9600" d="M1450 230h10v10h-10z"/><path fill="#f98900" d="M1460 230h10v10h-10z"/><path fill="#f37d00" d="M1470 230h10v10h-10z"/><path fill="#ec7000" d="M1480 230h10v10h-10z"/><path fill="#e36500" d="M1490 230h10v10h-10z"/><path fill="#d95a00" d="M1500 230h10v10h-10z"/><path fill="#cd4f00" d="M1510 230h10v10h-10z"/><path fill="#bf4500" d="M1520 230h10v10h-10z"/><path fill="#b03b00" d="M1530 230h10v10h-10z"/><path fill="#9f3200" d="M1540 230h10v10h-10z"/><path fill="#992d00" d="M1550 230h10v10h-10z"/><path fill="#992a00" d="M1560 230h10v10h-10z"/><path fill="#00ff47" d="M1140 240h10v10h-10z"/><path fill="#00ff44" d="M1150 240h10v10h-10z"/><path fill="#00ff42" d="M1160 240h10v10h-10z"/><path fill="#00ff3f" d="M1170 240h10v10h-10z"/><path fill="#00ff3c" d="M1180 240h10v10h-10z"/><path fill="#00ff39" d="M1190 240h10v10h-10z"/><path fill="#00ff36" d="M1200 240h10v10h-10z"/><path fill="#00ff33" d="M1210 240h10v10h-10z"/><path fill="#00ff2f" d="M1220 240h10v10h-10z"/><path fill="#00ff2c" d="M1230 240h10v10h-10z"/><path fill="#00ff29" d="M1240 240h10v10h-10z"/><path fill="#00ff25" d="M1250 240h10v10h-10z"/><path fill="#01ff21" d="M1260 240h10v10h-10z"/><path fill="#12ff1d" d="M1270 240h10v10h-10z"/><path fill="#23ff19" d="M1280 240h10v10h-10z"/><path fill="#35ff15" d="M1290 240h10v10h-10z"/><path fill="#47ff11" d="M1300 240h10v10h-10z"/><path fill="#5aff0d" d="M1310 240h10v10h-10z"/><path fill="#6eff08" d="M1320 240h10v10h-10z"/><path fill="#83ff03" d="M1330 240h10v10h-10z"/><path fill="#98ff00" d="M1340 240h10v10h-10z"/><path fill="#aeff00" d="M1350 240h10v10h-10z"/><path fill="#c6ff00" d="M1360 240h10v10h-10z"/><path fill="#deff00" d="M1370 240h10v10h-10z"/><path fill="#f7ff00" d="M1380 240h10v10h-10z"/><path fill="#ffee00" d="M1390 240h10v10h-10z"/><path fill="#ffd800" d="M1400 240h10v10h-10z"/><path fill="#ffc500" d="M1410 240h10v10h-10z"/><path fill="#ffb500" d="M1420 240h10v10h-10z"/><path fill="#ffa600" d="M1430 240h10v10h-10z"/><path fill="#fe9900" d="M1440 240h10v10h-10z"/><path fill="#fc8c00" d="M1450 240h10v10h-10z"/><path fill="#f98000" d="M1460 240h10v10h-10z"/><path fill="#f37400" d="M1470 240h10v10h-10z"/><path fill="#ec6800" d="M1480 240h10v10h-10z"/><path fill="#e35d00" d="M1490 240h10v10h-10z"/><path fill="#d95300" d="M1500 240h10v10h-10z"/><path fill="#cd4900" d="M1510 240h10v10h-10z"/><path fill="#bf4000" d="M1520 240h10v10h-10z"/><path fill="#b03700" d="M1530 240h10v10h-10z"/><path fill="#9f2e00" d="M1540 240h10v10h-10z"/><path fill="#992900" d="M1550 240h10v10h-10z"/><path fill="#992700" d="M1560 240h10v10h-10z"/><path fill="#00ff4f" d="M1140 250h10v10h-10z"/><path fill="#00ff4c" d="M1150 250h10v10h-10z"/><path fill="#00ff4a" d="M1160 250h10v10h-10z"/><path fill="#00ff47" d="M1170 250h10v10h-10z"/><path fill="#00ff44" d="M1180 250h10v10h-10z"/><path fill="#00ff41" d="M1190 250h10v10h-10z"/><path fill="#00ff3e" d="M1200 250h10v10h-10z"/><path fill="#00ff3b" d="M1210 250h10v10h-10z"/><path fill="#00ff38" d="M1220 250h10v10h-10z"/><path fill="#00ff34" d="M1230 250h10v10h-10z"/><path fill="#00ff31" d="M1240 250h10v10h-10z"/><path fill="#00ff2d" d="M1250 250h10v10h-10z"/><path fill="#07ff2a" d="M1260 250h10v10h-10z"/><path fill="#18ff26" d="M1270 250h10v10h-10z"/><path fill="#2aff22" d="M1280 250h10v10h-10z"/><path fill="#3dff1e" d="M1290 250h10v10h-10z"/><path fill="#50ff19" d="M1300 250h10v10h-10z"/><path fill="#64ff15" d="M1310 250h10v10h-10z"/><path fill="#79ff10" d="M1320 250h10v10h-10z"/><path fill="#8fff0b" d="M1330 250h10v10h-10z"/><path fill="#a6ff06" d="M1340 250h10v10h-10z"/><path fill="#bdff01" d="M1350 250h10v10h-10z"/><path fill="#d6ff00" d="M1360 250h10v10h-10z"/><path fill="#f0ff00" d="M1370 250h10v10h-10z"/><path fill="#fff400" d="M1380 250h10v10h-10z"/><path fill="#ffdc00" d="M1390 250h10v10h-10z"/><path fill="#ffc800" d="M1400 250h10v10h-10z"/><path fill="#ffb700" d="M1410 250h10v10h-10z"/><path fill="#ffa800" d="M1420 250h10v10h-10z"/><path fill="#ff9a00" d="M1430 250h10v10h-10z"/><path fill="#fe8e00" d="M1440 250h10v10h-10z"/><path fill="#fc8200" d="M1450 250h10v10h-10z"/><path fill="#f97600" d="M1460 250h10v10h-10z"/><path fill="#f36b00" d="M1470 250h10v10h-10z"/><path fill="#ec6100" d="M1480 250h10v10h-10z"/><path fill="#e35600" d="M1490 250h10v10h-10z"/><path fill="#d94d00" d="M1500 250h10v10h-10z"/><path fill="#cd4300" d="M1510 250h10v10h-10z"/><path fill="#bf3b00" d="M1520 250h10v10h-10z"/><path fill="#b03200" d="M1530 250h10v10h-10z"/><path fill="#9f2a00" d="M1540 250h10v10h-10z"/><path fill="#992600" d="M1550 250h10v10h-10z"/><path fill="#992300" d="M1560 250h10v10h-10z"/><path fill="#00ff57" d="M1140 260h10v10h-10z"/><path fill="#00ff55" d="M1150 260h10v10h-10z"/><path fill="#00ff52" d="M1160 260h10v10h-10z"/><path fill="#00ff4f" d="M1170 260h10v10h-10z"/><path fill="#00ff4d" d="M1180 260h10v10h-10z"/><path fill="#00ff4a" d="M1190 260h10v10h-10z"/><path fill="#00ff47" d="M1200 260h10v10h-10z"/><path fill="#00ff44" d="M1210 260h10v10h-10z"/><path fill="#00ff40" d="M1220 260h10v10h-10z"/><path fill="#00ff3d" d="M1230 260h10v10h-10z"/><path fill="#00ff3a" d="M1240 260h10v10h-10z"/><path fill="#00ff36" d="M1250 260h10v10h-10z"/><path fill="#0dff32" d="M1260 260h10v10h-10z"/><path fill="#1fff2f" d="M1270 260h10v10h-10z"/><path fill="#32ff2b" d="M1280 260h10v10h-10z"/><path fill="#46ff26" d="M1290 260h10v10h-10z"/><path fill="#5aff22" d="M1300 260h10v10h-10z"/><path fill="#6fff1e" d="M1310 260h10v10h-10z"/><path fill="#86ff19" d="M1320 260h10v10h-10z"/><path fill="#9dff14" d="M1330 260h10v10h-10z"/><path fill="#b5ff0f" d="M1340 260h10v10h-10z"/><path fill="#ceff0a" d="M1350 260h10v10h-10z"/><path fill="#e8ff04" d="M1360 260h10v10h-10z"/><path fill="#fffa00" d="M1370 260h10v10h-10z"/><path fill="#ffe100" d="M1380 260h10v10h-10z"/><path fill="#ffcc00" d="M1390 260h10v10h-10z"/><path fill="#ffba00" d="M1400 260h10v10h-10z"/><path fill="#ffa900" d="M1410 260h10v10h-10z"/><path fill="#ff9b00" d="M1420 260h10v10h-10z"/><path fill="#ff8f00" d="M1430 260h10v10h-10z"/><path fill="#fe8300" d="M1440 260h10v10h-10z"/><path fill="#fc7800" d="M1450 260h10v10h-10z"/><path fill="#f96d00" d="M1460 260h10v10h-10z"/><path fill="#f36300" d="M1470 260h10v10h-10z"/><path fill="#ec5900" d="M1480 260h10v10h-10z"/><path fill="#e34f00" d="M1490 260h10v10h-10z"/><path fill="#d94600" d="M1500 260h10v10h-10z"/><path fill="#cd3e00" d="M1510 260h10v10h-10z"/><path fill="#bf3600" d="M1520 260h10v10h-10z"/><path fill="#b02e00" d="M1530 260h10v10h-10z"/><path fill="#9f2600" d="M1540 260h10v10h-10z"/><path fill="#992200" d="M1550 260h10v10h-10z"/><path fill="#992000" d="M1560 260h10v10h-10z"/><path fill="#00ff60" d="M1140 270h10v10h-10z"/><path fill="#00ff5e" d="M1150 270h10v10h-10z"/><path fill="#00ff5b" d="M1160 270h10v10h-10z"/><path fill="#00ff59" d="M1170 270h10v10h-10z"/><path fill="#00ff56" d="M1180 270h10v10h-10z"/><path fill="#00ff53" d="M1190 270h10v10h-10z"/><path fill="#00ff50" d="M1200 270h10v10h-10z"/><path fill="#00ff4d" d="M1210 270h10v10h-10z"/><path fill="#00ff4a" d="M1220 270h10v10h-10z"/><path fill="#00ff47" d="M1230 270h10v10h-10z"/><path fill="#00ff43" d="M1240 270h10v10h-10z"/><path fill="#02ff40" d="M1250 270h10v10h-10z"/><path fill="#14ff3c" d="M1260 270h10v10h-10z"/><path fill="#27ff38" d="M1270 270h10v10h-10z"/><path fill="#3bff34" d="M1280 270h10v10h-10z"/><path fill="#50ff30" d="M1290 270h10v10h-10z"/><path fill="#65ff2c" d="M1300 270h10v10h-10z"/><path fill="#7cff27" d="M1310 270h10v10h-10z"/><path fill="#93ff23" d="M1320 270h10v10h-10z"/><path fill="#abff1e" d="M1330 270h10v10h-10z"/><path fill="#c5ff19" d="M1340 270h10v10h-10z"/><path fill="#e0ff13" d="M1350 270h10v10h-10z"/><path fill="#fcff0e" d="M1360 270h10v10h-10z"/><path fill="#ffe707" d="M1370 270h10v10h-10z"/><path fill="#ffd001" d="M1380 270h10v10h-10z"/><path fill="#ffbc00" d="M1390 270h10v10h-10z"/><path fill="#ffab00" d="M1400 270h10v10h-10z"/><path fill="#ff9c00" d="M1410 270h10v10h-10z"/><path fill="#ff8f00" d="M1420 270h10v10h-10z"/><path fill="#ff8400" d="M1430 270h10v10h-10z"/><path fill="#fe7900" d="M1440 270h10v10h-10z"/><path fill="#fc6e00" d="M1450 270h10v10h-10z"/><path fill="#f96400" d="M1460 270h10v10h-10z"/><path fill="#f35b00" d="M1470 270h10v10h-10z"/><path fill="#ec5200" d="M1480 270h10v10h-10z"/><path fill="#e34900" d="M1490 270h10v10h-10z"/><path fill="#d94000" d="M1500 270h10v10h-10z"/><path fill="#cd3800" d="M1510 270h10v10h-10z"/><path fill="#bf3100" d="M1520 270h10v10h-10z"/><path fill="#b02a00" d="M1530 270h10v10h-10z"/><path fill="#9f2300" d="M1540 270h10v10h-10z"/><path fill="#991f00" d="M1550 270h10v10h-10z"/><path fill="#991d00" d="M1560 270h10v10h-10z"/><path fill="#00ff6a" d="M1140 280h10v10h-10z"/><path fill="#00ff68" d="M1150 280h10v10h-10z"/><path fill="#00ff65" d="M1160 280h10v10h-10z"/><path fill="#00ff63" d="M1170 280h10v10h-10z"/><path fill="#00ff60" d="M1180 280h10v10h-10z"/><path fill="#00ff5d" d="M1190 280h10v10h-10z"/><path fill="#00ff5a" d="M1200 280h10v10h-10z"/><path fill="#00ff57" d="M1210 280h10v10h-10z"/><path fill="#00ff54" d="M1220 280h10v10h-10z"/><path fill="#00ff51" d="M1230 280h10v10h-10z"/><path fill="#00ff4e" d="M1240 280h10v10h-10z"/><path fill="#08ff4a" d="M1250 280h10v10h-10z"/><path fill="#1bff46" d="M1260 280h10v10h-10z"/><path fill="#2fff43" d="M1270 280h10v10h-10z"/><path fill="#44ff3f" d="M1280 280h10v10h-10z"/><path fill="#5aff3b" d="M1290 280h10v10h-10z"/><path fill="#71ff36" d="M1300 280h10v10h-10z"/><path fill="#89ff32" d="M1310 280h10v10h-10z"/><path fill="#a2ff2d" d="M1320 280h10v10h-10z"/><path fill="#bcff28" d="M1330 280h10v10h-10z"/><path fill="#d7ff23" d="M1340 280h10v10h-10z"/><path fill="#f4ff1e" d="M1350 280h10v10h-10z"/><path fill="#ffed16" d="M1360 280h10v10h-10z"/><path fill="#ffd50f" d="M1370 280h10v10h-10z"/><path fill="#ffc009" d="M1380 280h10v10h-10z"/><path fill="#ffae04" d="M1390 280h10v10h-10z"/><path fill="#ff9e00" d="M1400 280h10v10h-10z"/><path fill="#ff9000" d="M1410 280h10v10h-10z"/><path fill="#ff8400" d="M1420 280h10v10h-10z"/><path fill="#ff7900" d="M1430 280h10v10h-10z"/><path fill="#fe6f00" d="M1440 280h10v10h-10z"/><path fill="#fc6500" d="M1450 280h10v10h-10z"/><path fill="#f95c00" d="M1460 280h10v10h-10z"/><path fill="#f35300" d="M1470 280h10v10h-10z"/><path fill="#ec4a00" d="M1480 280h10v10h-10z"/><path fill="#e34200" d="M1490 280h10v10h-10z"/><path fill="#d93a00" d="M1500 280h10v10h-10z"/><path fill="#cd3300" d="M1510 280h10v10h-10z"/><path fill="#bf2c00" d="M1520 280h10v10h-10z"/><path fill="#b02500" d="M1530 280h10v10h-10z"/><path fill="#9f1f00" d="M1540 280h10v10h-10z"/><path fill="#991c00" d="M1550 280h10v10h-10z"/><path fill="#991900" d="M1560 280h10v10h-10z"/><path fill="#00ff75" d="M1140 290h10v10h-10z"/><path fill="#00ff72" d="M1150 290h10v10h-10z"/><path fill="#00ff70" d="M1160 290h10v10h-10z"/><path fill="#00ff6d" d="M1170 290h10v10h-10z"/><path fill="#00ff6b" d="M1180 290h10v10h-10z"/><path fill="#00ff68" d="M1190 290h10v10h-10z"/><path fill="#00ff65" d="M1200 290h10v10h-10z"/><path fill="#00ff62" d="M1210 290h10v10h-10z"/><path fill="#00ff5f" d="M1220 290h10v10h-10z"/><path fill="#00ff5c" d="M1230 290h10v10h-10z"/><path fill="#00ff59" d="M1240 290h10v10h-10z"/><path fill="#0fff55" d="M1250 290h10v10h-10z"/><path fill="#23ff52" d="M1260 290h10v10h-10z"/><path fill="#39ff4e" d="M1270 290h10v10h-10z"/><path fill="#4fff4a" d="M1280 290h10v10h-10z"/><path fill="#66ff46" d="M1290 290h10v10h-10z"/><path fill="#7eff42" d="M1300 290h10v10h-10z"/><path fill="#98ff3e" d="M1310 290h10v10h-10z"/><path fill="#b2ff39" d="M1320 290h10v10h-10z"/><path fill="#ceff34" d="M1330 290h10v10h-10z"/><path fill="#ebff2f" d="M1340 290h10v10h-10z"/><path fill="#fff428" d="M1350 290h10v10h-10z"/><path fill="#ffda1f" d="M1360 290h10v10h-10z"/><path fill="#ffc317" d="M1370 290h10v10h-10z"/><path fill="#ffb010" d="M1380 290h10v10h-10z"/><path fill="#ff9f0b" d="M1390 290h10v10h-10z"/><path fill="#ff9106" d="M1400 290h10v10h-10z"/><path fill="#ff8401" d="M1410 290h10v10h-10z"/><path fill="#ff7900" d="M1420 290h10v10h-10z"/><path fill="#ff6f00" d="M1430 290h10v10h-10z"/><path fill="#fe6500" d="M1440 290h10v10h-10z"/><path fill="#fc5c00" d="M1450 290h10v10h-10z"/><path fill="#f95400" d="M1460 290h10v10h-10z"/><path fill="#f34b00" d="M1470 290h10v10h-10z"/><path fill="#ec4300" d="M1480 290h10v10h-10z"/><path fill="#e33c00" d="M1490 290h10v10h-10z"/><path fill="#d93500" d="M1500 290h10v10h-10z"/><path fill="#cd2e00" d="M1510 290h10v10h-10z"/><path fill="#bf2700" d="M1520 290h10v10h-10z"/><path fill="#b02100" d="M1530 290h10v10h-10z"/><path fill="#9f1c00" d="M1540 290h10v10h-10z"/><path fill="#991800" d="M1550 290h10v10h-10z"/><path fill="#991600" d="M1560 290h10v10h-10z"/><path fill="#00ff80" d="M1140 300h10v10h-10z"/><path fill="#00ff7e" d="M1150 300h10v10h-10z"/><path fill="#00ff7b" d="M1160 300h10v10h-10z"/><path fill="#00ff79" d="M1170 300h10v10h-10z"/><path fill="#00ff76" d="M1180 300h10v10h-10z"/><path fill="#00ff74" d="M1190 300h10v10h-10z"/><path fill="#00ff71" d="M1200 300h10v10h-10z"/><path fill="#00ff6e" d="M1210 300h10v10h-10z"/><path fill="#00ff6b" d="M1220 300h10v10h-10z"/><path fill="#00ff68" d="M1230 300h10v10h-10z"/><path fill="#02ff65" d="M1240 300h10v10h-10z"/><path fill="#17ff62" d="M1250 300h10v10h-10z"/><path fill="#2cff5f" d="M1260 300h10v10h-10z"/><path fill="#43ff5b" d="M1270 300h10v10h-10z"/><path fill="#5aff57" d="M1280 300h10v10h-10z"/><path fill="#73ff53" d="M1290 300h10v10h-10z"/><path fill="#8dff4f" d="M1300 300h10v10h-10z"/><path fill="#a8ff4b" d="M1310 300h10v10h-10z"/><path fill="#c4ff46" d="M1320 300h10v10h-10z"/><path fill="#e2ff41" d="M1330 300h10v10h-10z"/><path fill="#fffc3c" d="M1340 300h10v10h-10z"/><path fill="#ffdf30" d="M1350 300h10v10h-10z"/><path fill="#ffc726" d="M1360 300h10v10h-10z"/><path fill="#ffb31e" d="M1370 300h10v10h-10z"/><path fill="#ffa117" d="M1380 300h10v10h-10z"/><path fill="#ff9211" d="M1390 300h10v10h-10z"/><path fill="#ff840c" d="M1400 300h10v10h-10z"/><path fill="#ff7907" d="M1410 300h10v10h-10z"/><path fill="#ff6e03" d="M1420 300h10v10h-10z"/><path fill="#ff6500" d="M1430 300h10v10h-10z"/><path fill="#fe5c00" d="M1440 300h10v10h-10z"/><path fill="#fc5400" d="M1450 300h10v10h-10z"/><path fill="#f94c00" d="M1460 300h10v10h-10z"/><path fill="#f34400" d="M1470 300h10v10h-10z"/><path fill="#ec3d00" d="M1480 300h10v10h-10z"/><path fill="#e33600" d="M1490 300h10v10h-10z"/><path fill="#d92f00" d="M1500 300h10v10h-10z"/><path fill="#cd2900" d="M1510 300h10v10h-10z"/><path fill="#bf2300" d="M1520 300h10v10h-10z"/><path fill="#b01d00" d="M1530 300h10v10h-10z"/><path fill="#9f1800" d="M1540 300h10v10h-10z"/><path fill="#991500" d="M1550 300h10v10h-10z"/><path fill="#991300" d="M1560 300h10v10h-10z"/><path fill="#00ff8c" d="M1140 310h10v10h-10z"/><path fill="#00ff8a" d="M1150 310h10v10h-10z"/><path fill="#00ff88" d="M1160 310h10v10h-10z"/><path fill="#00ff85" d="M1170 310h10v10h-10z"/><path fill="#00ff83" d="M1180 310h10v10h-10z"/><path fill="#00ff81" d="M1190 310h10v10h-10z"/><path fill="#00ff7e" d="M1200 310h10v10h-10z"/><path fill="#00ff7b" d="M1210 310h10v10h-10z"/><path fill="#00ff79" d="M1220 310h10v10h-10z"/><path fill="#00ff76" d="M1230 310h10v10h-10z"/><path fill="#09ff73" d="M1240 310h10v10h-10z"/><path fill="#1fff70" d="M1250 310h10v10h-10z"/><path fill="#36ff6c" d="M1260 310h10v10h-10z"/><path fill="#4eff69" d="M1270 310h10v10h-10z"/><path fill="#67ff65" d="M1280 310h10v10h-10z"/><path fill="#81ff61" d="M1290 310h10v10h-10z"/><path fill="#9dff5d" d="M1300 310h10v10h-10z"/><path fill="#baff59" d="M1310 310h10v10h-10z"/><path fill="#d9ff55" d="M1320 310h10v10h-10z"/><path fill="#f9ff50" d="M1330 310h10v10h-10z"/><path fill="#ffe544" d="M1340 310h10v10h-10z"/><path fill="#ffcb38" d="M1350 310h10v10h-10z"/><path fill="#ffb52e" d="M1360 310h10v10h-10z"/><path fill="#ffa325" d="M1370 310h10v10h-10z"/><path fill="#ff931e" d="M1380 310h10v10h-10z"/><path fill="#ff8518" d="M1390 310h10v10h-10z"/><path fill="#ff7912" d="M1400 310h10v10h-10z"/><path fill="#ff6e0d" d="M1410 310h10v10h-10z"/><path fill="#ff6409" d="M1420 310h10v10h-10z"/><path fill="#ff5b05" d="M1430 310h10v10h-10z"/><path fill="#fe5301" d="M1440 310h10v10h-10z"/><path fill="#fc4c00" d="M1450 310h10v10h-10z"/><path fill="#f94400" d="M1460 310h10v10h-10z"/><path fill="#f33d00" d="M1470 310h10v10h-10z"/><path fill="#ec3600" d="M1480 310h10v10h-10z"/><path fill="#e33000" d="M1490 310h10v10h-10z"/><path fill="#d92a00" d="M1500 310h10v10h-10z"/><path fill="#cd2400" d="M1510 310h10v10h-10z"/><path fill="#bf1e00" d="M1520 310h10v10h-10z"/><path fill="#b01900" d="M1530 310h10v10h-10z"/><path fill="#9f1500" d="M1540 310h10v10h-10z"/><path fill="#991200" d="M1550 310h10v10h-10z"/><path fill="#991000" d="M1560 310h10v10h-10z"/><path fill="#00ff99" d="M1140 320h10v10h-10z"/><path fill="#00ff97" d="M1150 320h10v10h-10z"/><path fill="#00ff95" d="M1160 320h10v10h-10z"/><path fill="#00ff93" d="M1170 320h10v10h-10z"/><path fill="#00ff91" d="M1180 320h10v10h-10z"/><path fill="#00ff8f" d="M1190 320h10v10h-10z"/><path fill="#00ff8c" d="M1200 320h10v10h-10z"/><path fill="#00ff8a" d="M1210 320h10v10h-10z"/><path fill="#00ff87" d="M1220 320h10v10h-10z"/><path fill="#00ff85" d="M1230 320h10v10h-10z"/><path fill="#11ff82" d="M1240 320h10v10h-10z"/><path fill="#28ff7f" d="M1250 320h10v10h-10z"/><path fill="#41ff7c" d="M1260 320h10v10h-10z"/><path fill="#5aff79" d="M1270 320h10v10h-10z"/><path fill="#75ff75" d="M1280 320h10v10h-10z"/><path fill="#91ff71" d="M1290 320h10v10h-10z"/><path fill="#afff6e" d="M1300 320h10v10h-10z"/><path fill="#ceff6a" d="M1310 320h10v10h-10z"/><path fill="#f0ff65" d="M1320 320h10v10h-10z"/><path fill="#ffed5a" d="M1330 320h10v10h-10z"/><path fill="#ffd04b" d="M1340 320h10v10h-10z"/><path fill="#ffb93f" d="M1350 320h10v10h-10z"/><path fill="#ffa535" d="M1360 320h10v10h-10z"/><path fill="#ff942c" d="M1370 320h10v10h-10z"/><path fill="#ff8524" d="M1380 320h10v10h-10z"/><path fill="#ff781e" d="M1390 320h10v10h-10z"/><path fill="#ff6d18" d="M1400 320h10v10h-10z"/><path fill="#ff6313" d="M1410 320h10v10h-10z"/><path fill="#ff5a0e" d="M1420 320h10v10h-10z"/><path fill="#ff520a" d="M1430 320h10v10h-10z"/><path fill="#fe4b06" d="M1440 320h10v10h-10z"/><path fill="#fc4303" d="M1450 320h10v10h-10z"/><path fill="#f93d00" d="M1460 320h10v10h-10z"/><path fill="#f33600" d="M1470 320h10v10h-10z"/><path fill="#ec3000" d="M1480 320h10v10h-10z"/><path fill="#e32a00" d="M1490 320h10v10h-10z"/><path fill="#d92400" d="M1500 320h10v10h-10z"/><path fill="#cd1f00" d="M1510 320h10v10h-10z"/><path fill="#bf1a00" d="M1520 320h10v10h-10z"/><path fill="#b01600" d="M1530 320h10v10h-10z"/><path fill="#9f1200" d="M1540 320h10v10h-10z"/><path fill="#990f00" d="M1550 320h10v10h-10z"/><path fill="#990d00" d="M1560 320h10v10h-10z"/><path fill="#00ffa8" d="M1140 330h10v10h-10z"/><path fill="#00ffa6" d="M1150 330h10v10h-10z"/><path fill="#00ffa4" d="M1160 330h10v10h-10z"/><path fill="#00ffa2" d="M1170 330h10v10h-10z"/><path fill="#00ffa0" d="M1180 330h10v10h-10z"/><path fill="#00ff9e" d="M1190 330h10v10h-10z"/><path fill="#00ff9c" d="M1200 330h10v10h-10z"/><path fill="#00ff9a" d="M1210 330h10v10h-10z"/><path fill="#00ff97" d="M1220 330h10v10h-10z"/><path fill="#03ff95" d="M1230 330h10v10h-10z"/><path fill="#1aff92" d="M1240 330h10v10h-10z"/><path fill="#33ff90" d="M1250 330h10v10h-10z"/><path fill="#4dff8d" d="M1260 330h10v10h-10z"/><path fill="#68ff8a" d="M1270 330h10v10h-10z"/><path fill="#85ff87" d="M1280 330h10v10h-10z"/><path fill="#a3ff83" d="M1290 330h10v10h-10z"/><path fill="#c3ff80" d="M1300 330h10v10h-10z"/><path fill="#e5ff7c" d="M1310 330h10v10h-10z"/><path fill="#fff573" d="M1320 330h10v10h-10z"/><path fill="#ffd661" d="M1330 330h10v10h-10z"/><path fill="#ffbc52" d="M1340 330h10v10h-10z"/><path fill="#ffa746" d="M1350 330h10v10h-10z"/><path fill="#ff953b" d="M1360 330h10v10h-10z"/><path fill="#ff8632" d="M1370 330h10v10h-10z"/><path fill="#ff782a" d="M1380 330h10v10h-10z"/><path fill="#ff6c24" d="M1390 330h10v10h-10z"/><path fill="#ff621d" d="M1400 330h10v10h-10z"/><path fill="#ff5918" d="M1410 330h10v10h-10z"/><path fill="#ff5113" d="M1420 330h10v10h-10z"/><path fill="#ff490f" d="M1430 330h10v10h-10z"/><path fill="#fe420b" d="M1440 330h10v10h-10z"/><path fill="#fc3c07" d="M1450 330h10v10h-10z"/><path fill="#f93504" d="M1460 330h10v10h-10z"/><path fill="#f32f01" d="M1470 330h10v10h-10z"/><path fill="#ec2a00" d="M1480 330h10v10h-10z"/><path fill="#e32400" d="M1490 330h10v10h-10z"/><path fill="#d91f00" d="M1500 330h10v10h-10z"/><path fill="#cd1a00" d="M1510 330h10v10h-10z"/><path fill="#bf1600" d="M1520 330h10v10h-10z"/><path fill="#b01200" d="M1530 330h10v10h-10z"/><path fill="#9f0e00" d="M1540 330h10v10h-10z"/><path fill="#990c00" d="M1550 330h10v10h-10z"/><path fill="#990a00" d="M1560 330h10v10h-10z"/><path fill="#00ffb7" d="M1140 340h10v10h-10z"/><path fill="#00ffb6" d="M1150 340h10v10h-10z"/><path fill="#00ffb4" d="M1160 340h10v10h-10z"/><path fill="#00ffb3" d="M1170 340h10v10h-10z"/><path fill="#00ffb1" d="M1180 340h10v10h-10z"/><path fill="#00ffaf" d="M1190 340h10v10h-10z"/><path fill="#00ffad" d="M1200 340h10v10h-10z"/><path fill="#00ffab" d="M1210 340h10v10h-10z"/><path fill="#00ffa9" d="M1220 340h10v10h-10z"/><path fill="#0bffa7" d="M1230 340h10v10h-10z"/><path fill="#24ffa5" d="M1240 340h10v10h-10z"/><path fill="#3effa3" d="M1250 340h10v10h-10z"/><path fill="#5affa0" d="M1260 340h10v10h-10z"/><path fill="#77ff9d" d="M1270 340h10v10h-10z"/><path fill="#97ff9b" d="M1280 340h10v10h-10z"/><path fill="#b8ff98" d="M1290 340h10v10h-10z"/><path fill="#dbff95" d="M1300 340h10v10h-10z"/><path fill="#fffe91" d="M1310 340h10v10h-10z"/><path fill="#ffdc7a" d="M1320 340h10v10h-10z"/><path fill="#ffc068" d="M1330 340h10v10h-10z"/><path fill="#ffa959" d="M1340 340h10v10h-10z"/><path fill="#ff964c" d="M1350 340h10v10h-10z"/><path fill="#ff8642" d="M1360 340h10v10h-10z"/><path fill="#ff7838" d="M1370 340h10v10h-10z"/><path fill="#ff6c30" d="M1380 340h10v10h-10z"/><path fill="#ff6129" d="M1390 340h10v10h-10z"/><path fill="#ff5723" d="M1400 340h10v10h-10z"/><path fill="#ff4f1d" d="M1410 340h10v10h-10z"/><path fill="#ff4718" d="M1420 340h10v10h-10z"/><path fill="#ff4114" d="M1430 340h10v10h-10z"/><path fill="#fe3a10" d="M1440 340h10v10h-10z"/><path fill="#fc340c" d="M1450 340h10v10h-10z"/><path fill="#f92e08" d="M1460 340h10v10h-10z"/><path fill="#f32905" d="M1470 340h10v10h-10z"/><path fill="#ec2302" d="M1480 340h10v10h-10z"/><path fill="#e31f00" d="M1490 340h10v10h-10z"/><path fill="#d91a00" d="M1500 340h10v10h-10z"/><path fill="#cd1600" d="M1510 340h10v10h-10z"/><path fill="#bf1200" d="M1520 340h10v10h-10z"/><path fill="#b00e00" d="M1530 340h10v10h-10z"/><path fill="#9f0b00" d="M1540 340h10v10h-10z"/><path fill="#990900" d="M1550 340h10v10h-10z"/><path fill="#990800" d="M1560 340h10v10h-10z"/><path fill="#00ffc8" d="M1140 350h10v10h-10z"/><path fill="#00ffc7" d="M1150 350h10v10h-10z"/><path fill="#00ffc6" d="M1160 350h10v10h-10z"/><path fill="#00ffc5" d="M1170 350h10v10h-10z"/><path fill="#00ffc3" d="M1180 350h10v10h-10z"/><path fill="#00ffc2" d="M1190 350h10v10h-10z"/><path fill="#00ffc0" d="M1200 350h10v10h-10z"/><path fill="#00ffbf" d="M1210 350h10v10h-10z"/><path fill="#00ffbd" d="M1220 350h10v10h-10z"/><path fill="#14ffbc" d="M1230 350h10v10h-10z"/><path fill="#2fffba" d="M1240 350h10v10h-10z"/><path fill="#4bffb8" d="M1250 350h10v10h-10z"/><path fill="#69ffb6" d="M1260 350h10v10h-10z"/><path fill="#89ffb4" d="M1270 350h10v10h-10z"/><path fill="#abffb1" d="M1280 350h10v10h-10z"/><path fill="#cfffaf" d="M1290 350h10v10h-10z"/><path fill="#f5ffac" d="M1300 350h10v10h-10z"/><path fill="#ffe397" d="M1310 350h10v10h-10z"/><path fill="#ffc581" d="M1320 350h10v10h-10z"/><path fill="#ffac6e" d="M1330 350h10v10h-10z"/><path fill="#ff985f" d="M1340 350h10v10h-10z"/><path fill="#ff8752" d="M1350 350h10v10h-10z"/><path fill="#ff7848" d="M1360 350h10v10h-10z"/><path fill="#ff6b3e" d="M1370 350h10v10h-10z"/><path fill="#ff6036" d="M1380 350h10v10h-10z"/><path fill="#ff562f" d="M1390 350h10v10h-10z"/><path fill="#ff4d28" d="M1400 350h10v10h-10z"/><path fill="#ff4622" d="M1410 350h10v10h-10z"/><path fill="#ff3f1d" d="M1420 350h10v10h-10z"/><path fill="#ff3818" d="M1430 350h10v10h-10z"/><path fill="#fe3214" d="M1440 350h10v10h-10z"/><path fill="#fc2d10" d="M1450 350h10v10h-10z"/><path fill="#f9270c" d="M1460 350h10v10h-10z"/><path fill="#f32209" d="M1470 350h10v10h-10z"/><path fill="#ec1e06" d="M1480 350h10v10h-10z"/><path fill="#e31903" d="M1490 350h10v10h-10z"/><path fill="#d91501" d="M1500 350h10v10h-10z"/><path fill="#cd1100" d="M1510 350h10v10h-10z"/><path fill="#bf0e00" d="M1520 350h10v10h-10z"/><path fill="#b00b00" d="M1530 350h10v10h-10z"/><path fill="#9f0800" d="M1540 350h10v10h-10z"/><path fill="#990600" d="M1550 350h10v10h-10z"/><path fill="#990500" d="M1560 350h10v10h-10z"/><path fill="#00ffdb" d="M1140 360h10v10h-10z"/><path fill="#00ffda" d="M1150 360h10v10h-10z"/><path fill="#00ffda" d="M1160 360h10v10h-10z"/><path fill="#00ffd9" d="M1170 360h10v10h-10z"/><path fill="#00ffd8" d="M1180 360h10v10h-10z"/><path fill="#00ffd7" d="M1190 360h10v10h-10z"/><path fill="#00ffd6" d="M1200 360h10v10h-10z"/><path fill="#00ffd5" d="M1210 360h10v10h-10z"/><path fill="#03ffd4" d="M1220 360h10v10h-10z"/><path fill="#1effd3" d="M1230 360h10v10h-10z"/><path fill="#3bffd1" d="M1240 360h10v10h-10z"/><path fill="#5affd0" d="M1250 360h10v10h-10z"/><path fill="#7affcf" d="M1260 360h10v10h-10z"/><path fill="#9dffcd" d="M1270 360h10v10h-10z"/><path fill="#c2ffcb" d="M1280 360h10v10h-10z"/><path fill="#eaffca" d="M1290 360h10v10h-10z"/><path fill="#ffecb9" d="M1300 360h10v10h-10z"/><path fill="#ffca9d" d="M1310 360h10v10h-10z"/><path fill="#ffaf87" d="M1320 360h10v10h-10z"/><path fill="#ff9974" d="M1330 360h10v10h-10z"/><path fill="#ff8765" d="M1340 360h10v10h-10z"/><path fill="#ff7858" d="M1350 360h10v10h-10z"/><path fill="#ff6a4d" d="M1360 360h10v10h-10z"/><path fill="#ff5f44" d="M1370 360h10v10h-10z"/><path fill="#ff543b" d="M1380 360h10v10h-10z"/><path fill="#ff4c34" d="M1390 360h10v10h-10z"/><path fill="#ff442d" d="M1400 360h10v10h-10z"/><path fill="#ff3c27" d="M1410 360h10v10h-10z"/><path fill="#ff3622" d="M1420 360h10v10h-10z"/><path fill="#ff301d" d="M1430 360h10v10h-10z"/><path fill="#fe2b19" d="M1440 360h10v10h-10z"/><path fill="#fc2614" d="M1450 360h10v10h-10z"/><path fill="#f92110" d="M1460 360h10v10h-10z"/><path fill="#f31c0d" d="M1470 360h10v10h-10z"/><path fill="#ec180a" d="M1480 360h10v10h-10z"/><path fill="#e31407" d="M1490 360h10v10h-10z"/><path fill="#d91004" d="M1500 360h10v10h-10z"/><path fill="#cd0d02" d="M1510 360h10v10h-10z"/><path fill="#bf0a00" d="M1520 360h10v10h-10z"/><path fill="#b00700" d="M1530 360h10v10h-10z"/><path fill="#9f0500" d="M1540 360h10v10h-10z"/><path fill="#990300" d="M1550 360h10v10h-10z"/><path fill="#990200" d="M1560 360h10v10h-10z"/><path fill="#00fff0" d="M1140 370h10v10h-10z"/><path fill="#00fff0" d="M1150 370h10v10h-10z"/><path fill="#00ffef" d="M1160 370h10v10h-10z"/><path fill="#00ffef" d="M1170 370h10v10h-10z"/><path fill="#00ffef" d="M1180 370h10v10h-10z"/><path fill="#00ffee" d="M1190 370h10v10h-10z"/><path fill="#00ffee" d="M1200 370h10v10h-10z"/><path fill="#00ffee" d="M1210 370h10v10h-10z"/><path fill="#0dffed" d="M1220 370h10v10h-10z"/><path fill="#2affed" d="M1230 370h10v10h-10z"/><path fill="#49ffec" d="M1240 370h10v10h-10z"/><path fill="#6bffec" d="M1250 370h10v10h-10z"/><path fill="#8effeb" d="M1260 370h10v10h-10z"/><path fill="#b4ffea" d="M1270 370h10v10h-10z"/><path fill="#ddffea" d="M1280 370h10v10h-10z"/><path fill="#fff5e0" d="M1290 370h10v10h-10z"/><path fill="#ffd0be" d="M1300 370h10v10h-10z"/><path fill="#ffb3a2" d="M1310 370h10v10h-10z"/><path fill="#ff9b8c" d="M1320 370h10v10h-10z"/><path fill="#ff887a" d="M1330 370h10v10h-10z"/><path fill="#ff776b" d="M1340 370h10v10h-10z"/><path fill="#ff695e" d="M1350 370h10v10h-10z"/><path fill="#ff5d53" d="M1360 370h10v10h-10z"/><path fill="#ff5349" d="M1370 370h10v10h-10z"/><path fill="#ff4a40" d="M1380 370h10v10h-10z"/><path fill="#ff4139" d="M1390 370h10v10h-10z"/><path fill="#ff3a32" d="M1400 370h10v10h-10z"/><path fill="#ff342c" d="M1410 370h10v10h-10z"/><path fill="#ff2e26" d="M1420 370h10v10h-10z"/><path fill="#ff2821" d="M1430 370h10v10h-10z"/><path fill="#fe231d" d="M1440 370h10v10h-10z"/><path fill="#fc1f18" d="M1450 370h10v10h-10z"/><path fill="#f91a14" d="M1460 370h10v10h-10z"/><path fill="#f31611" d="M1470 370h10v10h-10z"/><path fill="#ec120d" d="M1480 370h10v10h-10z"/><path fill="#e30f0a" d="M1490 370h10v10h-10z"/><path fill="#d90b07" d="M1500 370h10v10h-10z"/><path fill="#cd0905" d="M1510 370h10v10h-10z"/><path fill="#bf0602" d="M1520 370h10v10h-10z"/><path fill="#b00401" d="M1530 370h10v10h-10z"/><path fill="#9f0200" d="M1540 370h10v10h-10z"/><path fill="#990100" d="M1550 370h10v10h-10z"/><path fill="#990000" d="M1560 370h10v10h-10z"/><path fill="#00f7ff" d="M1140 380h10v10h-10z"/><path fill="#00f7ff" d="M1150 380h10v10h-10z"/><path fill="#00f6ff" d="M1160 380h10v10h-10z"/><path fill="#00f6ff" d="M1170 380h10v10h-10z"/><path fill="#00f6ff" d="M1180 380h10v10h-10z"/><path fill="#00f6ff" d="M1190 380h10v10h-10z"/><path fill="#00f5ff" d="M1200 380h10v10h-10z"/><path fill="#00f5ff" d="M1210 380h10v10h-10z"/><path fill="#17f4ff" d="M1220 380h10v10h-10z"/><path fill="#35f4ff" d="M1230 380h10v10h-10z"/><path fill="#56f4ff" d="M1240 380h10v10h-10z"/><path fill="#78f3ff" d="M1250 380h10v10h-10z"/><path fill="#9df3ff" d="M1260 380h10v10h-10z"/><path fill="#c5f2ff" d="M1270 380h10v10h-10z"/><path fill="#eff2ff" d="M1280 380h10v10h-10z"/><path fill="#ffd7e4" d="M1290 380h10v10h-10z"/><path fill="#ffb7c2" d="M1300 380h10v10h-10z"/><path fill="#ff9da7" d="M1310 380h10v10h-10z"/><path fill="#ff8892" d="M1320 380h10v10h-10z"/><path fill="#ff777f" d="M1330 380h10v10h-10z"/><path fill="#ff6870" d="M1340 380h10v10h-10z"/><path fill="#ff5c63" d="M1350 380h10v10h-10z"/><path fill="#ff5158" d="M1360 380h10v10h-10z"/><path fill="#ff474e" d="M1370 380h10v10h-10z"/><path fill="#ff3f45" d="M1380 380h10v10h-10z"/><path fill="#ff383d" d="M1390 380h10v10h-10z"/><path fill="#ff3137" d="M1400 380h10v10h-10z"/><path fill="#ff2b30" d="M1410 380h10v10h-10z"/><path fill="#ff262b" d="M1420 380h10v10h-10z"/><path fill="#ff2126" d="M1430 380h10v10h-10z"/><path fill="#fe1c21" d="M1440 380h10v10h-10z"/><path fill="#fc181c" d="M1450 380h10v10h-10z"/><path fill="#f91418" d="M1460 380h10v10h-10z"/><path fill="#f31014" d="M1470 380h10v10h-10z"/><path fill="#ec0d11" d="M1480 380h10v10h-10z"/><path fill="#e30a0d" d="M1490 380h10v10h-10z"/><path fill="#d9070a" d="M1500 380h10v10h-10z"/><path fill="#cd0407" d="M1510 380h10v10h-10z"/><path fill="#bf0205" d="M1520 380h10v10h-10z"/><path fill="#b00103" d="M1530 380h10v10h-10z"/><path fill="#9f0001" d="M1540 380h10v10h-10z"/><path fill="#990000" d="M1550 380h10v10h-10z"/><path fill="#990000" d="M1560 380h10v10h-10z"/><path fill="#00e1ff" d="M1140 390h10v10h-10z"/><path fill="#00e0ff" d="M1150 390h10v10h-10z"/><path fill="#00dfff" d="M1160 390h10v10h-10z"/><path fill="#00deff" d="M1170 390h10v10h-10z"/><path fill="#00ddff" d="M1180 390h10v10h-10z"/><path fill="#00ddff" d="M1190 390h10v10h-10z"/><path fill="#00dcff" d="M1200 390h10v10h-10z"/><path fill="#03daff" d="M1210 390h10v10h-10z"/><path fill="#1fd9ff" d="M1220 390h10v10h-10z"/><path fill="#3cd8ff" d="M1230 390h10v10h-10z"/><path fill="#5cd7ff" d="M1240 390h10v10h-10z"/><path fill="#7dd6ff" d="M1250 390h10v10h-10z"/><path fill="#a0d4ff" d="M1260 390h10v10h-10z"/><path fill="#c6d3ff" d="M1270 390h10v10h-10z"/><path fill="#eed1ff" d="M1280 390h10v10h-10z"/><path fill="#ffbce7" d="M1290 390h10v10h-10z"/><path fill="#ffa0c6" d="M1300 390h10v10h-10z"/><path fill="#ff89ac" d="M1310 390h10v10h-10z"/><path fill="#ff7797" d="M1320 390h10v10h-10z"/><path fill="#ff6784" d="M1330 390h10v10h-10z"/><path fill="#ff5a75" d="M1340 390h10v10h-10z"/><path fill="#ff4f68" d="M1350 390h10v10h-10z"/><path fill="#ff455d" d="M1360 390h10v10h-10z"/><path fill="#ff3d53" d="M1370 390h10v10h-10z"/><path fill="#ff354a" d="M1380 390h10v10h-10z"/><path fill="#ff2e42" d="M1390 390h10v10h-10z"/><path fill="#ff283b" d="M1400 390h10v10h-10z"/><path fill="#ff2335" d="M1410 390h10v10h-10z"/><path fill="#ff1e2f" d="M1420 390h10v10h-10z"/><path fill="#ff192a" d="M1430 390h10v10h-10z"/><path fill="#fe1525" d="M1440 390h10v10h-10z"/><path fill="#fc1120" d="M1450 390h10v10h-10z"/><path fill="#f90e1c" d="M1460 390h10v10h-10z"/><path fill="#f30a18" d="M1470 390h10v10h-10z"/><path fill="#ec0714" d="M1480 390h10v10h-10z"/><path fill="#e30510" d="M1490 390h10v10h-10z"/><path fill="#d9020d" d="M1500 390h10v10h-10z"/><path fill="#cd000a" d="M1510 390h10v10h-10z"/><path fill="#bf0007" d="M1520 390h10v10h-10z"/><path fill="#b00005" d="M1530 390h10v10h-10z"/><path fill="#9f0003" d="M1540 390h10v10h-10z"/><path fill="#990002" d="M1550 390h10v10h-10z"/><path fill="#990001" d="M1560 390h10v10h-10z"/><path fill="#00ccff" d="M1140 400h10v10h-10z"/><path fill="#00cbff" d="M1150 400h10v10h-10z"/><path fill="#00caff" d="M1160 400h10v10h-10z"/><path fill="#00c8ff" d="M1170 400h10v10h-10z"/><path fill="#00c7ff" d="M1180 400h10v10h-10z"/><path fill="#00c5ff" d="M1190 400h10v10h-10z"/><path fill="#00c4ff" d="M1200 400h10v10h-10z"/><path fill="#0cc2ff" d="M1210 400h10v10h-10z"/><path fill="#27c0ff" d="M1220 400h10v10h-10z"/><path fill="#43bfff" d="M1230 400h10v10h-10z"/><path fill="#61bdff" d="M1240 400h10v10h-10z"/><path fill="#81bbff" d="M1250 400h10v10h-10z"/><path fill="#a2b8ff" d="M1260 400h10v10h-10z"/><path fill="#c6b6ff" d="M1270 400h10v10h-10z"/><path fill="#edb3ff" d="M1280 400h10v10h-10z"/><path fill="#ffa3ea" d="M1290 400h10v10h-10z"/><path fill="#ff8aca" d="M1300 400h10v10h-10z"/><path fill="#ff76b1" d="M1310 400h10v10h-10z"/><path fill="#ff669b" d="M1320 400h10v10h-10z"/><path fill="#ff5889" d="M1330 400h10v10h-10z"/><path fill="#ff4d7a" d="M1340 400h10v10h-10z"/><path fill="#ff436d" d="M1350 400h10v10h-10z"/><path fill="#ff3a61" d="M1360 400h10v10h-10z"/><path fill="#ff3257" d="M1370 400h10v10h-10z"/><path fill="#ff2b4e" d="M1380 400h10v10h-10z"/><path fill="#ff2546" d="M1390 400h10v10h-10z"/><path fill="#ff203f" d="M1400 400h10v10h-10z"/><path fill="#ff1b39" d="M1410 400h10v10h-10z"/><path fill="#ff1633" d="M1420 400h10v10h-10z"/><path fill="#ff122e" d="M1430 400h10v10h-10z"/><path fill="#fe0f29" d="M1440 400h10v10h-10z"/><path fill="#fc0b24" d="M1450 400h10v10h-10z"/><path fill="#f90820" d="M1460 400h10v10h-10z"/><path fill="#f3051b" d="M1470 400h10v10h-10z"/><path fill="#ec0217" d="M1480 400h10v10h-10z"/><path fill="#e30013" d="M1490 400h10v10h-10z"/><path fill="#d90010" d="M1500 400h10v10h-10z"/><path fill="#cd000d" d="M1510 400h10v10h-10z"/><path fill="#bf000a" d="M1520 400h10v10h-10z"/><path fill="#b00007" d="M1530 400h10v10h-10z"/><path fill="#9f0005" d="M1540 400h10v10h-10z"/><path fill="#990004" d="M1550 400h10v10h-10z"/><path fill="#990002" d="M1560 400h10v10h-10z"/><path fill="#00b9ff" d="M1140 410h10v10h-10z"/><path fill="#00b7ff" d="M1150 410h10v10h-10z"/><path fill="#00b6ff" d="M1160 410h10v10h-10z"/><path fill="#00b4ff" d="M1170 410h10v10h-10z"/><path fill="#00b2ff" d="M1180 410h10v10h-10z"/><path fill="#00b0ff" d="M1190 410h10v10h-10z"/><path fill="#00aeff" d="M1200 410h10v10h-10z"/><path fill="#14acff" d="M1210 410h10v10h-10z"/><path fill="#2eaaff" d="M1220 410h10v10h-10z"/><path fill="#49a7ff" d="M1230 410h10v10h-10z"/><path fill="#66a5ff" d="M1240 410h10v10h-10z"/><path fill="#84a2ff" d="M1250 410h10v10h-10z"/><path fill="#a59fff" d="M1260 410h10v10h-10z"/><path fill="#c79cff" d="M1270 410h10v10h-10z"/><path fill="#eb99ff" d="M1280 410h10v10h-10z"/><path fill="#ff8bed" d="M1290 410h10v10h-10z"/><path fill="#ff76ce" d="M1300 410h10v10h-10z"/><path fill="#ff65b5" d="M1310 410h10v10h-10z"/><path fill="#ff56a0" d="M1320 410h10v10h-10z"/><path fill="#ff4a8e" d="M1330 410h10v10h-10z"/><path fill="#ff407f" d="M1340 410h10v10h-10z"/><path fill="#ff3771" d="M1350 410h10v10h-10z"/><path fill="#ff2f66" d="M1360 410h10v10h-10z"/><path fill="#ff285c" d="M1370 410h10v10h-10z"/><path fill="#ff2253" d="M1380 410h10v10h-10z"/><path fill="#ff1c4b" d="M1390 410h10v10h-10z"/><path fill="#ff1844" d="M1400 410h10v10h-10z"/><path fill="#ff133d" d="M1410 410h10v10h-10z"/><path fill="#ff0f37" d="M1420 410h10v10h-10z"/><path fill="#ff0b32" d="M1430 410h10v10h-10z"/><path fill="#fe082d" d="M1440 410h10v10h-10z"/><path fill="#fc0528" d="M1450 410h10v10h-10z"/><path fill="#f90223" d="M1460 410h10v10h-10z"/><path fill="#f3001f" d="M1470 410h10v10h-10z"/><path fill="#ec001a" d="M1480 410h10v10h-10z"/><path fill="#e30016" d="M1490 410h10v10h-10z"/><path fill="#d90013" d="M1500 410h10v10h-10z"/><path fill="#cd000f" d="M1510 410h10v10h-10z"/><path fill="#bf000c" d="M1520 410h10v10h-10z"/><path fill="#b00009" d="M1530 410h10v10h-10z"/><path fill="#9f0007" d="M1540 410h10v10h-10z"/><path fill="#990005" d="M1550 410h10v10h-10z"/><path fill="#990004" d="M1560 410h10v10h-10z"/><path fill="#00a7ff" d="M1140 420h10v10h-10z"/><path fill="#00a5ff" d="M1150 420h10v10h-10z"/><path fill="#00a3ff" d="M1160 420h10v10h-10z"/><path fill="#00a1ff" d="M1170 420h10v10h-10z"/><path fill="#009fff" d="M1180 420h10v10h-10z"/><path fill="#009cff" d="M1190 420h10v10h-10z"/><path fill="#039aff" d="M1200 420h10v10h-10z"/><path fill="#1b97ff" d="M1210 420h10v10h-10z"/><path fill="#3495ff" d="M1220 420h10v10h-10z"/><path fill="#4e92ff" d="M1230 420h10v10h-10z"/><path fill="#6a8fff" d="M1240 420h10v10h-10z"/><path fill="#888bff" d="M1250 420h10v10h-10z"/><path fill="#a688ff" d="M1260 420h10v10h-10z"/><path fill="#c785ff" d="M1270 420h10v10h-10z"/><path fill="#ea81ff" d="M1280 420h10v10h-10z"/><path fill="#ff75f0" d="M1290 420h10v10h-10z"/><path fill="#ff63d2" d="M1300 420h10v10h-10z"/><path fill="#ff54b9" d="M1310 420h10v10h-10z"/><path fill="#ff47a4" d="M1320 420h10v10h-10z"/><path fill="#ff3d92" d="M1330 420h10v10h-10z"/><path fill="#ff3483" d="M1340 420h10v10h-10z"/><path fill="#ff2c76" d="M1350 420h10v10h-10z"/><path fill="#ff256a" d="M1360 420h10v10h-10z"/><path fill="#ff1e60" d="M1370 420h10v10h-10z"/><path fill="#ff1957" d="M1380 420h10v10h-10z"/><path fill="#ff144f" d="M1390 420h10v10h-10z"/><path fill="#ff1048" d="M1400 420h10v10h-10z"/><path fill="#ff0c41" d="M1410 420h10v10h-10z"/><path fill="#ff083b" d="M1420 420h10v10h-10z"/><path fill="#ff0535" d="M1430 420h10v10h-10z"/><path fill="#fe0230" d="M1440 420h10v10h-10z"/><path fill="#fc002b" d="M1450 420h10v10h-10z"/><path fill="#f90026" d="M1460 420h10v10h-10z"/><path fill="#f30022" d="M1470 420h10v10h-10z"/><path fill="#ec001d" d="M1480 420h10v10h-10z"/><path fill="#e30019" d="M1490 420h10v10h-10z"/><path fill="#d90015" d="M1500 420h10v10h-10z"/><path fill="#cd0012" d="M1510 420h10v10h-10z"/><path fill="#bf000f" d="M1520 420h10v10h-10z"/><path fill="#b0000c" d="M1530 420h10v10h-10z"/><path fill="#9f0009" d="M1540 420h10v10h-10z"/><path fill="#990007" d="M1550 420h10v10h-10z"/><path fill="#990006" d="M1560 420h10v10h-10z"/><path fill="#0096ff" d="M1140 430h10v10h-10z"/><path fill="#0094ff" d="M1150 430h10v10h-10z"/><path fill="#0092ff" d="M1160 430h10v10h-10z"/><path fill="#008fff" d="M1170 430h10v10h-10z"/><path fill="#008dff" d="M1180 430h10v10h-10z"/><path fill="#008aff" d="M1190 430h10v10h-10z"/><path fill="#0b87ff" d="M1200 430h10v10h-10z"/><path fill="#2284ff" d="M1210 430h10v10h-10z"/><path fill="#3a81ff" d="M1220 430h10v10h-10z"/><path fill="#537eff" d="M1230 430h10v10h-10z"/><path fill="#6e7aff" d="M1240 430h10v10h-10z"/><path fill="#8b77ff" d="M1250 430h10v10h-10z"/><path fill="#a873ff" d="M1260 430h10v10h-10z"/><path fill="#c86fff" d="M1270 430h10v10h-10z"/><path fill="#e96bff" d="M1280 430h10v10h-10z"/><path fill="#ff61f2" d="M1290 430h10v10h-10z"/><path fill="#ff51d5" d="M1300 430h10v10h-10z"/><path fill="#ff44bc" d="M1310 430h10v10h-10z"/><path fill="#ff39a8" d="M1320 430h10v10h-10z"/><path fill="#ff3096" d="M1330 430h10v10h-10z"/><path fill="#ff2887" d="M1340 430h10v10h-10z"/><path fill="#ff217a" d="M1350 430h10v10h-10z"/><path fill="#ff1b6e" d="M1360 430h10v10h-10z"/><path fill="#ff1564" d="M1370 430h10v10h-10z"/><path fill="#ff105b" d="M1380 430h10v10h-10z"/><path fill="#ff0c53" d="M1390 430h10v10h-10z"/><path fill="#ff084b" d="M1400 430h10v10h-10z"/><path fill="#ff0445" d="M1410 430h10v10h-10z"/><path fill="#ff013f" d="M1420 430h10v10h-10z"/><path fill="#ff0039" d="M1430 430h10v10h-10z"/><path fill="#fe0034" d="M1440 430h10v10h-10z"/><path fill="#fc002f" d="M1450 430h10v10h-10z"/><path fill="#f9002a" d="M1460 430h10v10h-10z"/><path fill="#f30025" d="M1470 430h10v10h-10z"/><path fill="#ec0020" d="M1480 430h10v10h-10z"/><path fill="#e3001c" d="M1490 430h10v10h-10z"/><path fill="#d90018" d="M1500 430h10v10h-10z"/><path fill="#cd0014" d="M1510 430h10v10h-10z"/><path fill="#bf0011" d="M1520 430h10v10h-10z"/><path fill="#b0000e" d="M1530 430h10v10h-10z"/><path fill="#9f000b" d="M1540 430h10v10h-10z"/><path fill="#990009" d="M1550 430h10v10h-10z"/><path fill="#990007" d="M1560 430h10v10h-10z"/><path fill="#0086ff" d="M1140 440h10v10h-10z"/><path fill="#0084ff" d="M1150 440h10v10h-10z"/><path fill="#0081ff" d="M1160 440h10v10h-10z"/><path fill="#007eff" d="M1170 440h10v10h-10z"/><path fill="#007cff" d="M1180 440h10v10h-10z"/><path fill="#0079ff" d="M1190 440h10v10h-10z"/><path fill="#1176ff" d="M1200 440h10v10h-10z"/><path fill="#2872ff" d="M1210 440h10v10h-10z"/><path fill="#3f6fff" d="M1220 440h10v10h-10z"/><path fill="#586bff" d="M1230 440h10v10h-10z"/><path fill="#7268ff" d="M1240 440h10v10h-10z"/><path fill="#8d64ff" d="M1250 440h10v10h-10z"/><path fill="#aa60ff" d="M1260 440h10v10h-10z"/><path fill="#c85bff" d="M1270 440h10v10h-10z"/><path fill="#e857ff" d="M1280 440h10v10h-10z"/><path fill="#ff4ef5" d="M1290 440h10v10h-10z"/><path fill="#ff41d8" d="M1300 440h10v10h-10z"/><path fill="#ff36c0" d="M1310 440h10v10h-10z"/><path fill="#ff2cab" d="M1320 440h10v10h-10z"/><path fill="#ff249a" d="M1330 440h10v10h-10z"/><path fill="#ff1d8b" d="M1340 440h10v10h-10z"/><path fill="#ff177e" d="M1350 440h10v10h-10z"/><path fill="#ff1172" d="M1360 440h10v10h-10z"/><path fill="#ff0c68" d="M1370 440h10v10h-10z"/><path fill="#ff085f" d="M1380 440h10v10h-10z"/><path fill="#ff0457" d="M1390 440h10v10h-10z"/><path fill="#ff014f" d="M1400 440h10v10h-10z"/><path fill="#ff0049" d="M1410 440h10v10h-10z"/><path fill="#ff0042" d="M1420 440h10v10h-10z"/><path fill="#ff003d" d="M1430 440h10v10h-10z"/><path fill="#fe0037" d="M1440 440h10v10h-10z"/><path fill="#fc0032" d="M1450 440h10v10h-10z"/><path fill="#f9002d" d="M1460 440h10v10h-10z"/><path fill="#f30028" d="M1470 440h10v10h-10z"/><path fill="#ec0023" d="M1480 440h10v10h-10z"/><path fill="#e3001f" d="M1490 440h10v10h-10z"/><path fill="#d9001b" d="M1500 440h10v10h-10z"/><path fill="#cd0017" d="M1510 440h10v10h-10z"/><path fill="#bf0013" d="M1520 440h10v10h-10z"/><path fill="#b00010" d="M1530 440h10v10h-10z"/><path fill="#9f000c" d="M1540 440h10v10h-10z"/><path fill="#99000a" d="M1550 440h10v10h-10z"/><path fill="#990009" d="M1560 440h10v10h-10z"/><path fill="#0077ff" d="M1140 450h10v10h-10z"/><path fill="#0075ff" d="M1150 450h10v10h-10z"/><path fill="#0072ff" d="M1160 450h10v10h-10z"/><path fill="#006fff" d="M1170 450h10v10h-10z"/><path fill="#006cff" d="M1180 450h10v10h-10z"/><path fill="#0369ff" d="M1190 450h10v10h-10z"/><path fill="#1865ff" d="M1200 450h10v10h-10z"/><path fill="#2e62ff" d="M1210 450h10v10h-10z"/><path fill="#455eff" d="M1220 450h10v10h-10z"/><path fill="#5d5aff" d="M1230 450h10v10h-10z"/><path fill="#7656ff" d="M1240 450h10v10h-10z"/><path fill="#9052ff" d="M1250 450h10v10h-10z"/><path fill="#ac4eff" d="M1260 450h10v10h-10z"/><path fill="#c949ff" d="M1270 450h10v10h-10z"/><path fill="#e744ff" d="M1280 450h10v10h-10z"/><path fill="#ff3df7" d="M1290 450h10v10h-10z"/><path fill="#ff31db" d="M1300 450h10v10h-10z"/><path fill="#ff28c3" d="M1310 450h10v10h-10z"/><path fill="#ff1faf" d="M1320 450h10v10h-10z"/><path fill="#ff189e" d="M1330 450h10v10h-10z"/><path fill="#ff128f" d="M1340 450h10v10h-10z"/><path fill="#ff0d82" d="M1350 450h10v10h-10z"/><path fill="#ff0876" d="M1360 450h10v10h-10z"/><path fill="#ff046c" d="M1370 450h10v10h-10z"/><path fill="#ff0063" d="M1380 450h10v10h-10z"/><path fill="#ff005a" d="M1390 450h10v10h-10z"/><path fill="#ff0053" d="M1400 450h10v10h-10z"/><path fill="#ff004c" d="M1410 450h10v10h-10z"/><path fill="#ff0046" d="M1420 450h10v10h-10z"/><path fill="#ff0040" d="M1430 450h10v10h-10z"/><path fill="#fe003b" d="M1440 450h10v10h-10z"/><path fill="#fc0035" d="M1450 450h10v10h-10z"/><path fill="#f90030" d="M1460 450h10v10h-10z"/><path fill="#f3002b" d="M1470 450h10v10h-10z"/><path fill="#ec0026" d="M1480 450h10v10h-10z"/><path fill="#e30022" d="M1490 450h10v10h-10z"/><path fill="#d9001d" d="M1500 450h10v10h-10z"/><path fill="#cd0019" d="M1510 450h10v10h-10z"/><path fill="#bf0015" d="M1520 450h10v10h-10z"/><path fill="#b00011" d="M1530 450h10v10h-10z"/><path fill="#9f000e" d="M1540 450h10v10h-10z"/><path fill="#99000c" d="M1550 450h10v10h-10z"/><path fill="#99000b" d="M1560 450h10v10h-10z"/><path fill="#0069ff" d="M1140 460h10v10h-10z"/><path fill="#0066ff" d="M1150 460h10v10h-10z"/><path fill="#0063ff" d="M1160 460h10v10h-10z"/><path fill="#0060ff" d="M1170 460h10v10h-10z"/><path fill="#005dff" d="M1180 460h10v10h-10z"/><path fill="#0a5aff" d="M1190 460h10v10h-10z"/><path fill="#1e56ff" d="M1200 460h10v10h-10z"/><path fill="#3352ff" d="M1210 460h10v10h-10z"/><path fill="#494eff" d="M1220 460h10v10h-10z"/><path fill="#614aff" d="M1230 460h10v10h-10z"/><path fill="#7946ff" d="M1240 460h10v10h-10z"/><path fill="#9242ff" d="M1250 460h10v10h-10z"/><path fill="#ad3dff" d="M1260 460h10v10h-10z"/><path fill="#c938ff" d="M1270 460h10v10h-10z"/><path fill="#e633ff" d="M1280 460h10v10h-10z"/><path fill="#ff2df9" d="M1290 460h10v10h-10z"/><path fill="#ff23dd" d="M1300 460h10v10h-10z"/><path fill="#ff1ac6" d="M1310 460h10v10h-10z"/><path fill="#ff13b2" d="M1320 460h10v10h-10z"/><path fill="#ff0da1" d="M1330 460h10v10h-10z"/><path fill="#ff0892" d="M1340 460h10v10h-10z"/><path fill="#ff0385" d="M1350 460h10v10h-10z"/><path fill="#ff007a" d="M1360 460h10v10h-10z"/><path fill="#ff0070" d="M1370 460h10v10h-10z"/><path fill="#ff0066" d="M1380 460h10v10h-10z"/><path fill="#ff005e" d="M1390 460h10v10h-10z"/><path fill="#ff0056" d="M1400 460h10v10h-10z"/><path fill="#ff0050" d="M1410 460h10v10h-10z"/><path fill="#ff0049" d="M1420 460h10v10h-10z"/><path fill="#ff0044" d="M1430 460h10v10h-10z"/><path fill="#fe003e" d="M1440 460h10v10h-10z"/><path fill="#fc0039" d="M1450 460h10v10h-10z"/><path fill="#f90033" d="M1460 460h10v10h-10z"/><path fill="#f3002e" d="M1470 460h10v10h-10z"/><path fill="#ec0029" d="M1480 460h10v10h-10z"/><path fill="#e30024" d="M1490 460h10v10h-10z"/><path fill="#d90020" d="M1500 460h10v10h-10z"/><path fill="#cd001b" d="M1510 460h10v10h-10z"/><path fill="#bf0017" d="M1520 460h10v10h-10z"/><path fill="#b00013" d="M1530 460h10v10h-10z"/><path fill="#9f0010" d="M1540 460h10v10h-10z"/><path fill="#99000e" d="M1550 460h10v10h-10z"/><path fill="#99000c" d="M1560 460h10v10h-10z"/><path fill="#005cff" d="M1140 470h10v10h-10z"/><path fill="#0059ff" d="M1150 470h10v10h-10z"/><path fill="#0056ff" d="M1160 470h10v10h-10z"/><path fill="#0052ff" d="M1170 470h10v10h-10z"/><path fill="#004fff" d="M1180 470h10v10h-10z"/><path fill="#104bff" d="M1190 470h10v10h-10z"/><path fill="#2448ff" d="M1200 470h10v10h-10z"/><path fill="#3844ff" d="M1210 470h10v10h-10z"/><path fill="#4e40ff" d="M1220 470h10v10h-10z"/><path fill="#643cff" d="M1230 470h10v10h-10z"/><path fill="#7c37ff" d="M1240 470h10v10h-10z"/><path fill="#9432ff" d="M1250 470h10v10h-10z"/><path fill="#ae2eff" d="M1260 470h10v10h-10z"/><path fill="#c929ff" d="M1270 470h10v10h-10z"/><path fill="#e623ff" d="M1280 470h10v10h-10z"/><path fill="#ff1dfb" d="M1290 470h10v10h-10z"/><path fill="#ff15e0" d="M1300 470h10v10h-10z"/><path fill="#ff0ec9" d="M1310 470h10v10h-10z"/><path fill="#ff08b5" d="M1320 470h10v10h-10z"/><path fill="#ff03a5" d="M1330 470h10v10h-10z"/><path fill="#ff0096" d="M1340 470h10v10h-10z"/><path fill="#ff0089" d="M1350 470h10v10h-10z"/><path fill="#ff007d" d="M1360 470h10v10h-10z"/><path fill="#ff0073" d="M1370 470h10v10h-10z"/><path fill="#ff006a" d="M1380 470h10v10h-10z"/><path fill="#ff0062" d="M1390 470h10v10h-10z"/><path fill="#ff005a" d="M1400 470h10v10h-10z"/><path fill="#ff0053" d="M1410 470h10v10h-10z"/><path fill="#ff004d" d="M1420 470h10v10h-10z"/><path fill="#ff0047" d="M1430 470h10v10h-10z"/><path fill="#fe0041" d="M1440 470h10v10h-10z"/><path fill="#fc003c" d="M1450 470h10v10h-10z"/><path fill="#f90036" d="M1460 470h10v10h-10z"/><path fill="#f30031" d="M1470 470h10v10h-10z"/><path fill="#ec002c" d="M1480 470h10v10h-10z"/><path fill="#e30027" d="M1490 470h10v10h-10z"/><path fill="#d90022" d="M1500 470h10v10h-10z"/><path fill="#cd001e" d="M1510 470h10v10h-10z"/><path fill="#bf0019" d="M1520 470h10v10h-10z"/><path fill="#b00015" d="M1530 470h10v10h-10z"/><path fill="#9f0012" d="M1540 470h10v10h-10z"/><path fill="#99000f" d="M1550 470h10v10h-10z"/><path fill="#99000e" d="M1560 470h10v10h-10z"/><path fill="#0050ff" d="M1140 480h10v10h-10z"/><path fill="#004cff" d="M1150 480h10v10h-10z"/><path fill="#0049ff" d="M1160 480h10v10h-10z"/><path fill="#0045ff" d="M1170 480h10v10h-10z"/><path fill="#0342ff" d="M1180 480h10v10h-10z"/><path fill="#153eff" d="M1190 480h10v10h-10z"/><path fill="#293aff" d="M1200 480h10v10h-10z"/><path fill="#3d36ff" d="M1210 480h10v10h-10z"/><path fill="#5232ff" d="M1220 480h10v10h-10z"/><path fill="#682eff" d="M1230 480h10v10h-10z"/><path fill="#7f29ff" d="M1240 480h10v10h-10z"/><path fill="#9724ff" d="M1250 480h10v10h-10z"/><path fill="#af1fff" d="M1260 480h10v10h-10z"/><path fill="#ca1aff" d="M1270 480h10v10h-10z"/><path fill="#e515ff" d="M1280 480h10v10h-10z"/><path fill="#ff0ffd" d="M1290 480h10v10h-10z"/><path fill="#ff08e2" d="M1300 480h10v10h-10z"/><path fill="#ff02cc" d="M1310 480h10v10h-10z"/><path fill="#ff00b9" d="M1320 480h10v10h-10z"/><path fill="#ff00a8" d="M1330 480h10v10h-10z"/><path fill="#ff0099" d="M1340 480h10v10h-10z"/><path fill="#ff008c" d="M1350 480h10v10h-10z"/><path fill="#ff0081" d="M1360 480h10v10h-10z"/><path fill="#ff0077" d="M1370 480h10v10h-10z"/><path fill="#ff006d" d="M1380 480h10v10h-10z"/><path fill="#ff0065" d="M1390 480h10v10h-10z"/><path fill="#ff005d" d="M1400 480h10v10h-10z"/><path fill="#ff0056" d="M1410 480h10v10h-10z"/><path fill="#ff0050" d="M1420 480h10v10h-10z"/><path fill="#ff004a" d="M1430 480h10v10h-10z"/><path fill="#fe0044" d="M1440 480h10v10h-10z"/><path fill="#fc003f" d="M1450 480h10v10h-10z"/><path fill="#f90039" d="M1460 480h10v10h-10z"/><path fill="#f30034" d="M1470 480h10v10h-10z"/><path fill="#ec002f" d="M1480 480h10v10h-10z"/><path fill="#e3002a" d="M1490 480h10v10h-10z"/><path fill="#d90025" d="M1500 480h10v10h-10z"/><path fill="#cd0020" d="M1510 480h10v10h-10z"/><path fill="#bf001b" d="M1520 480h10v10h-10z"/><path fill="#b00017" d="M1530 480h10v10h-10z"/><path fill="#9f0013" d="M1540 480h10v10h-10z"/><path fill="#990011" d="M1550 480h10v10h-10z"/><path fill="#99000f" d="M1560 480h10v10h-10z"/><path fill="#0044ff" d="M1140 490h10v10h-10z"/><path fill="#0040ff" d="M1150 490h10v10h-10z"/><path fill="#003dff" d="M1160 490h10v10h-10z"/><path fill="#0039ff" d="M1170 490h10v10h-10z"/><path fill="#0936ff" d="M1180 490h10v10h-10z"/><path fill="#1b32ff" d="M1190 490h10v10h-10z"/><path fill="#2e2eff" d="M1200 490h10v10h-10z"/><path fill="#4129ff" d="M1210 490h10v10h-10z"/><path fill="#5625ff" d="M1220 490h10v10h-10z"/><path fill="#6b21ff" d="M1230 490h10v10h-10z"/><path fill="#811cff" d="M1240 490h10v10h-10z"/><path fill="#9917ff" d="M1250 490h10v10h-10z"/><path fill="#b112ff" d="M1260 490h10v10h-10z"/><path fill="#ca0dff" d="M1270 490h10v10h-10z"/><path fill="#e407ff" d="M1280 490h10v10h-10z"/><path fill="#ff01fe" d="M1290 490h10v10h-10z"/><path fill="#ff00e4" d="M1300 490h10v10h-10z"/><path fill="#ff00ce" d="M1310 490h10v10h-10z"/><path fill="#ff00bb" d="M1320 490h10v10h-10z"/><path fill="#ff00ab" d="M1330 490h10v10h-10z"/><path fill="#ff009c" d="M1340 490h10v10h-10z"/><path fill="#ff0090" d="M1350 490h10v10h-10z"/><path fill="#ff0084" d="M1360 490h10v10h-10z"/><path fill="#ff007a" d="M1370 490h10v10h-10z"/><path fill="#ff0071" d="M1380 490h10v10h-10z"/><path fill="#ff0068" d="M1390 490h10v10h-10z"/><path fill="#ff0060" d="M1400 490h10v10h-10z"/><path fill="#ff0059" d="M1410 490h10v10h-10z"/><path fill="#ff0053" d="M1420 490h10v10h-10z"/><path fill="#ff004d" d="M1430 490h10v10h-10z"/><path fill="#fe0047" d="M1440 490h10v10h-10z"/><path fill="#fc0042" d="M1450 490h10v10h-10z"/><path fill="#f9003c" d="M1460 490h10v10h-10z"/><path fill="#f30037" d="M1470 490h10v10h-10z"/><path fill="#ec0031" d="M1480 490h10v10h-10z"/><path fill="#e3002c" d="M1490 490h10v10h-10z"/><path fill="#d90027" d="M1500 490h10v10h-10z"/><path fill="#cd0022" d="M1510 490h10v10h-10z"/><path fill="#bf001d" d="M1520 490h10v10h-10z"/><path fill="#b00019" d="M1530 490h10v10h-10z"/><path fill="#9f0015" d="M1540 490h10v10h-10z"/><path fill="#990012" d="M1550 490h10v10h-10z"/><path fill="#990011" d="M1560 490h10v10h-10z"/><path fill="#0038ff" d="M1140 500h10v10h-10z"/><path fill="#0035ff" d="M1150 500h10v10h-10z"/><path fill="#0031ff" d="M1160 500h10v10h-10z"/><path fill="#002eff" d="M1170 500h10v10h-10z"/><path fill="#0e2aff" d="M1180 500h10v10h-10z"/><path fill="#2026ff" d="M1190 500h10v10h-10z"/><path fill="#3322ff" d="M1200 500h10v10h-10z"/><path fill="#461dff" d="M1210 500h10v10h-10z"/><path fill="#5a19ff" d="M1220 500h10v10h-10z"/><path fill="#6e14ff" d="M1230 500h10v10h-10z"/><path fill="#8410ff" d="M1240 500h10v10h-10z"/><path fill="#9a0bff" d="M1250 500h10v10h-10z"/><path fill="#b205ff" d="M1260 500h10v10h-10z"/><path fill="#ca00ff" d="M1270 500h10v10h-10z"/><path fill="#e400ff" d="M1280 500h10v10h-10z"/><path fill="#fe00ff" d="M1290 500h10v10h-10z"/><path fill="#ff00e7" d="M1300 500h10v10h-10z"/><path fill="#ff00d1" d="M1310 500h10v10h-10z"/><path fill="#ff00be" d="M1320 500h10v10h-10z"/><path fill="#ff00ae" d="M1330 500h10v10h-10z"/><path fill="#ff009f" d="M1340 500h10v10h-10z"/><path fill="#ff0093" d="M1350 500h10v10h-10z"/><path fill="#ff0087" d="M1360 500h10v10h-10z"/><path fill="#ff007d" d="M1370 500h10v10h-10z"/><path fill="#ff0074" d="M1380 500h10v10h-10z"/><path fill="#ff006b" d="M1390 500h10v10h-10z"/><path fill="#ff0064" d="M1400 500h10v10h-10z"/><path fill="#ff005d" d="M1410 500h10v10h-10z"/><path fill="#ff0056" d="M1420 500h10v10h-10z"/><path fill="#ff0050" d="M1430 500h10v10h-10z"/><path fill="#fe004a" d="M1440 500h10v10h-10z"/><path fill="#fc0045" d="M1450 500h10v10h-10z"/><path fill="#f9003f" d="M1460 500h10v10h-10z"/><path fill="#f30039" d="M1470 500h10v10h-10z"/><path fill="#ec0034" d="M1480 500h10v10h-10z"/><path fill="#e3002e" d="M1490 500h10v10h-10z"/><path fill="#d90029" d="M1500 500h10v10h-10z"/><path fill="#cd0024" d="M1510 500h10v10h-10z"/><path fill="#bf001f" d="M1520 500h10v10h-10z"/><path fill="#b0001b" d="M1530 500h10v10h-10z"/><path fill="#9f0016" d="M1540 500h10v10h-10z"/><path fill="#990014" d="M1550 500h10v10h-10z"/><path fill="#990012" d="M1560 500h10v10h-10z"/><path fill="#002eff" d="M1140 510h10v10h-10z"/><path fill="#002aff" d="M1150 510h10v10h-10z"/><path fill="#0026ff" d="M1160 510h10v10h-10z"/><path fill="#0323ff" d="M1170 510h10v10h-10z"/><path fill="#141fff" d="M1180 510h10v10h-10z"/><path fill="#251bff" d="M1190 510h10v10h-10z"/><path fill="#3716ff" d="M1200 510h10v10h-10z"/><path fill="#4a12ff" d="M1210 510h10v10h-10z"/><path fill="#5d0eff" d="M1220 510h10v10h-10z"/><path fill="#7109ff" d="M1230 510h10v10h-10z"/><path fill="#8604ff" d="M1240 510h10v10h-10z"/><path fill="#9c00ff" d="M1250 510h10v10h-10z"/><path fill="#b300ff" d="M1260 510h10v10h-10z"/><path fill="#ca00ff" d="M1270 510h10v10h-10z"/><path fill="#e300ff" d="M1280 510h10v10h-10z"/><path fill="#fd00ff" d="M1290 510h10v10h-10z"/><path fill="#ff00e9" d="M1300 510h10v10h-10z"/><path fill="#ff00d3" d="M1310 510h10v10h-10z"/><path fill="#ff00c1" d="M1320 510h10v10h-10z"/><path fill="#ff00b1" d="M1330 510h10v10h-10z"/><path fill="#ff00a2" d="M1340 510h10v10h-10z"/><path fill="#ff0096" d="M1350 510h10v10h-10z"/><path fill="#ff008a" d="M1360 510h10v10h-10z"/><path fill="#ff0080" d="M1370 510h10v10h-10z"/><path fill="#ff0077" d="M1380 510h10v10h-10z"/><path fill="#ff006e" d="M1390 510h10v10h-10z"/><path fill="#ff0067" d="M1400 510h10v10h-10z"/><path fill="#ff0060" d="M1410 510h10v10h-10z"/><path fill="#ff0059" d="M1420 510h10v10h-10z"/><path fill="#ff0053" d="M1430 510h10v10h-10z"/><path fill="#fe004d" d="M1440 510h10v10h-10z"/><path fill="#fc0048" d="M1450 510h10v10h-10z"/><path fill="#f90042" d="M1460 510h10v10h-10z"/><path fill="#f3003c" d="M1470 510h10v10h-10z"/><path fill="#ec0036" d="M1480 510h10v10h-10z"/><path fill="#e30031" d="M1490 510h10v10h-10z"/><path fill="#d9002b" d="M1500 510h10v10h-10z"/><path fill="#cd0026" d="M1510 510h10v10h-10z"/><path fill="#bf0021" d="M1520 510h10v10h-10z"/><path fill="#b0001c" d="M1530 510h10v10h-10z"/><path fill="#9f0018" d="M1540 510h10v10h-10z"/><path fill="#990015" d="M1550 510h10v10h-10z"/><path fill="#990014" d="M1560 510h10v10h-10z"/><path fill="#0023ff" d="M1140 520h10v10h-10z"/><path fill="#0020ff" d="M1150 520h10v10h-10z"/><path fill="#001cff" d="M1160 520h10v10h-10z"/><path fill="#0818ff" d="M1170 520h10v10h-10z"/><path fill="#1814ff" d="M1180 520h10v10h-10z"/><path fill="#2a10ff" d="M1190 520h10v10h-10z"/><path fill="#3b0cff" d="M1200 520h10v10h-10z"/><path fill="#4d07ff" d="M1210 520h10v10h-10z"/><path fill="#6003ff" d="M1220 520h10v10h-10z"/><path fill="#7400ff" d="M1230 520h10v10h-10z"/><path fill="#8800ff" d="M1240 520h10v10h-10z"/><path fill="#9e00ff" d="M1250 520h10v10h-10z"/><path fill="#b400ff" d="M1260 520h10v10h-10z"/><path fill="#cb00ff" d="M1270 520h10v10h-10z"/><path fill="#e200ff" d="M1280 520h10v10h-10z"/><path fill="#fb00ff" d="M1290 520h10v10h-10z"/><path fill="#ff00ea" d="M1300 520h10v10h-10z"/><path fill="#ff00d6" d="M1310 520h10v10h-10z"/><path fill="#ff00c3" d="M1320 520h10v10h-10z"/><path fill="#ff00b3" d="M1330 520h10v10h-10z"/><path fill="#ff00a5" d="M1340 520h10v10h-10z"/><path fill="#ff0099" d="M1350 520h10v10h-10z"/><path fill="#ff008d" d="M1360 520h10v10h-10z"/><path fill="#ff0083" d="M1370 520h10v10h-10z"/><path fill="#ff007a" d="M1380 520h10v10h-10z"/><path fill="#ff0071" d="M1390 520h10v10h-10z"/><path fill="#ff006a" d="M1400 520h10v10h-10z"/><path fill="#ff0063" d="M1410 520h10v10h-10z"/><path fill="#ff005c" d="M1420 520h10v10h-10z"/><path fill="#ff0056" d="M1430 520h10v10h-10z"/><path fill="#fe0050" d="M1440 520h10v10h-10z"/><path fill="#fc004a" d="M1450 520h10v10h-10z"/><path fill="#f90044" d="M1460 520h10v10h-10z"/><path fill="#f3003f" d="M1470 520h10v10h-10z"/><path fill="#ec0039" d="M1480 520h10v10h-10z"/><path fill="#e30033" d="M1490 520h10v10h-10z"/><path fill="#d9002e" d="M1500 520h10v10h-10z"/><path fill="#cd0028" d="M1510 520h10v10h-10z"/><path fill="#bf0023" d="M1520 520h10v10h-10z"/><path fill="#b0001e" d="M1530 520h10v10h-10z"/><path fill="#9f0019" d="M1540 520h10v10h-10z"/><path fill="#990017" d="M1550 520h10v10h-10z"/><path fill="#990015" d="M1560 520h10v10h-10z"/><path fill="#001aff" d="M1140 530h10v10h-10z"/><path fill="#0016ff" d="M1150 530h10v10h-10z"/><path fill="#0012ff" d="M1160 530h10v10h-10z"/><path fill="#0d0eff" d="M1170 530h10v10h-10z"/><path fill="#1d0aff" d="M1180 530h10v10h-10z"/><path fill="#2e06ff" d="M1190 530h10v10h-10z"/><path fill="#3f02ff" d="M1200 530h10v10h-10z"/><path fill="#5100ff" d="M1210 530h10v10h-10z"/><path fill="#6300ff" d="M1220 530h10v10h-10z"/><path fill="#7700ff" d="M1230 530h10v10h-10z"/><path fill="#8b00ff" d="M1240 530h10v10h-10z"/><path fill="#9f00ff" d="M1250 530h10v10h-10z"/><path fill="#b500ff" d="M1260 530h10v10h-10z"/><path fill="#cb00ff" d="M1270 530h10v10h-10z"/><path fill="#e200ff" d="M1280 530h10v10h-10z"/><path fill="#fa00ff" d="M1290 530h10v10h-10z"/><path fill="#ff00ec" d="M1300 530h10v10h-10z"/><path fill="#ff00d8" d="M1310 530h10v10h-10z"/><path fill="#ff00c6" d="M1320 530h10v10h-10z"/><path fill="#ff00b6" d="M1330 530h10v10h-10z"/><path fill="#ff00a8" d="M1340 530h10v10h-10z"/><path fill="#ff009b" d="M1350 530h10v10h-10z"/><path fill="#ff0090" d="M1360 530h10v10h-10z"/><path fill="#ff0086" d="M1370 530h10v10h-10z"/><path fill="#ff007d" d="M1380 530h10v10h-10z"/><path fill="#ff0074" d="M1390 530h10v10h-10z"/><path fill="#ff006d" d="M1400 530h10v10h-10z"/><path fill="#ff0065" d="M1410 530h10v10h-10z"/><path fill="#ff005f" d="M1420 530h10v10h-10z"/><path fill="#ff0059" d="M1430 530h10v10h-10z"/><path fill="#fe0053" d="M1440 530h10v10h-10z"/><path fill="#fc004d" d="M1450 530h10v10h-10z"/><path fill="#f90047" d="M1460 530h10v10h-10z"/><path fill="#f30041" d="M1470 530h10v10h-10z"/><path fill="#ec003b" d="M1480 530h10v10h-10z"/><path fill="#e30036" d="M1490 530h10v10h-10z"/><path fill="#d90030" d="M1500 530h10v10h-10z"/><path fill="#cd002a" d="M1510 530h10v10h-10z"/><path fill="#bf0025" d="M1520 530h10v10h-10z"/><path fill="#b00020" d="M1530 530h10v10h-10z"/><path fill="#9f001b" d="M1540 530h10v10h-10z"/><path fill="#990018" d="M1550 530h10v10h-10z"/><path fill="#990017" d="M1560 530h10v10h-10z"/><path fill="#0011ff" d="M1140 540h10v10h-10z"/><path fill="#000dff" d="M1150 540h10v10h-10z"/><path fill="#0309ff" d="M1160 540h10v10h-10z"/><path fill="#1205ff" d="M1170 540h10v10h-10z"/><path fill="#2201ff" d="M1180 540h10v10h-10z"/><path fill="#3200ff" d="M1190 540h10v10h-10z"/><path fill="#4300ff" d="M1200 540h10v10h-10z"/><path fill="#5400ff" d="M1210 540h10v10h-10z"/><path fill="#6600ff" d="M1220 540h10v10h-10z"/><path fill="#7900ff" d="M1230 540h10v10h-10z"/><path fill="#8c00ff" d="M1240 540h10v10h-10z"/><path fill="#a100ff" d="M1250 540h10v10h-10z"/><path fill="#b500ff" d="M1260 540h10v10h-10z"/><path fill="#cb00ff" d="M1270 540h10v10h-10z"/><path fill="#e200ff" d="M1280 540h10v10h-10z"/><path fill="#f900ff" d="M1290 540h10v10h-10z"/><path fill="#ff00ee" d="M1300 540h10v10h-10z"/><path fill="#ff00da" d="M1310 540h10v10h-10z"/><path fill="#ff00c8" d="M1320 540h10v10h-10z"/><path fill="#ff00b9" d="M1330 540h10v10h-10z"/><path fill="#ff00ab" d="M1340 540h10v10h-10z"/><path fill="#ff009e" d="M1350 540h10v10h-10z"/><path fill="#ff0093" d="M1360 540h10v10h-10z"/><path fill="#ff0089" d="M1370 540h10v10h-10z"/><path fill="#ff0080" d="M1380 540h10v10h-10z"/><path fill="#ff0077" d="M1390 540h10v10h-10z"/><path fill="#ff006f" d="M1400 540h10v10h-10z"/><path fill="#ff0068" d="M1410 540h10v10h-10z"/><path fill="#ff0062" d="M1420 540h10v10h-10z"/><path fill="#ff005b" d="M1430 540h10v10h-10z"/><path fill="#fe0056" d="M1440 540h10v10h-10z"/><path fill="#fc0050" d="M1450 540h10v10h-10z"/><path fill="#f9004a" d="M1460 540h10v10h-10z"/><path fill="#f30044" d="M1470 540h10v10h-10z"/><path fill="#ec003e" d="M1480 540h10v10h-10z"/><path fill="#e30038" d="M1490 540h10v10h-10z"/><path fill="#d90032" d="M1500 540h10v10h-10z"/><path fill="#cd002c" d="M1510 540h10v10h-10z"/><path fill="#bf0027" d="M1520 540h10v10h-10z"/><path fill="#b00021" d="M1530 540h10v10h-10z"/><path fill="#9f001c" d="M1540 540h10v10h-10z"/><path fill="#99001a" d="M1550 540h10v10h-10z"/><path fill="#990018" d="M1560 540h10v10h-10z"/><path fill="#0008ff" d="M1140 550h10v10h-10z"/><path fill="#0004ff" d="M1150 550h10v10h-10z"/><path fill="#0700ff" d="M1160 550h10v10h-10z"/><path fill="#1600ff" d="M1170 550h10v10h-10z"/><path fill="#2600ff" d="M1180 550h10v10h-10z"/><path fill="#3600ff" d="M1190 550h10v10h-10z"/><path fill="#4600ff" d="M1200 550h10v10h-10z"/><path fill="#5800ff" d="M1210 550h10v10h-10z"/><path fill="#6900ff" d="M1220 550h10v10h-10z"/><path fill="#7b00ff" d="M1230 550h10v10h-10z"/><path fill="#8e00ff" d="M1240 550h10v10h-10z"/><path fill="#a200ff" d="M1250 550h10v10h-10z"/><path fill="#b600ff" d="M1260 550h10v10h-10z"/><path fill="#cb00ff" d="M1270 550h10v10h-10z"/><path fill="#e100ff" d="M1280 550h10v10h-10z"/><path fill="#f800ff" d="M1290 550h10v10h-10z"/><path fill="#ff00f0" d="M1300 550h10v10h-10z"/><path fill="#ff00dc" d="M1310 550h10v10h-10z"/><path fill="#ff00ca" d="M1320 550h10v10h-10z"/><path fill="#ff00bb" d="M1330 550h10v10h-10z"/><path fill="#ff00ad" d="M1340 550h10v10h-10z"/><path fill="#ff00a1" d="M1350 550h10v10h-10z"/><path fill="#ff0096" d="M1360 550h10v10h-10z"/><path fill="#ff008b" d="M1370 550h10v10h-10z"/><path fill="#ff0082" d="M1380 550h10v10h-10z"/><path fill="#ff007a" d="M1390 550h10v10h-10z"/><path fill="#ff0072" d="M1400 550h10v10h-10z"/><path fill="#ff006b" d="M1410 550h10v10h-10z"/><path fill="#ff0064" d="M1420 550h10v10h-10z"/><path fill="#ff005e" d="M1430 550h10v10h-10z"/><path fill="#fe0058" d="M1440 550h10v10h-10z"/><path fill="#fc0052" d="M1450 550h10v10h-10z"/><path fill="#f9004c" d="M1460 550h10v10h-10z"/><path fill="#f30046" d="M1470 550h10v10h-10z"/><path fill="#ec0040" d="M1480 550h10v10h-10z"/><path fill="#e3003a" d="M1490 550h10v10h-10z"/><path fill="#d90034" d="M1500 550h10v10h-10z"/><path fill="#cd002e" d="M1510 550h10v10h-10z"/><path fill="#bf0029" d="M1520 550h10v10h-10z"/><path fill="#b00023" d="M1530 550h10v10h-10z"/><path fill="#9f001e" d="M1540 550h10v10h-10z"/><path fill="#99001b" d="M1550 550h10v10h-10z"/><path fill="#990019" d="M1560 550h10v10h-10z"/><path fill="#0000ff" d="M1140 560h10v10h-10z"/><path fill="#0000ff" d="M1150 560h10v10h-10z"/><path fill="#0c00ff" d="M1160 560h10v10h-10z"/><path fill="#1b00ff" d="M1170 560h10v10h-10z"/><path fill="#2a00ff" d="M1180 560h10v10h-10z"/><path fill="#3a00ff" d="M1190 560h10v10h-10z"/><path fill="#4a00ff" d="M1200 560h10v10h-10z"/><path fill="#5b00ff" d="M1210 560h10v10h-10z"/><path fill="#6c00ff" d="M1220 560h10v10h-10z"/><path fill="#7e00ff" d="M1230 560h10v10h-10z"/><path fill="#9000ff" d="M1240 560h10v10h-10z"/><path fill="#a300ff" d="M1250 560h10v10h-10z"/><path fill="#b700ff" d="M1260 560h10v10h-10z"/><path fill="#cb00ff" d="M1270 560h10v10h-10z"/><path fill="#e100ff" d="M1280 560h10v10h-10z"/><path fill="#f700ff" d="M1290 560h10v10h-10z"/><path fill="#ff00f1" d="M1300 560h10v10h-10z"/><path fill="#ff00de" d="M1310 560h10v10h-10z"/><path fill="#ff00cd" d="M1320 560h10v10h-10z"/><path fill="#ff00bd" d="M1330 560h10v10h-10z"/><path fill="#ff00b0" d="M1340 560h10v10h-10z"/><path fill="#ff00a3" d="M1350 560h10v10h-10z"/><path fill="#ff0098" d="M1360 560h10v10h-10z"/><path fill="#ff008e" d="M1370 560h10v10h-10z"/><path fill="#ff0085" d="M1380 560h10v10h-10z"/><path fill="#ff007c" d="M1390 560h10v10h-10z"/><path fill="#ff0075" d="M1400 560h10v10h-10z"/><path fill="#ff006e" d="M1410 560h10v10h-10z"/><path fill="#ff0067" d="M1420 560h10v10h-10z"/><path fill="#ff0061" d="M1430 560h10v10h-10z"/><path fill="#fe005b" d="M1440 560h10v10h-10z"/><path fill="#fc0055" d="M1450 560h10v10h-10z"/><path fill="#f9004f" d="M1460 560h10v10h-10z"/><path fill="#f30048" d="M1470 560h10v10h-10z"/><path fill="#ec0042" d="M1480 560h10v10h-10z"/><path fill="#e3003c" d="M1490 560h10v10h-10z"/><path fill="#d90036" d="M1500 560h10v10h-10z"/><path fill="#cd0030" d="M1510 560h10v10h-10z"/><path fill="#bf002a" d="M1520 560h10v10h-10z"/><path fill="#b00025" d="M1530 560h10v10h-10z"/><path fill="#9f001f" d="M1540 560h10v10h-10z"/><path fill="#99001c" d="M1550 560h10v10h-10z"/><path fill="#99001b" d="M1560 560h10v10h-10z"/><path fill="#0000ff" d="M1140 570h10v10h-10z"/><path fill="#0300ff" d="M1150 570h10v10h-10z"/><path fill="#1100ff" d="M1160 570h10v10h-10z"/><path fill="#1f00ff" d="M1170 570h10v10h-10z"/><path fill="#2e00ff" d="M1180 570h10v10h-10z"/><path fill="#3d00ff" d="M1190 570h10v10h-10z"/><path fill="#4d00ff" d="M1200 570h10v10h-10z"/><path fill="#5d00ff" d="M1210 570h10v10h-10z"/><path fill="#6e00ff" d="M1220 570h10v10h-10z"/><path fill="#8000ff" d="M1230 570h10v10h-10z"/><path fill="#9200ff" d="M1240 570h10v10h-10z"/><path fill="#a400ff" d="M1250 570h10v10h-10z"/><path fill="#b800ff" d="M1260 570h10v10h-10z"/><path fill="#cc00ff" d="M1270 570h10v10h-10z"/><path fill="#e000ff" d="M1280 570h10v10h-10z"/><path fill="#f600ff" d="M1290 570h10v10h-10z"/><path fill="#ff00f3" d="M1300 570h10v10h-10z"/><path fill="#ff00e0" d="M1310 570h10v10h-10z"/><path fill="#ff00cf" d="M1320 570h10v10h-10z"/><path fill="#ff00bf" d="M1330 570h10v10h-10z"/><path fill="#ff00b2" d="M1340 570h10v10h-10z"/><path fill="#ff00a6" d="M1350 570h10v10h-10z"/><path fill="#ff009b" d="M1360 570h10v10h-10z"/><path fill="#ff0091" d="M1370 570h10v10h-10z"/><path fill="#ff0087" d="M1380 570h10v10h-10z"/><path fill="#ff007f" d="M1390 570h10v10h-10z"/><path fill="#ff0077" d="M1400 570h10v10h-10z"/><path fill="#ff0070" d="M1410 570h10v10h-10z"/><path fill="#ff0069" d="M1420 570h10v10h-10z"/><path fill="#ff0063" d="M1430 570h10v10h-10z"/><path fill="#fe005d" d="M1440 570h10v10h-10z"/><path fill="#fc0057" d="M1450 570h10v10h-10z"/><path fill="#f90051" d="M1460 570h10v10h-10z"/><path fill="#f3004b" d="M1470 570h10v10h-10z"/><path fill="#ec0045" d="M1480 570h10v10h-10z"/><path fill="#e3003e" d="M1490 570h10v10h-10z"/><path fill="#d90038" d="M1500 570h10v10h-10z"/><path fill="#cd0032" d="M1510 570h10v10h-10z"/><path fill="#bf002c" d="M1520 570h10v10h-10z"/><path fill="#b00026" d="M1530 570h10v10h-10z"/><path fill="#9f0021" d="M1540 570h10v10h-10z"/><path fill="#99001e" d="M1550 570h10v10h-10z"/><path fill="#99001c" d="M1560 570h10v10h-10z"/></g></g>
<rect x="1039.3" y="45.2" width="668.5" height="550.9" fill="none" stroke="#9a9a9a" stroke-width="1.5"/>
<path d="M1039.8 596.1L1039.8 603" stroke="#cccccc" stroke-width="1.5" />
<text x="1039.8" y="620" font-size="15.8" fill="#d6d6d6" text-anchor="middle" font-weight="normal" >0</text>
<path d="M1033.5 597.1L1039.3 597.1" stroke="#cccccc" stroke-width="1.5" />
<text x="1034.5" y="602.9" font-size="15.8" fill="#d6d6d6" text-anchor="end" font-weight="normal" >0</text>
<path d="M1119.25 596.1L1119.25 603" stroke="#cccccc" stroke-width="1.5" />
<text x="1119.25" y="620" font-size="15.8" fill="#d6d6d6" text-anchor="middle" font-weight="normal" >0,1</text>
<path d="M1033.5 531.48L1039.3 531.48" stroke="#cccccc" stroke-width="1.5" />
<text x="1034.5" y="537.28" font-size="15.8" fill="#d6d6d6" text-anchor="end" font-weight="normal" >0,1</text>
<path d="M1198.7 596.1L1198.7 603" stroke="#cccccc" stroke-width="1.5" />
<text x="1198.7" y="620" font-size="15.8" fill="#d6d6d6" text-anchor="middle" font-weight="normal" >0,2</text>
<path d="M1033.5 465.86L1039.3 465.86" stroke="#cccccc" stroke-width="1.5" />
<text x="1034.5" y="471.66" font-size="15.8" fill="#d6d6d6" text-anchor="end" font-weight="normal" >0,2</text>
<path d="M1278.15 596.1L1278.15 603" stroke="#cccccc" stroke-width="1.5" />
<text x="1278.15" y="620" font-size="15.8" fill="#d6d6d6" text-anchor="middle" font-weight="normal" >0,3</text>
<path d="M1033.5 400.24L1039.3 400.24" stroke="#cccccc" stroke-width="1.5" />
<text x="1034.5" y="406.04" font-size="15.8" fill="#d6d6d6" text-anchor="end" font-weight="normal" >0,3</text>
<path d="M1357.6 596.1L1357.6 603" stroke="#cccccc" stroke-width="1.5" />
<text x="1357.6" y="620" font-size="15.8" fill="#d6d6d6" text-anchor="middle" font-weight="normal" >0,4</text>
<path d="M1033.5 334.62L1039.3 334.62" stroke="#cccccc" stroke-width="1.5" />
<text x="1034.5" y="340.42" font-size="15.8" fill="#d6d6d6" text-anchor="end" font-weight="normal" >0,4</text>
<path d="M1437.05 596.1L1437.05 603" stroke="#cccccc" stroke-width="1.5" />
<text x="1437.05" y="620" font-size="15.8" fill="#d6d6d6" text-anchor="middle" font-weight="normal" >0,5</text>
<path d="M1033.5 269L1039.3 269" stroke="#cccccc" stroke-width="1.5" />
<text x="1034.5" y="274.8" font-size="15.8" fill="#d6d6d6" text-anchor="end" font-weight="normal" >0,5</text>
<path d="M1516.5 596.1L1516.5 603" stroke="#cccccc" stroke-width="1.5" />
<text x="1516.5" y="620" font-size="15.8" fill="#d6d6d6" text-anchor="middle" font-weight="normal" >0,6</text>
<path d="M1033.5 203.38L1039.3 203.38" stroke="#cccccc" stroke-width="1.5" />
<text x="1034.5" y="209.18" font-size="15.8" fill="#d6d6d6" text-anchor="end" font-weight="normal" >0,6</text>
<path d="M1595.95 596.1L1595.95 603" stroke="#cccccc" stroke-width="1.5" />
<text x="1595.95" y="620" font-size="15.8" fill="#d6d6d6" text-anchor="middle" font-weight="normal" >0,7</text>
<path d="M1033.5 137.76L1039.3 137.76" stroke="#cccccc" stroke-width="1.5" />
<text x="1034.5" y="143.56" font-size="15.8" fill="#d6d6d6" text-anchor="end" font-weight="normal" >0,7</text>
<path d="M1675.4 596.1L1675.4 603" stroke="#cccccc" stroke-width="1.5" />
<text x="1675.4" y="620" font-size="15.8" fill="#d6d6d6" text-anchor="middle" font-weight="normal" >0,8</text>
<path d="M1033.5 72.14L1039.3 72.14" stroke="#cccccc" stroke-width="1.5" />
<text x="1034.5" y="77.94" font-size="15.8" fill="#d6d6d6" text-anchor="end" font-weight="normal" >0,8</text>
<rect x="1270.1" y="194.4" width="14.8" height="14.8" fill="none" stroke="#f4f4f4" stroke-opacity="0.88" stroke-width="1.8"/>
<rect x="1273.1" y="233.3" width="14.8" height="14.8" fill="none" stroke="#f4f4f4" stroke-opacity="0.88" stroke-width="1.8"/>
<rect x="1274.6" y="267.1" width="14.8" height="14.8" fill="none" stroke="#f4f4f4" stroke-opacity="0.88" stroke-width="1.8"/>
<rect x="1275.9" y="302.6" width="14.8" height="14.8" fill="none" stroke="#f4f4f4" stroke-opacity="0.88" stroke-width="1.8"/>
<rect x="1279.2" y="336.7" width="14.8" height="14.8" fill="none" stroke="#f4f4f4" stroke-opacity="0.88" stroke-width="1.8"/>
<rect x="1366.1" y="256.6" width="14.8" height="14.8" fill="none" stroke="#f4f4f4" stroke-opacity="0.88" stroke-width="1.8"/>
<rect x="1347.9" y="281.3" width="14.8" height="14.8" fill="none" stroke="#f4f4f4" stroke-opacity="0.88" stroke-width="1.8"/>
<rect x="1332.3" y="302.6" width="14.8" height="14.8" fill="none" stroke="#f4f4f4" stroke-opacity="0.88" stroke-width="1.8"/>
<rect x="1315.2" y="324.6" width="14.8" height="14.8" fill="none" stroke="#f4f4f4" stroke-opacity="0.88" stroke-width="1.8"/>
<rect x="1297.2" y="347.7" width="14.8" height="14.8" fill="none" stroke="#f4f4f4" stroke-opacity="0.88" stroke-width="1.8"/>
<rect x="1541" y="372.5" width="14.8" height="14.8" fill="none" stroke="#f4f4f4" stroke-opacity="0.88" stroke-width="1.8"/>
<rect x="1483.7" y="372.5" width="14.8" height="14.8" fill="none" stroke="#f4f4f4" stroke-opacity="0.88" stroke-width="1.8"/>
<rect x="1432" y="372.5" width="14.8" height="14.8" fill="none" stroke="#f4f4f4" stroke-opacity="0.88" stroke-width="1.8"/>
<rect x="1385" y="372.5" width="14.8" height="14.8" fill="none" stroke="#f4f4f4" stroke-opacity="0.88" stroke-width="1.8"/>
<rect x="1331.2" y="372.5" width="14.8" height="14.8" fill="none" stroke="#f4f4f4" stroke-opacity="0.88" stroke-width="1.8"/>
<rect x="1209.6" y="372.4" width="14.8" height="14.8" fill="none" stroke="#f4f4f4" stroke-opacity="0.88" stroke-width="1.8"/>
<rect x="1224.8" y="372.4" width="14.8" height="14.8" fill="none" stroke="#f4f4f4" stroke-opacity="0.88" stroke-width="1.8"/>
<rect x="1240.1" y="372.4" width="14.8" height="14.8" fill="none" stroke="#f4f4f4" stroke-opacity="0.88" stroke-width="1.8"/>
<rect x="1254.6" y="372.4" width="14.8" height="14.8" fill="none" stroke="#f4f4f4" stroke-opacity="0.88" stroke-width="1.8"/>
<rect x="1267.6" y="372.4" width="14.8" height="14.8" fill="none" stroke="#f4f4f4" stroke-opacity="0.88" stroke-width="1.8"/>
<rect x="1151" y="548.4" width="14.8" height="14.8" fill="none" stroke="#f4f4f4" stroke-opacity="0.88" stroke-width="1.8"/>
<rect x="1178.9" y="509.8" width="14.8" height="14.8" fill="none" stroke="#f4f4f4" stroke-opacity="0.88" stroke-width="1.8"/>
<rect x="1204.4" y="476.1" width="14.8" height="14.8" fill="none" stroke="#f4f4f4" stroke-opacity="0.88" stroke-width="1.8"/>
<rect x="1228" y="443.4" width="14.8" height="14.8" fill="none" stroke="#f4f4f4" stroke-opacity="0.88" stroke-width="1.8"/>
<rect x="1255" y="407.6" width="14.8" height="14.8" fill="none" stroke="#f4f4f4" stroke-opacity="0.88" stroke-width="1.8"/>
<rect x="1287" y="486.6" width="14.8" height="14.8" fill="none" stroke="#f4f4f4" stroke-opacity="0.88" stroke-width="1.8"/>
<rect x="1285.9" y="462.6" width="14.8" height="14.8" fill="none" stroke="#f4f4f4" stroke-opacity="0.88" stroke-width="1.8"/>
<rect x="1283.8" y="440.2" width="14.8" height="14.8" fill="none" stroke="#f4f4f4" stroke-opacity="0.88" stroke-width="1.8"/>
<rect x="1283.4" y="419.2" width="14.8" height="14.8" fill="none" stroke="#f4f4f4" stroke-opacity="0.88" stroke-width="1.8"/>
<rect x="1281.3" y="395.6" width="14.8" height="14.8" fill="none" stroke="#f4f4f4" stroke-opacity="0.88" stroke-width="1.8"/>
<circle cx="1301.4" cy="246" r="5.2" fill="#14a114" stroke="#1a1a1a" stroke-width="1.3"/>
<circle cx="1301.4" cy="268.8" r="5.2" fill="#40a540" stroke="#1a1a1a" stroke-width="1.3"/>
<circle cx="1297.4" cy="296.9" r="5.2" fill="#62a862" stroke="#1a1a1a" stroke-width="1.3"/>
<circle cx="1296" cy="323.8" r="5.2" fill="#7eab7e" stroke="#1a1a1a" stroke-width="1.3"/>
<circle cx="1291.5" cy="351.7" r="5.2" fill="#99ae99" stroke="#1a1a1a" stroke-width="1.3"/>
<circle cx="1361.9" cy="287.7" r="5.2" fill="#bfb81f" stroke="#1a1a1a" stroke-width="1.3"/>
<circle cx="1349.4" cy="303.9" r="5.2" fill="#bbb547" stroke="#1a1a1a" stroke-width="1.3"/>
<circle cx="1335.3" cy="321.5" r="5.2" fill="#b8b467" stroke="#1a1a1a" stroke-width="1.3"/>
<circle cx="1320" cy="340.9" r="5.2" fill="#b5b281" stroke="#1a1a1a" stroke-width="1.3"/>
<circle cx="1304.4" cy="358.9" r="5.2" fill="#b2b19a" stroke="#1a1a1a" stroke-width="1.3"/>
<circle cx="1238.5" cy="377.6" r="5.2" fill="#1fa8b0" stroke="#1a1a1a" stroke-width="1.3"/>
<circle cx="1248" cy="379.8" r="5.2" fill="#47aab0" stroke="#1a1a1a" stroke-width="1.3"/>
<circle cx="1258.6" cy="379.8" r="5.2" fill="#67acb0" stroke="#1a1a1a" stroke-width="1.3"/>
<circle cx="1268" cy="379.8" r="5.2" fill="#81aeb0" stroke="#1a1a1a" stroke-width="1.3"/>
<circle cx="1277.5" cy="379.8" r="5.2" fill="#9aafb0" stroke="#1a1a1a" stroke-width="1.3"/>
<circle cx="1481.4" cy="376.9" r="5.2" fill="#c20000" stroke="#1a1a1a" stroke-width="1.3"/>
<circle cx="1447.4" cy="374.8" r="5.2" fill="#bd3131" stroke="#1a1a1a" stroke-width="1.3"/>
<circle cx="1406.6" cy="374.8" r="5.2" fill="#b95858" stroke="#1a1a1a" stroke-width="1.3"/>
<circle cx="1367.5" cy="376.9" r="5.2" fill="#b67878" stroke="#1a1a1a" stroke-width="1.3"/>
<circle cx="1325.3" cy="378" r="5.2" fill="#b39696" stroke="#1a1a1a" stroke-width="1.3"/>
<circle cx="1165.2" cy="533.6" r="5.2" fill="#0f0f9e" stroke="#1a1a1a" stroke-width="1.3"/>
<circle cx="1191.1" cy="499.9" r="5.2" fill="#3c3ca3" stroke="#1a1a1a" stroke-width="1.3"/>
<circle cx="1216.4" cy="468.7" r="5.2" fill="#6060a7" stroke="#1a1a1a" stroke-width="1.3"/>
<circle cx="1241.3" cy="438.8" r="5.2" fill="#7d7daa" stroke="#1a1a1a" stroke-width="1.3"/>
<circle cx="1263.4" cy="408.8" r="5.2" fill="#9898ad" stroke="#1a1a1a" stroke-width="1.3"/>
<circle cx="1279.2" cy="477.1" r="5.2" fill="#b00fa1" stroke="#1a1a1a" stroke-width="1.3"/>
<circle cx="1280.3" cy="456.7" r="5.2" fill="#b03ca5" stroke="#1a1a1a" stroke-width="1.3"/>
<circle cx="1282.2" cy="435.6" r="5.2" fill="#b060a8" stroke="#1a1a1a" stroke-width="1.3"/>
<circle cx="1283.4" cy="417.7" r="5.2" fill="#b07dab" stroke="#1a1a1a" stroke-width="1.3"/>
<circle cx="1284.3" cy="398.7" r="5.2" fill="#b098ae" stroke="#1a1a1a" stroke-width="1.3"/>
<rect x="1279.5" y="372.3" width="15" height="15" fill="none" stroke="#000" stroke-width="2"/>
<circle cx="1287" cy="380.8" r="5.2" fill="#ffffff" stroke="#1a1a1a" stroke-width="1.3"/>
<rect x="1517.5" y="45.5" width="190" height="200.5" fill="url(#inU)" />
<path d="M1518 66.3L1707 224L1707 246L1518 246Z" fill="url(#inD)"/>
<rect x="1517.5" y="45.5" width="190" height="200.5" fill="none" stroke="#a0a0a0" stroke-width="1.5"/>
<rect x="1605.1" y="138.2" width="14.8" height="14.8" fill="none" stroke="#f4f4f4" stroke-opacity="0.88" stroke-width="1.8"/>
<rect x="1206" y="659" width="301.6" height="204" fill="#000" />
<rect x="0" y="887" width="1718" height="62" fill="url(#tb)" />
<rect x="0" y="887.5" width="45" height="62" rx="3" fill="url(#sw)"/>
<circle cx="22.5" cy="895.5" r="7" fill="#727272"/>
<path d="M18 898L22.5 893L27 898Z" fill="#222"/>
<rect x="5" y="913" width="35" height="31" rx="3" fill="#ffff00" stroke="#b8b000" stroke-width="1.2"/>
<rect x="51" y="887.5" width="150" height="62" rx="4" fill="url(#sw)"/>
<rect x="56" y="892" width="141" height="37" rx="4" fill="#c3c3a8" stroke="#6a6a40" stroke-width="1"/>
<text x="126" y="942.5" font-size="11" fill="#3a3a3a" text-anchor="middle" font-weight="normal" >20%</text>
<rect x="203.5" y="887.5" width="149.5" height="62" rx="4" fill="url(#sw)"/>
<rect x="208.5" y="892" width="140.5" height="37" rx="4" fill="#c3c18c" stroke="#6a6a40" stroke-width="1"/>
<text x="278.25" y="942.5" font-size="11" fill="#3a3a3a" text-anchor="middle" font-weight="normal" >40%</text>
<rect x="356" y="887.5" width="149" height="62" rx="4" fill="url(#sw)"/>
<rect x="361" y="892" width="140" height="37" rx="4" fill="#c3c272" stroke="#6a6a40" stroke-width="1"/>
<text x="430.5" y="942.5" font-size="11" fill="#3a3a3a" text-anchor="middle" font-weight="normal" >60%</text>
<rect x="507.5" y="887.5" width="149.5" height="62" rx="4" fill="url(#sw)"/>
<rect x="512.5" y="892" width="140.5" height="37" rx="4" fill="#c2c052" stroke="#6a6a40" stroke-width="1"/>
<text x="582.25" y="942.5" font-size="11" fill="#3a3a3a" text-anchor="middle" font-weight="normal" >80%</text>
<rect x="659" y="887.5" width="150" height="62" rx="4" fill="url(#swS)"/>
<rect x="664" y="892" width="141" height="37" rx="4" fill="#c4c000" stroke="#6a6a40" stroke-width="1"/>
<text x="734" y="942.5" font-size="10.5" fill="#e0e0e0" text-anchor="middle" font-weight="bold" >100%</text>
<rect x="1395.5" y="887" width="49" height="62" rx="3" fill="url(#sw)"/>
<path d="M1395.5 905.5L1444.5 905.5" stroke="#444" stroke-width="1" />
<circle cx="1420" cy="895" r="7" fill="#7a7a7a"/>
<path d="M1415.5 897.5L1420 892.5L1424.5 897.5Z" fill="#333"/>
<rect x="1403.5" y="910" width="33" height="35" rx="6" fill="none" stroke="#c8c8c8" stroke-width="1"/>
<rect x="1404.5" y="911" width="31" height="33" rx="5" fill="#acacac" stroke="#222" stroke-width="3"/>
<rect x="1406" y="927.5" width="28" height="15" fill="#000" fill-opacity="0.12"/>
<rect x="1413" y="920" width="14" height="14" fill="#0a0a0a" />
<rect x="1445" y="887" width="46" height="30" fill="url(#btn)"/>
<circle cx="1468" cy="901.5" r="10" fill="url(#circ)"/>
<rect x="1491.5" y="887" width="44.5" height="30" fill="url(#btn)"/>
<circle cx="1513.75" cy="901.5" r="10" fill="url(#circ)"/>
<rect x="1536.5" y="887" width="44.5" height="30" fill="url(#btn)"/>
<circle cx="1558.75" cy="901.5" r="10" fill="url(#circ)"/>
<rect x="1581.5" y="887" width="44.5" height="30" fill="url(#btn)"/>
<circle cx="1603.75" cy="901.5" r="10" fill="url(#circ)"/>
<rect x="1626.5" y="887" width="44.5" height="30" fill="url(#tbD)"/>
<circle cx="1648.75" cy="901.5" r="10" fill="url(#circD)"/>
<rect x="1671.5" y="887" width="46.5" height="30" fill="url(#tbD)"/>
<circle cx="1694.75" cy="901.5" r="10" fill="url(#circD)"/>
<rect x="1463.5" y="897.5" width="8" height="8" fill="#2a2a2a"/>
<path d="M1511 895.5L1519.5 901.5L1511 907.5Z" fill="#2a2a2a"/>
<path d="M1555.5 896.5h-2.3v10h2.3M1562.5 896.5h2.3v10h-2.3" fill="none" stroke="#2a2a2a" stroke-width="2"/>
<rect x="1557" y="901" width="1.6" height="1.6" fill="#2a2a2a"/><rect x="1559.6" y="901" width="1.6" height="1.6" fill="#2a2a2a"/>
<path d="M1600.5 901.5c0-2.6 3.6-2.6 6 0s6 2.6 6 0s-3.6-2.6-6 0s-6 2.6-6 0Z" fill="none" stroke="#2a2a2a" stroke-width="2"/>
<path d="M1644.5 899.5a5 5 0 0 1 8.5-2.2M1652.5 903.5a5 5 0 0 1-8.5 2.2" fill="none" stroke="#1c1c1c" stroke-width="2.2"/>
<path d="M1654.5 894.5v4.5h-4.5ZM1642.5 908.5v-4.5h4.5Z" fill="#1c1c1c"/>
<rect x="1445" y="918" width="136" height="31" fill="url(#btn)"/>
<rect x="1582" y="918" width="136" height="31" fill="url(#btn)"/>
<circle cx="1475.5" cy="932.5" r="10" fill="url(#circ)"/>
<circle cx="1688.8" cy="932.5" r="10" fill="url(#circ)"/>
<path d="M1473 927.5l-4.5 5 4.5 5M1478 927.5l-4.5 5 4.5 5" fill="none" stroke="#2a2a2a" stroke-width="1.8"/>
<path d="M1686.3 927.5l4.5 5-4.5 5M1691.3 927.5l4.5 5-4.5 5" fill="none" stroke="#2a2a2a" stroke-width="1.8"/>
<text x="1528" y="941.5" font-size="22" fill="#2e2e2e" text-anchor="middle" font-weight="normal" textLength="51" lengthAdjust="spacingAndGlyphs" stroke="#2e2e2e" stroke-width="0.8">Back</text>
<text x="1635" y="941.5" font-size="22" fill="#2e2e2e" text-anchor="middle" font-weight="normal" textLength="52" lengthAdjust="spacingAndGlyphs" stroke="#2e2e2e" stroke-width="0.8">Next</text>
</svg></body></html>
